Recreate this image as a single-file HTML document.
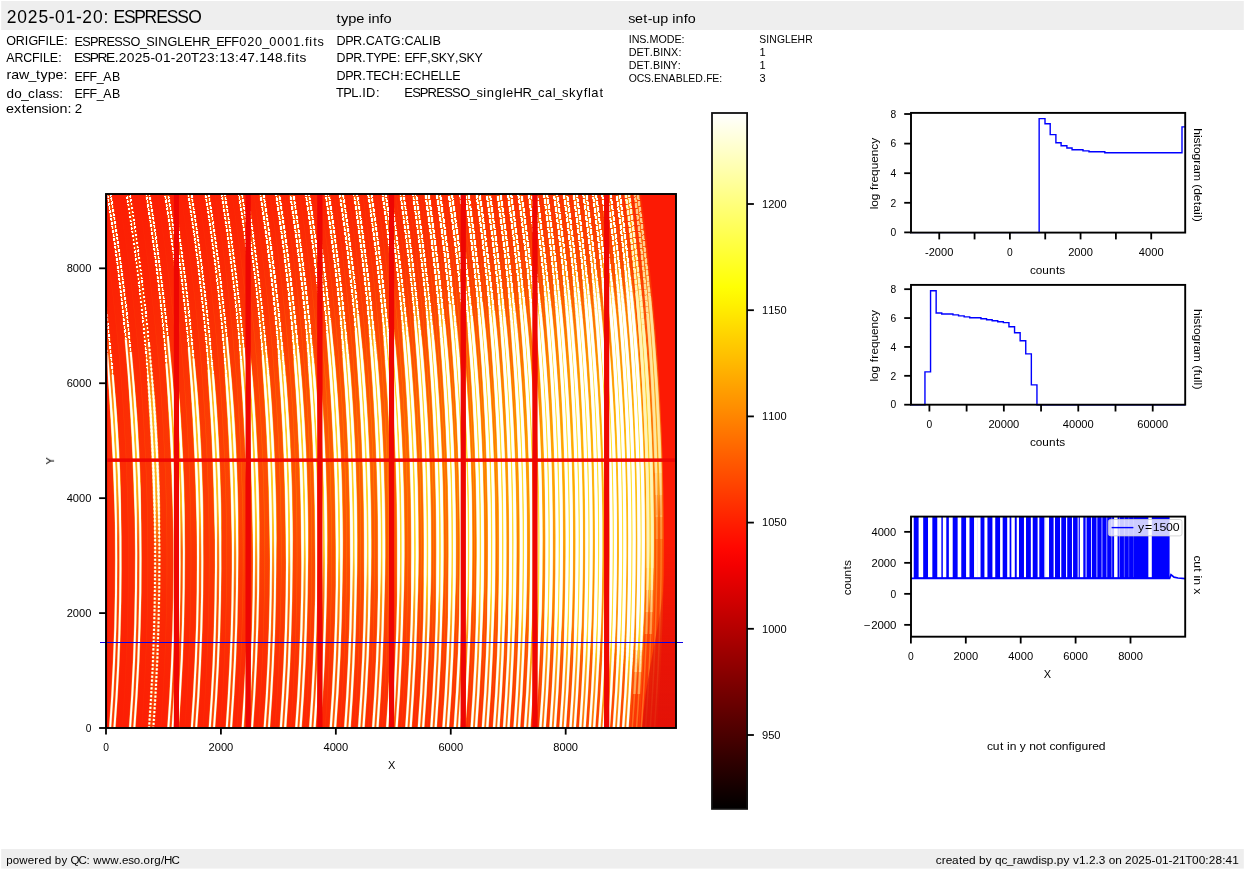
<!DOCTYPE html>
<html><head><meta charset="utf-8"><title>2025-01-20: ESPRESSO</title>
<style>html,body{margin:0;padding:0;background:#fff;}body{width:1245px;height:870px;overflow:hidden;font-family:"Liberation Sans",sans-serif;}svg{display:block;position:absolute;left:0;top:0;will-change:transform;}text{font-family:"Liberation Sans",sans-serif;white-space:pre;}</style>
</head><body>
<svg width="1245" height="870" viewBox="0 0 1245 870">
<defs><linearGradient id="hot" x1="0" y1="0" x2="0" y2="1"><stop offset="0.0000" stop-color="rgb(255,255,255)"/><stop offset="0.0250" stop-color="rgb(255,255,230)"/><stop offset="0.0500" stop-color="rgb(255,255,205)"/><stop offset="0.0750" stop-color="rgb(255,255,180)"/><stop offset="0.1000" stop-color="rgb(255,255,155)"/><stop offset="0.1250" stop-color="rgb(255,255,129)"/><stop offset="0.1500" stop-color="rgb(255,255,104)"/><stop offset="0.1750" stop-color="rgb(255,255,79)"/><stop offset="0.2000" stop-color="rgb(255,255,54)"/><stop offset="0.2250" stop-color="rgb(255,255,29)"/><stop offset="0.2500" stop-color="rgb(255,255,4)"/><stop offset="0.2750" stop-color="rgb(255,241,0)"/><stop offset="0.3000" stop-color="rgb(255,224,0)"/><stop offset="0.3250" stop-color="rgb(255,207,0)"/><stop offset="0.3500" stop-color="rgb(255,191,0)"/><stop offset="0.3750" stop-color="rgb(255,174,0)"/><stop offset="0.4000" stop-color="rgb(255,157,0)"/><stop offset="0.4250" stop-color="rgb(255,141,0)"/><stop offset="0.4500" stop-color="rgb(255,124,0)"/><stop offset="0.4750" stop-color="rgb(255,107,0)"/><stop offset="0.5000" stop-color="rgb(255,90,0)"/><stop offset="0.5250" stop-color="rgb(255,74,0)"/><stop offset="0.5500" stop-color="rgb(255,57,0)"/><stop offset="0.5750" stop-color="rgb(255,40,0)"/><stop offset="0.6000" stop-color="rgb(255,23,0)"/><stop offset="0.6250" stop-color="rgb(255,7,0)"/><stop offset="0.6500" stop-color="rgb(244,0,0)"/><stop offset="0.6750" stop-color="rgb(227,0,0)"/><stop offset="0.7000" stop-color="rgb(210,0,0)"/><stop offset="0.7250" stop-color="rgb(192,0,0)"/><stop offset="0.7500" stop-color="rgb(175,0,0)"/><stop offset="0.7750" stop-color="rgb(157,0,0)"/><stop offset="0.8000" stop-color="rgb(140,0,0)"/><stop offset="0.8250" stop-color="rgb(122,0,0)"/><stop offset="0.8500" stop-color="rgb(105,0,0)"/><stop offset="0.8750" stop-color="rgb(87,0,0)"/><stop offset="0.9000" stop-color="rgb(70,0,0)"/><stop offset="0.9250" stop-color="rgb(52,0,0)"/><stop offset="0.9500" stop-color="rgb(35,0,0)"/><stop offset="0.9750" stop-color="rgb(17,0,0)"/><stop offset="1.0000" stop-color="rgb(0,0,0)"/></linearGradient><linearGradient id="gy" gradientUnits="userSpaceOnUse" x1="0" y1="194.0" x2="0" y2="728.0"><stop offset="0.00" stop-color="#ffe800" stop-opacity="0.162"/><stop offset="0.05" stop-color="#ffe800" stop-opacity="0.218"/><stop offset="0.10" stop-color="#ffe800" stop-opacity="0.290"/><stop offset="0.15" stop-color="#ffe800" stop-opacity="0.379"/><stop offset="0.20" stop-color="#ffe800" stop-opacity="0.482"/><stop offset="0.25" stop-color="#ffe800" stop-opacity="0.593"/><stop offset="0.30" stop-color="#ffe800" stop-opacity="0.707"/><stop offset="0.35" stop-color="#ffe800" stop-opacity="0.814"/><stop offset="0.40" stop-color="#ffe800" stop-opacity="0.904"/><stop offset="0.45" stop-color="#ffe800" stop-opacity="0.967"/><stop offset="0.50" stop-color="#ffe800" stop-opacity="0.998"/><stop offset="0.55" stop-color="#ffe800" stop-opacity="0.992"/><stop offset="0.60" stop-color="#ffe800" stop-opacity="0.950"/><stop offset="0.65" stop-color="#ffe800" stop-opacity="0.877"/><stop offset="0.70" stop-color="#ffe800" stop-opacity="0.781"/><stop offset="0.75" stop-color="#ffe800" stop-opacity="0.670"/><stop offset="0.80" stop-color="#ffe800" stop-opacity="0.556"/><stop offset="0.85" stop-color="#ffe800" stop-opacity="0.447"/><stop offset="0.90" stop-color="#ffe800" stop-opacity="0.348"/><stop offset="0.95" stop-color="#ffe800" stop-opacity="0.265"/><stop offset="1.00" stop-color="#ffe800" stop-opacity="0.198"/></linearGradient>
<linearGradient id="gc0" gradientUnits="userSpaceOnUse" x1="0" y1="194.0" x2="0" y2="728.0"><stop offset="0.000" stop-color="#ffe428" stop-opacity="0.12"/><stop offset="0.083" stop-color="#ffe428" stop-opacity="0.12"/><stop offset="0.167" stop-color="#ffe428" stop-opacity="0.12"/><stop offset="0.250" stop-color="#ffe428" stop-opacity="0.12"/><stop offset="0.333" stop-color="#ffe428" stop-opacity="0.25"/><stop offset="0.417" stop-color="#ffe428" stop-opacity="0.64"/><stop offset="0.500" stop-color="#ffe428" stop-opacity="0.67"/><stop offset="0.583" stop-color="#ffe428" stop-opacity="0.47"/><stop offset="0.667" stop-color="#ffe428" stop-opacity="0.13"/><stop offset="0.750" stop-color="#ffe428" stop-opacity="0.12"/><stop offset="0.833" stop-color="#ffe428" stop-opacity="0.12"/><stop offset="0.917" stop-color="#ffe428" stop-opacity="0.12"/><stop offset="1.000" stop-color="#ffe428" stop-opacity="0.12"/></linearGradient>
<linearGradient id="gc1" gradientUnits="userSpaceOnUse" x1="0" y1="194.0" x2="0" y2="728.0"><stop offset="0.000" stop-color="#ffe428" stop-opacity="0.13"/><stop offset="0.083" stop-color="#ffe428" stop-opacity="0.13"/><stop offset="0.167" stop-color="#ffe428" stop-opacity="0.13"/><stop offset="0.250" stop-color="#ffe428" stop-opacity="0.13"/><stop offset="0.333" stop-color="#ffe428" stop-opacity="0.32"/><stop offset="0.417" stop-color="#ffe428" stop-opacity="0.67"/><stop offset="0.500" stop-color="#ffe428" stop-opacity="0.69"/><stop offset="0.583" stop-color="#ffe428" stop-opacity="0.57"/><stop offset="0.667" stop-color="#ffe428" stop-opacity="0.16"/><stop offset="0.750" stop-color="#ffe428" stop-opacity="0.13"/><stop offset="0.833" stop-color="#ffe428" stop-opacity="0.13"/><stop offset="0.917" stop-color="#ffe428" stop-opacity="0.13"/><stop offset="1.000" stop-color="#ffe428" stop-opacity="0.13"/></linearGradient>
<linearGradient id="gc2" gradientUnits="userSpaceOnUse" x1="0" y1="194.0" x2="0" y2="728.0"><stop offset="0.000" stop-color="#ffe428" stop-opacity="0.14"/><stop offset="0.083" stop-color="#ffe428" stop-opacity="0.14"/><stop offset="0.167" stop-color="#ffe428" stop-opacity="0.14"/><stop offset="0.250" stop-color="#ffe428" stop-opacity="0.14"/><stop offset="0.333" stop-color="#ffe428" stop-opacity="0.38"/><stop offset="0.417" stop-color="#ffe428" stop-opacity="0.67"/><stop offset="0.500" stop-color="#ffe428" stop-opacity="0.70"/><stop offset="0.583" stop-color="#ffe428" stop-opacity="0.66"/><stop offset="0.667" stop-color="#ffe428" stop-opacity="0.23"/><stop offset="0.750" stop-color="#ffe428" stop-opacity="0.14"/><stop offset="0.833" stop-color="#ffe428" stop-opacity="0.14"/><stop offset="0.917" stop-color="#ffe428" stop-opacity="0.14"/><stop offset="1.000" stop-color="#ffe428" stop-opacity="0.14"/></linearGradient>
<linearGradient id="gc3" gradientUnits="userSpaceOnUse" x1="0" y1="194.0" x2="0" y2="728.0"><stop offset="0.000" stop-color="#ffe428" stop-opacity="0.15"/><stop offset="0.083" stop-color="#ffe428" stop-opacity="0.15"/><stop offset="0.167" stop-color="#ffe428" stop-opacity="0.15"/><stop offset="0.250" stop-color="#ffe428" stop-opacity="0.15"/><stop offset="0.333" stop-color="#ffe428" stop-opacity="0.44"/><stop offset="0.417" stop-color="#ffe428" stop-opacity="0.68"/><stop offset="0.500" stop-color="#ffe428" stop-opacity="0.72"/><stop offset="0.583" stop-color="#ffe428" stop-opacity="0.71"/><stop offset="0.667" stop-color="#ffe428" stop-opacity="0.33"/><stop offset="0.750" stop-color="#ffe428" stop-opacity="0.16"/><stop offset="0.833" stop-color="#ffe428" stop-opacity="0.15"/><stop offset="0.917" stop-color="#ffe428" stop-opacity="0.15"/><stop offset="1.000" stop-color="#ffe428" stop-opacity="0.15"/></linearGradient>
<linearGradient id="gc4" gradientUnits="userSpaceOnUse" x1="0" y1="194.0" x2="0" y2="728.0"><stop offset="0.000" stop-color="#ffe428" stop-opacity="0.16"/><stop offset="0.083" stop-color="#ffe428" stop-opacity="0.16"/><stop offset="0.167" stop-color="#ffe428" stop-opacity="0.16"/><stop offset="0.250" stop-color="#ffe428" stop-opacity="0.17"/><stop offset="0.333" stop-color="#ffe428" stop-opacity="0.50"/><stop offset="0.417" stop-color="#ffe428" stop-opacity="0.69"/><stop offset="0.500" stop-color="#ffe428" stop-opacity="0.73"/><stop offset="0.583" stop-color="#ffe428" stop-opacity="0.74"/><stop offset="0.667" stop-color="#ffe428" stop-opacity="0.43"/><stop offset="0.750" stop-color="#ffe428" stop-opacity="0.18"/><stop offset="0.833" stop-color="#ffe428" stop-opacity="0.16"/><stop offset="0.917" stop-color="#ffe428" stop-opacity="0.16"/><stop offset="1.000" stop-color="#ffe428" stop-opacity="0.16"/></linearGradient>
<linearGradient id="gc5" gradientUnits="userSpaceOnUse" x1="0" y1="194.0" x2="0" y2="728.0"><stop offset="0.000" stop-color="#ffe428" stop-opacity="0.17"/><stop offset="0.083" stop-color="#ffe428" stop-opacity="0.17"/><stop offset="0.167" stop-color="#ffe428" stop-opacity="0.17"/><stop offset="0.250" stop-color="#ffe428" stop-opacity="0.20"/><stop offset="0.333" stop-color="#ffe428" stop-opacity="0.55"/><stop offset="0.417" stop-color="#ffe428" stop-opacity="0.70"/><stop offset="0.500" stop-color="#ffe428" stop-opacity="0.75"/><stop offset="0.583" stop-color="#ffe428" stop-opacity="0.76"/><stop offset="0.667" stop-color="#ffe428" stop-opacity="0.54"/><stop offset="0.750" stop-color="#ffe428" stop-opacity="0.20"/><stop offset="0.833" stop-color="#ffe428" stop-opacity="0.17"/><stop offset="0.917" stop-color="#ffe428" stop-opacity="0.17"/><stop offset="1.000" stop-color="#ffe428" stop-opacity="0.17"/></linearGradient>
<linearGradient id="gc6" gradientUnits="userSpaceOnUse" x1="0" y1="194.0" x2="0" y2="728.0"><stop offset="0.000" stop-color="#ffe428" stop-opacity="0.18"/><stop offset="0.083" stop-color="#ffe428" stop-opacity="0.18"/><stop offset="0.167" stop-color="#ffe428" stop-opacity="0.18"/><stop offset="0.250" stop-color="#ffe428" stop-opacity="0.24"/><stop offset="0.333" stop-color="#ffe428" stop-opacity="0.60"/><stop offset="0.417" stop-color="#ffe428" stop-opacity="0.72"/><stop offset="0.500" stop-color="#ffe428" stop-opacity="0.77"/><stop offset="0.583" stop-color="#ffe428" stop-opacity="0.78"/><stop offset="0.667" stop-color="#ffe428" stop-opacity="0.64"/><stop offset="0.750" stop-color="#ffe428" stop-opacity="0.24"/><stop offset="0.833" stop-color="#ffe428" stop-opacity="0.18"/><stop offset="0.917" stop-color="#ffe428" stop-opacity="0.18"/><stop offset="1.000" stop-color="#ffe428" stop-opacity="0.18"/></linearGradient>
<linearGradient id="gc7" gradientUnits="userSpaceOnUse" x1="0" y1="194.0" x2="0" y2="728.0"><stop offset="0.000" stop-color="#ffe428" stop-opacity="0.19"/><stop offset="0.083" stop-color="#ffe428" stop-opacity="0.19"/><stop offset="0.167" stop-color="#ffe428" stop-opacity="0.19"/><stop offset="0.250" stop-color="#ffe428" stop-opacity="0.29"/><stop offset="0.333" stop-color="#ffe428" stop-opacity="0.63"/><stop offset="0.417" stop-color="#ffe428" stop-opacity="0.74"/><stop offset="0.500" stop-color="#ffe428" stop-opacity="0.79"/><stop offset="0.583" stop-color="#ffe428" stop-opacity="0.79"/><stop offset="0.667" stop-color="#ffe428" stop-opacity="0.72"/><stop offset="0.750" stop-color="#ffe428" stop-opacity="0.31"/><stop offset="0.833" stop-color="#ffe428" stop-opacity="0.19"/><stop offset="0.917" stop-color="#ffe428" stop-opacity="0.19"/><stop offset="1.000" stop-color="#ffe428" stop-opacity="0.19"/></linearGradient>
<linearGradient id="gc8" gradientUnits="userSpaceOnUse" x1="0" y1="194.0" x2="0" y2="728.0"><stop offset="0.000" stop-color="#ffe428" stop-opacity="0.20"/><stop offset="0.083" stop-color="#ffe428" stop-opacity="0.20"/><stop offset="0.167" stop-color="#ffe428" stop-opacity="0.20"/><stop offset="0.250" stop-color="#ffe428" stop-opacity="0.34"/><stop offset="0.333" stop-color="#ffe428" stop-opacity="0.66"/><stop offset="0.417" stop-color="#ffe428" stop-opacity="0.76"/><stop offset="0.500" stop-color="#ffe428" stop-opacity="0.81"/><stop offset="0.583" stop-color="#ffe428" stop-opacity="0.81"/><stop offset="0.667" stop-color="#ffe428" stop-opacity="0.78"/><stop offset="0.750" stop-color="#ffe428" stop-opacity="0.41"/><stop offset="0.833" stop-color="#ffe428" stop-opacity="0.21"/><stop offset="0.917" stop-color="#ffe428" stop-opacity="0.20"/><stop offset="1.000" stop-color="#ffe428" stop-opacity="0.20"/></linearGradient>
<linearGradient id="gc9" gradientUnits="userSpaceOnUse" x1="0" y1="194.0" x2="0" y2="728.0"><stop offset="0.000" stop-color="#ffe428" stop-opacity="0.21"/><stop offset="0.083" stop-color="#ffe428" stop-opacity="0.21"/><stop offset="0.167" stop-color="#ffe428" stop-opacity="0.21"/><stop offset="0.250" stop-color="#ffe428" stop-opacity="0.39"/><stop offset="0.333" stop-color="#ffe428" stop-opacity="0.67"/><stop offset="0.417" stop-color="#ffe428" stop-opacity="0.78"/><stop offset="0.500" stop-color="#ffe428" stop-opacity="0.83"/><stop offset="0.583" stop-color="#ffe428" stop-opacity="0.83"/><stop offset="0.667" stop-color="#ffe428" stop-opacity="0.82"/><stop offset="0.750" stop-color="#ffe428" stop-opacity="0.51"/><stop offset="0.833" stop-color="#ffe428" stop-opacity="0.24"/><stop offset="0.917" stop-color="#ffe428" stop-opacity="0.21"/><stop offset="1.000" stop-color="#ffe428" stop-opacity="0.21"/></linearGradient>
<linearGradient id="gc10" gradientUnits="userSpaceOnUse" x1="0" y1="194.0" x2="0" y2="728.0"><stop offset="0.000" stop-color="#ffe428" stop-opacity="0.22"/><stop offset="0.083" stop-color="#ffe428" stop-opacity="0.22"/><stop offset="0.167" stop-color="#ffe428" stop-opacity="0.22"/><stop offset="0.250" stop-color="#ffe428" stop-opacity="0.44"/><stop offset="0.333" stop-color="#ffe428" stop-opacity="0.69"/><stop offset="0.417" stop-color="#ffe428" stop-opacity="0.80"/><stop offset="0.500" stop-color="#ffe428" stop-opacity="0.84"/><stop offset="0.583" stop-color="#ffe428" stop-opacity="0.84"/><stop offset="0.667" stop-color="#ffe428" stop-opacity="0.84"/><stop offset="0.750" stop-color="#ffe428" stop-opacity="0.61"/><stop offset="0.833" stop-color="#ffe428" stop-opacity="0.28"/><stop offset="0.917" stop-color="#ffe428" stop-opacity="0.22"/><stop offset="1.000" stop-color="#ffe428" stop-opacity="0.22"/></linearGradient>
<linearGradient id="gc11" gradientUnits="userSpaceOnUse" x1="0" y1="194.0" x2="0" y2="728.0"><stop offset="0.000" stop-color="#ffe428" stop-opacity="0.22"/><stop offset="0.083" stop-color="#ffe428" stop-opacity="0.22"/><stop offset="0.167" stop-color="#ffe428" stop-opacity="0.23"/><stop offset="0.250" stop-color="#ffe428" stop-opacity="0.48"/><stop offset="0.333" stop-color="#ffe428" stop-opacity="0.71"/><stop offset="0.417" stop-color="#ffe428" stop-opacity="0.83"/><stop offset="0.500" stop-color="#ffe428" stop-opacity="0.86"/><stop offset="0.583" stop-color="#ffe428" stop-opacity="0.86"/><stop offset="0.667" stop-color="#ffe428" stop-opacity="0.86"/><stop offset="0.750" stop-color="#ffe428" stop-opacity="0.70"/><stop offset="0.833" stop-color="#ffe428" stop-opacity="0.33"/><stop offset="0.917" stop-color="#ffe428" stop-opacity="0.22"/><stop offset="1.000" stop-color="#ffe428" stop-opacity="0.22"/></linearGradient>
<linearGradient id="gc12" gradientUnits="userSpaceOnUse" x1="0" y1="194.0" x2="0" y2="728.0"><stop offset="0.000" stop-color="#ffe428" stop-opacity="0.23"/><stop offset="0.083" stop-color="#ffe428" stop-opacity="0.23"/><stop offset="0.167" stop-color="#ffe428" stop-opacity="0.25"/><stop offset="0.250" stop-color="#ffe428" stop-opacity="0.53"/><stop offset="0.333" stop-color="#ffe428" stop-opacity="0.73"/><stop offset="0.417" stop-color="#ffe428" stop-opacity="0.86"/><stop offset="0.500" stop-color="#ffe428" stop-opacity="0.88"/><stop offset="0.583" stop-color="#ffe428" stop-opacity="0.88"/><stop offset="0.667" stop-color="#ffe428" stop-opacity="0.88"/><stop offset="0.750" stop-color="#ffe428" stop-opacity="0.78"/><stop offset="0.833" stop-color="#ffe428" stop-opacity="0.40"/><stop offset="0.917" stop-color="#ffe428" stop-opacity="0.24"/><stop offset="1.000" stop-color="#ffe428" stop-opacity="0.23"/></linearGradient>
<linearGradient id="gc13" gradientUnits="userSpaceOnUse" x1="0" y1="194.0" x2="0" y2="728.0"><stop offset="0.000" stop-color="#ffe428" stop-opacity="0.24"/><stop offset="0.083" stop-color="#ffe428" stop-opacity="0.24"/><stop offset="0.167" stop-color="#ffe428" stop-opacity="0.28"/><stop offset="0.250" stop-color="#ffe428" stop-opacity="0.56"/><stop offset="0.333" stop-color="#ffe428" stop-opacity="0.76"/><stop offset="0.417" stop-color="#ffe428" stop-opacity="0.88"/><stop offset="0.500" stop-color="#ffe428" stop-opacity="0.89"/><stop offset="0.583" stop-color="#ffe428" stop-opacity="0.89"/><stop offset="0.667" stop-color="#ffe428" stop-opacity="0.89"/><stop offset="0.750" stop-color="#ffe428" stop-opacity="0.85"/><stop offset="0.833" stop-color="#ffe428" stop-opacity="0.49"/><stop offset="0.917" stop-color="#ffe428" stop-opacity="0.26"/><stop offset="1.000" stop-color="#ffe428" stop-opacity="0.24"/></linearGradient>
<linearGradient id="gc14" gradientUnits="userSpaceOnUse" x1="0" y1="194.0" x2="0" y2="728.0"><stop offset="0.000" stop-color="#ffe428" stop-opacity="0.25"/><stop offset="0.083" stop-color="#ffe428" stop-opacity="0.25"/><stop offset="0.167" stop-color="#ffe428" stop-opacity="0.32"/><stop offset="0.250" stop-color="#ffe428" stop-opacity="0.59"/><stop offset="0.333" stop-color="#ffe428" stop-opacity="0.79"/><stop offset="0.417" stop-color="#ffe428" stop-opacity="0.90"/><stop offset="0.500" stop-color="#ffe428" stop-opacity="0.91"/><stop offset="0.583" stop-color="#ffe428" stop-opacity="0.91"/><stop offset="0.667" stop-color="#ffe428" stop-opacity="0.91"/><stop offset="0.750" stop-color="#ffe428" stop-opacity="0.89"/><stop offset="0.833" stop-color="#ffe428" stop-opacity="0.59"/><stop offset="0.917" stop-color="#ffe428" stop-opacity="0.30"/><stop offset="1.000" stop-color="#ffe428" stop-opacity="0.25"/></linearGradient>
<linearGradient id="gc15" gradientUnits="userSpaceOnUse" x1="0" y1="194.0" x2="0" y2="728.0"><stop offset="0.000" stop-color="#ffe428" stop-opacity="0.26"/><stop offset="0.083" stop-color="#ffe428" stop-opacity="0.26"/><stop offset="0.167" stop-color="#ffe428" stop-opacity="0.35"/><stop offset="0.250" stop-color="#ffe428" stop-opacity="0.62"/><stop offset="0.333" stop-color="#ffe428" stop-opacity="0.82"/><stop offset="0.417" stop-color="#ffe428" stop-opacity="0.93"/><stop offset="0.500" stop-color="#ffe428" stop-opacity="0.93"/><stop offset="0.583" stop-color="#ffe428" stop-opacity="0.93"/><stop offset="0.667" stop-color="#ffe428" stop-opacity="0.93"/><stop offset="0.750" stop-color="#ffe428" stop-opacity="0.92"/><stop offset="0.833" stop-color="#ffe428" stop-opacity="0.68"/><stop offset="0.917" stop-color="#ffe428" stop-opacity="0.35"/><stop offset="1.000" stop-color="#ffe428" stop-opacity="0.26"/></linearGradient>
<linearGradient id="gc16" gradientUnits="userSpaceOnUse" x1="0" y1="194.0" x2="0" y2="728.0"><stop offset="0.000" stop-color="#ffe428" stop-opacity="0.27"/><stop offset="0.083" stop-color="#ffe428" stop-opacity="0.27"/><stop offset="0.167" stop-color="#ffe428" stop-opacity="0.39"/><stop offset="0.250" stop-color="#ffe428" stop-opacity="0.65"/><stop offset="0.333" stop-color="#ffe428" stop-opacity="0.85"/><stop offset="0.417" stop-color="#ffe428" stop-opacity="0.94"/><stop offset="0.500" stop-color="#ffe428" stop-opacity="0.94"/><stop offset="0.583" stop-color="#ffe428" stop-opacity="0.94"/><stop offset="0.667" stop-color="#ffe428" stop-opacity="0.94"/><stop offset="0.750" stop-color="#ffe428" stop-opacity="0.94"/><stop offset="0.833" stop-color="#ffe428" stop-opacity="0.77"/><stop offset="0.917" stop-color="#ffe428" stop-opacity="0.41"/><stop offset="1.000" stop-color="#ffe428" stop-opacity="0.27"/></linearGradient>
<linearGradient id="gc17" gradientUnits="userSpaceOnUse" x1="0" y1="194.0" x2="0" y2="728.0"><stop offset="0.000" stop-color="#ffe428" stop-opacity="0.28"/><stop offset="0.083" stop-color="#ffe428" stop-opacity="0.28"/><stop offset="0.167" stop-color="#ffe428" stop-opacity="0.42"/><stop offset="0.250" stop-color="#ffe428" stop-opacity="0.68"/><stop offset="0.333" stop-color="#ffe428" stop-opacity="0.89"/><stop offset="0.417" stop-color="#ffe428" stop-opacity="0.95"/><stop offset="0.500" stop-color="#ffe428" stop-opacity="0.95"/><stop offset="0.583" stop-color="#ffe428" stop-opacity="0.95"/><stop offset="0.667" stop-color="#ffe428" stop-opacity="0.95"/><stop offset="0.750" stop-color="#ffe428" stop-opacity="0.95"/><stop offset="0.833" stop-color="#ffe428" stop-opacity="0.85"/><stop offset="0.917" stop-color="#ffe428" stop-opacity="0.49"/><stop offset="1.000" stop-color="#ffe428" stop-opacity="0.28"/></linearGradient>
<linearGradient id="gc18" gradientUnits="userSpaceOnUse" x1="0" y1="194.0" x2="0" y2="728.0"><stop offset="0.000" stop-color="#ffe428" stop-opacity="0.29"/><stop offset="0.083" stop-color="#ffe428" stop-opacity="0.29"/><stop offset="0.167" stop-color="#ffe428" stop-opacity="0.45"/><stop offset="0.250" stop-color="#ffe428" stop-opacity="0.71"/><stop offset="0.333" stop-color="#ffe428" stop-opacity="0.92"/><stop offset="0.417" stop-color="#ffe428" stop-opacity="0.95"/><stop offset="0.500" stop-color="#ffe428" stop-opacity="0.95"/><stop offset="0.583" stop-color="#ffe428" stop-opacity="0.95"/><stop offset="0.667" stop-color="#ffe428" stop-opacity="0.95"/><stop offset="0.750" stop-color="#ffe428" stop-opacity="0.95"/><stop offset="0.833" stop-color="#ffe428" stop-opacity="0.91"/><stop offset="0.917" stop-color="#ffe428" stop-opacity="0.58"/><stop offset="1.000" stop-color="#ffe428" stop-opacity="0.31"/></linearGradient>
<linearGradient id="gc19" gradientUnits="userSpaceOnUse" x1="0" y1="194.0" x2="0" y2="728.0"><stop offset="0.000" stop-color="#ffe428" stop-opacity="0.30"/><stop offset="0.083" stop-color="#ffe428" stop-opacity="0.31"/><stop offset="0.167" stop-color="#ffe428" stop-opacity="0.48"/><stop offset="0.250" stop-color="#ffe428" stop-opacity="0.74"/><stop offset="0.333" stop-color="#ffe428" stop-opacity="0.95"/><stop offset="0.417" stop-color="#ffe428" stop-opacity="0.95"/><stop offset="0.500" stop-color="#ffe428" stop-opacity="0.95"/><stop offset="0.583" stop-color="#ffe428" stop-opacity="0.95"/><stop offset="0.667" stop-color="#ffe428" stop-opacity="0.95"/><stop offset="0.750" stop-color="#ffe428" stop-opacity="0.95"/><stop offset="0.833" stop-color="#ffe428" stop-opacity="0.95"/><stop offset="0.917" stop-color="#ffe428" stop-opacity="0.67"/><stop offset="1.000" stop-color="#ffe428" stop-opacity="0.36"/></linearGradient>
<g id="td0"><path d="M-20.5,192 -18.5,204.5 -16.6,217 -14.8,229.5 -13,241.9 -11.3,254.4 -9.7,266.9 -8.1,279.4 -6.6,291.9 -5.2,304.4 -3.9,316.9 -2.6,329.4 -1.4,341.8 -0.2,354.3" stroke-dashoffset="1.8"/>
<path d="M-17.3,192 -15,206.1 -12.9,220.1 -10.8,234.2 -8.8,248.3 -6.9,262.3 -5,276.4 -3.3,290.4 -1.6,304.5 -0.1,318.6 1.4,332.6 2.8,346.7 4.2,360.8 5.4,374.8" stroke-dashoffset="0.3"/>
<path d="M-0.3,192 1.5,203.3 3.3,214.7 4.9,226 6.6,237.4 8.1,248.7 9.6,260 11,271.4 12.4,282.7 13.8,294 15,305.4 16.2,316.7 17.4,328.1 18.5,339.4" stroke-dashoffset="1.3"/>
<path d="M3,192 4.9,204.3 6.8,216.6 8.6,228.9 10.4,241.2 12.1,253.5 13.7,265.7 15.3,278 16.8,290.3 18.3,302.6 19.7,314.9 21,327.2 22.2,339.5 23.4,351.8" stroke-dashoffset="2.4"/>
<path d="M19,192 21.3,206.7 23.5,221.4 25.6,236.1 27.6,250.9 29.5,265.6 31.3,280.3 33,295 34.6,309.7 36.1,324.4 37.5,339.2 38.9,353.9 40.1,368.6 41.2,383.3" stroke-dashoffset="3.2" stroke-dasharray="2.2 1.7"/>
<path d="M22.2,192 24.1,203.8 25.9,215.5 27.6,227.3 29.3,239 30.9,250.8 32.5,262.6 34,274.3 35.4,286.1 36.8,297.8 38.2,309.6 39.5,321.4 40.7,333.1 41.8,344.9" stroke-dashoffset="4.3" stroke-dasharray="2.2 1.7"/>
<path d="M38.6,192 40.6,205.2 42.6,218.4 44.5,231.6 46.3,244.8 48.1,258 49.7,271.2 51.3,284.3 52.8,297.5 54.2,310.7 55.6,323.9 56.8,337.1 58,350.3 59.1,363.5" stroke-dashoffset="3.4"/>
<path d="M41.8,192 43.6,203.2 45.3,214.4 46.9,225.6 48.5,236.9 50.1,248.1 51.6,259.3 53,270.5 54.4,281.7 55.8,292.9 57.1,304.1 58.3,315.4 59.5,326.6 60.6,337.8" stroke-dashoffset="3.0"/>
<path d="M57.3,192 59.2,204.1 61,216.1 62.7,228.2 64.4,240.3 66,252.3 67.5,264.4 69,276.5 70.4,288.6 71.7,300.6 73,312.7 74.2,324.8 75.4,336.8 76.5,348.9" stroke-dashoffset="4.3"/>
<path d="M60.6,192 62.5,204.8 64.5,217.6 66.3,230.4 68.1,243.2 69.8,256 71.5,268.9 73.1,281.7 74.6,294.5 76,307.3 77.4,320.1 78.7,332.9 80,345.7 81.1,358.5" stroke-dashoffset="4.4"/>
<path d="M75.5,192 77.6,205.7 79.6,219.4 81.6,233.1 83.4,246.7 85.2,260.4 86.8,274.1 88.4,287.8 89.9,301.5 91.4,315.2 92.7,328.9 94,342.6 95.2,356.2 96.3,369.9" stroke-dashoffset="2.0"/>
<path d="M78.8,192 80.9,206.1 83,220.1 85,234.2 86.9,248.2 88.8,262.3 90.5,276.4 92.2,290.4 93.8,304.5 95.3,318.5 96.8,332.6 98.1,346.7 99.4,360.7 100.6,374.8" stroke-dashoffset="4.7"/>
<path d="M92.7,192 94.9,206.2 97,220.5 99,234.7 100.9,249 102.7,263.2 104.4,277.5 106,291.7 107.5,306 109,320.2 110.3,334.4 111.6,348.7 112.8,362.9 113.9,377.2" stroke-dashoffset="0.7"/>
<path d="M96,192 97.7,203.4 99.4,214.8 101.1,226.2 102.7,237.6 104.2,249 105.7,260.4 107.1,271.8 108.5,283.1 109.8,294.5 111.1,305.9 112.3,317.3 113.5,328.7 114.6,340.1" stroke-dashoffset="2.2"/>
<path d="M108.9,192 110.9,205 112.8,218 114.6,231 116.4,244.1 118,257.1 119.6,270.1 121.1,283.1 122.6,296.1 123.9,309.1 125.2,322.1 126.5,335.2 127.6,348.2 128.7,361.2" stroke-dashoffset="2.5"/>
<path d="M112.2,192 114,204 115.8,216 117.5,227.9 119.1,239.9 120.7,251.9 122.2,263.9 123.7,275.8 125.1,287.8 126.5,299.8 127.8,311.8 129,323.8 130.2,335.7 131.3,347.7" stroke-dashoffset="2.9"/>
<path d="M126.1,192 128,204.7 129.9,217.4 131.6,230 133.3,242.7 134.9,255.4 136.5,268.1 138,280.8 139.4,293.4 140.7,306.1 142,318.8 143.2,331.5 144.3,344.2 145.4,356.8" stroke-dashoffset="3.4"/>
<path d="M129.4,192 131.5,206.2 133.6,220.3 135.5,234.5 137.4,248.7 139.2,262.8 141,277 142.6,291.2 144.2,305.3 145.7,319.5 147.1,333.6 148.4,347.8 149.7,362 150.8,376.1" stroke-dashoffset="5.0"/></g>
<g id="ts0"><path d="M-0.2,354.3 2.5,388.5 4.8,422.6 6.6,456.8 7.8,490.9 8.7,525.1 8.9,559.2 8.7,593.4 8,627.5 6.7,661.7 5,695.8 2.7,730"/>
<path d="M5.4,374.8 7.9,407.1 9.9,439.4 11.5,471.7 12.5,504 13.1,536.3 13.2,568.6 12.9,600.8 12.1,633.1 10.9,665.4 9.2,697.7 7,730"/>
<path d="M18.5,339.4 21.5,374.9 24.1,410.4 26.1,445.9 27.5,481.4 28.5,516.9 28.9,552.5 28.7,588 28,623.5 26.8,659 25,694.5 22.6,730"/>
<path d="M23.4,351.8 26.4,386.2 28.8,420.6 30.7,454.9 32.1,489.3 32.9,523.7 33.2,558.1 33,592.5 32.2,626.9 31,661.2 29.2,695.6 26.9,730"/>
<path d="M41.2,383.3 43.4,414.8 45.1,446.3 46.4,477.9 47.3,509.4 47.8,540.9 47.8,572.4 47.4,603.9 46.6,635.4 45.4,667 43.7,698.5 41.6,730" stroke-dasharray="2.2 1.7"/>
<path d="M41.8,344.9 44.9,379.9 47.5,414.9 49.5,449.9 50.9,484.9 51.8,519.9 52.1,554.9 51.9,590 51.2,625 50,660 48.2,695 45.9,730" stroke-dasharray="2.2 1.7"/>
<path d="M59.1,363.5 61.6,396.8 63.7,430.1 65.2,463.4 66.4,496.8 67,530.1 67.2,563.4 66.9,596.7 66.1,630 64.8,663.4 63.1,696.7 60.9,730"/>
<path d="M60.6,337.8 63.9,373.4 66.5,409.1 68.6,444.7 70.1,480.4 71.1,516.1 71.5,551.7 71.3,587.4 70.6,623 69.4,658.7 67.5,694.3 65.2,730"/>
<path d="M76.5,348.9 79.2,383.6 81.5,418.2 83.3,452.8 84.6,487.5 85.4,522.1 85.6,556.8 85.4,591.4 84.7,626.1 83.4,660.7 81.6,695.4 79.3,730"/>
<path d="M81.1,358.5 83.9,392.3 86.1,426.1 87.8,459.8 89,493.6 89.7,527.4 89.9,561.1 89.7,594.9 88.9,628.7 87.6,662.5 85.9,696.2 83.6,730"/>
<path d="M96.3,369.9 98.6,402.7 100.5,435.4 101.9,468.1 102.9,500.9 103.5,533.6 103.6,566.3 103.2,599.1 102.4,631.8 101.2,664.5 99.4,697.3 97.2,730"/>
<path d="M100.6,374.8 102.9,407.1 104.9,439.4 106.3,471.7 107.3,504 107.8,536.3 107.9,568.5 107.5,600.8 106.7,633.1 105.4,665.4 103.7,697.7 101.5,730"/>
<path d="M113.9,377.2 116,409.3 117.8,441.3 119.1,473.4 120,505.5 120.5,537.6 120.5,569.6 120.1,601.7 119.3,633.8 118,665.9 116.3,697.9 114.2,730"/>
<path d="M114.6,340.1 117.7,375.6 120.2,411 122.2,446.4 123.7,481.9 124.5,517.3 124.9,552.8 124.6,588.2 123.9,623.7 122.6,659.1 120.8,694.6 118.5,730"/>
<path d="M128.7,361.2 131.1,394.7 133.1,428.2 134.6,461.8 135.7,495.3 136.4,528.8 136.5,562.4 136.2,595.9 135.4,629.4 134.1,662.9 132.3,696.5 130.1,730"/>
<path d="M131.3,347.7 134.3,382.5 136.6,417.2 138.5,452 139.8,486.7 140.6,521.5 140.8,556.2 140.6,591 139.8,625.7 138.5,660.5 136.7,695.2 134.4,730"/>
<path d="M145.4,356.8 147.9,390.8 149.9,424.7 151.5,458.6 152.6,492.5 153.3,526.5 153.5,560.4 153.2,594.3 152.4,628.2 151.1,662.2 149.3,696.1 147,730"/>
<path d="M150.8,376.1 153.1,408.3 154.9,440.5 156.3,472.6 157.2,504.8 157.7,537 157.7,569.2 157.3,601.3 156.5,633.5 155.2,665.7 153.5,697.8 151.3,730"/></g>
<g id="td1"><path d="M142.5,192 144.4,204.9 146.3,217.8 148.1,230.7 149.8,243.6 151.4,256.5 153,269.5 154.5,282.4 155.9,295.3 157.2,308.2 158.5,321.1 159.7,334 160.8,346.9 161.9,359.8" stroke-dashoffset="4.3"/>
<path d="M145.8,192 147.9,206.2 149.9,220.3 151.9,234.5 153.8,248.7 155.6,262.9 157.3,277 158.9,291.2 160.5,305.4 162,319.6 163.4,333.7 164.7,347.9 165.9,362.1 167.1,376.2" stroke-dashoffset="2.8"/>
<path d="M158.2,192 160.1,205 162,217.9 163.8,230.9 165.5,243.8 167.1,256.8 168.6,269.7 170.1,282.7 171.5,295.6 172.9,308.6 174.1,321.5 175.3,334.5 176.4,347.4 177.5,360.4" stroke-dashoffset="4.2"/>
<path d="M161.4,192 163.3,204.3 165.1,216.7 166.8,229 168.5,241.4 170.1,253.7 171.6,266.1 173.1,278.4 174.5,290.8 175.9,303.1 177.2,315.5 178.4,327.8 179.6,340.2 180.7,352.5" stroke-dashoffset="0.3"/>
<path d="M172.4,192 174.3,205.4 176.3,218.9 178.1,232.3 179.8,245.7 181.5,259.2 183.1,272.6 184.6,286 186,299.5 187.4,312.9 188.6,326.3 189.8,339.7 191,353.2 192,366.6" stroke-dashoffset="0.4"/>
<path d="M175.6,192 177.6,205.2 179.5,218.4 181.3,231.6 183,244.8 184.7,258 186.3,271.2 187.9,284.4 189.3,297.6 190.7,310.8 192.1,324 193.3,337.2 194.5,350.4 195.6,363.6" stroke-dashoffset="0.8"/>
<path d="M188,192 189.6,202.9 191.2,213.8 192.7,224.6 194.1,235.5 195.5,246.4 196.9,257.3 198.2,268.2 199.4,279 200.6,289.9 201.7,300.8 202.8,311.7 203.9,322.6 204.8,333.4" stroke-dashoffset="4.4"/>
<path d="M191.3,192 192.7,201.8 194.2,211.6 195.5,221.4 196.9,231.2 198.2,241 199.4,250.8 200.7,260.6 201.8,270.4 203,280.2 204.1,290 205.2,299.9 206.2,309.7 207.2,319.5" stroke-dashoffset="0.2"/>
<path d="M202.7,192 204.6,204.6 206.3,217.2 208,229.7 209.6,242.3 211.2,254.9 212.7,267.5 214.1,280.1 215.5,292.6 216.8,305.2 218,317.8 219.1,330.4 220.2,343 221.2,355.5" stroke-dashoffset="4.4"/>
<path d="M206,192 208,205.7 209.9,219.4 211.8,233.1 213.5,246.8 215.3,260.5 216.9,274.3 218.5,288 220,301.7 221.4,315.4 222.7,329.1 224,342.8 225.2,356.5 226.3,370.2" stroke-dashoffset="5.0"/>
<path d="M216.9,192 218.4,202.7 219.9,213.4 221.4,224.1 222.8,234.8 224.2,245.5 225.5,256.2 226.7,266.9 227.9,277.5 229.1,288.2 230.2,298.9 231.3,309.6 232.3,320.3 233.3,331" stroke-dashoffset="3.0"/>
<path d="M220.1,192 221.5,201.5 222.9,211 224.2,220.5 225.5,230 226.7,239.5 227.9,249 229.1,258.5 230.3,268 231.4,277.4 232.4,286.9 233.5,296.4 234.5,305.9 235.4,315.4" stroke-dashoffset="2.0"/>
<path d="M231,192 232.8,203.9 234.4,215.7 236,227.6 237.5,239.5 239,251.3 240.4,263.2 241.8,275 243,286.9 244.3,298.8 245.4,310.6 246.6,322.5 247.6,334.4 248.6,346.2" stroke-dashoffset="0.2"/>
<path d="M234.3,192 236.2,205 238,217.9 239.7,230.9 241.4,243.9 243,256.9 244.6,269.8 246.1,282.8 247.5,295.8 248.8,308.7 250.1,321.7 251.4,334.7 252.5,347.7 253.6,360.6" stroke-dashoffset="4.8"/>
<path d="M245.3,192 247.2,205 249,217.9 250.7,230.9 252.3,243.9 253.9,256.8 255.4,269.8 256.8,282.8 258.2,295.8 259.4,308.7 260.7,321.7 261.8,334.7 262.9,347.6 263.9,360.6" stroke-dashoffset="2.3"/>
<path d="M248.6,192 250.2,203.3 251.8,214.7 253.3,226 254.8,237.4 256.2,248.7 257.6,260.1 259,271.4 260.3,282.8 261.5,294.1 262.7,305.5 263.8,316.8 264.9,328.2 265.9,339.5" stroke-dashoffset="3.0"/>
<path d="M259.6,192 261.2,203.4 262.8,214.8 264.3,226.2 265.7,237.6 267.2,248.9 268.5,260.3 269.8,271.7 271,283.1 272.2,294.5 273.3,305.9 274.4,317.3 275.4,328.7 276.4,340.1" stroke-dashoffset="4.7"/>
<path d="M262.8,192 264.4,203.2 266,214.3 267.5,225.5 268.9,236.7 270.3,247.8 271.7,259 273,270.2 274.3,281.3 275.5,292.5 276.7,303.6 277.8,314.8 278.9,326 279.9,337.1" stroke-dashoffset="3.6"/>
<path d="M272.3,192 273.7,201.9 275.1,211.8 276.4,221.7 277.7,231.6 278.9,241.5 280.1,251.3 281.3,261.2 282.4,271.1 283.5,281 284.5,290.9 285.5,300.8 286.5,310.7 287.4,320.6" stroke-dashoffset="4.9"/>
<path d="M275.6,192 277.1,203.1 278.7,214.2 280.2,225.3 281.6,236.5 283,247.6 284.4,258.7 285.7,269.8 286.9,280.9 288.1,292 289.3,303.1 290.4,314.2 291.5,325.4 292.5,336.5" stroke-dashoffset="0.1"/>
<path d="M285,192 286.4,202.5 287.9,213.1 289.3,223.6 290.6,234.2 292,244.7 293.2,255.3 294.4,265.8 295.6,276.4 296.7,286.9 297.8,297.4 298.8,308 299.8,318.5 300.7,329.1" stroke-dashoffset="0.1"/>
<path d="M288.2,192 289.8,203.4 291.4,214.8 292.9,226.2 294.4,237.6 295.8,249 297.2,260.5 298.5,271.9 299.8,283.3 301,294.7 302.2,306.1 303.3,317.5 304.4,328.9 305.4,340.3" stroke-dashoffset="0.3"/></g>
<g id="ts1"><path d="M161.9,359.8 164.3,393.5 166.3,427.1 167.8,460.8 168.9,494.4 169.5,528.1 169.6,561.7 169.3,595.4 168.5,629 167.2,662.7 165.4,696.3 163.2,730"/>
<path d="M167.1,376.2 169.3,408.4 171.2,440.6 172.5,472.7 173.4,504.9 173.9,537 173.9,569.2 173.5,601.4 172.6,633.5 171.4,665.7 169.6,697.8 167.5,730"/>
<path d="M177.5,360.4 179.9,394 181.8,427.6 183.3,461.2 184.4,494.8 185,528.4 185.1,562 184.7,595.6 183.9,629.2 182.6,662.8 180.9,696.4 178.6,730"/>
<path d="M180.7,352.5 183.4,386.9 185.6,421.2 187.3,455.5 188.5,489.8 189.2,524.1 189.4,558.4 189.1,592.7 188.3,627.1 187,661.4 185.2,695.7 182.9,730"/>
<path d="M192,366.6 194.3,399.6 196.1,432.7 197.5,465.7 198.4,498.8 199,531.8 199,564.8 198.7,597.9 197.8,630.9 196.5,663.9 194.8,697 192.6,730"/>
<path d="M195.6,363.6 198.1,396.9 200.1,430.2 201.7,463.5 202.7,496.9 203.3,530.2 203.4,563.5 203,596.8 202.1,630.1 200.9,663.4 199.1,696.7 196.9,730"/>
<path d="M204.8,333.4 207.8,369.5 210.1,405.5 212,441.6 213.4,477.6 214.2,513.7 214.5,549.7 214.3,585.8 213.5,621.8 212.2,657.9 210.4,693.9 208,730"/>
<path d="M207.2,319.5 210.6,356.8 213.5,394.1 215.7,431.4 217.4,468.7 218.4,506.1 218.8,543.4 218.7,580.7 218,618 216.7,655.4 214.8,692.7 212.3,730"/>
<path d="M221.2,355.5 223.7,389.6 225.7,423.6 227.2,457.7 228.2,491.7 228.9,525.7 229,559.8 228.6,593.8 227.8,627.9 226.5,661.9 224.7,696 222.5,730"/>
<path d="M226.3,370.2 228.6,402.9 230.4,435.6 231.8,468.3 232.8,501 233.2,533.8 233.3,566.5 232.8,599.2 232,631.9 230.7,664.6 229,697.3 226.8,730"/>
<path d="M233.3,331 236.2,367.3 238.6,403.6 240.4,439.8 241.8,476.1 242.7,512.4 243,548.6 242.7,584.9 242,621.2 240.7,657.5 238.8,693.7 236.4,730"/>
<path d="M235.4,315.4 238.9,353.1 241.8,390.8 244.1,428.5 245.8,466.2 246.8,503.9 247.3,541.6 247.1,579.2 246.4,616.9 245.1,654.6 243.2,692.3 240.7,730"/>
<path d="M248.6,346.2 251.2,381.1 253.3,416 254.9,450.9 256.1,485.8 256.8,520.7 256.9,555.6 256.6,590.4 255.8,625.3 254.5,660.2 252.7,695.1 250.4,730"/>
<path d="M253.6,360.6 256.1,394.2 258.1,427.8 259.6,461.4 260.6,494.9 261.1,528.5 261.2,562.1 260.8,595.7 260,629.3 258.7,662.8 256.9,696.4 254.7,730"/>
<path d="M263.9,360.6 266.2,394.2 268,427.8 269.4,461.3 270.4,494.9 270.9,528.5 271,562.1 270.6,595.7 269.7,629.3 268.4,662.8 266.7,696.4 264.4,730"/>
<path d="M265.9,339.5 268.8,375 271.2,410.5 273,446 274.3,481.5 275.1,517 275.3,552.5 275,588 274.2,623.5 272.9,659 271.1,694.5 268.7,730"/>
<path d="M276.4,340.1 279.1,375.5 281.3,411 282.9,446.4 284.1,481.9 284.9,517.3 285.1,552.8 284.8,588.2 284,623.7 282.6,659.1 280.8,694.6 278.5,730"/>
<path d="M279.9,337.1 282.8,372.9 285.2,408.6 287.1,444.3 288.4,480 289.1,515.7 289.4,551.4 289.1,587.1 288.3,622.9 287,658.6 285.1,694.3 282.8,730"/>
<path d="M287.4,320.6 290.5,357.8 293,395 294.9,432.2 296.4,469.5 297.3,506.7 297.6,543.9 297.4,581.1 296.7,618.3 295.4,655.6 293.5,692.8 291,730"/>
<path d="M292.5,336.5 295.4,372.2 297.8,408 299.7,443.8 301,479.6 301.7,515.3 302,551.1 301.7,586.9 300.9,622.7 299.5,658.4 297.7,694.2 295.3,730"/>
<path d="M300.7,329.1 303.6,365.5 305.9,402 307.7,438.4 309,474.9 309.8,511.3 310.1,547.8 309.9,584.2 309.1,620.7 307.8,657.1 305.9,693.6 303.5,730"/>
<path d="M305.4,340.3 308.2,375.7 310.5,411.2 312.3,446.6 313.5,482 314.2,517.4 314.4,552.9 314.1,588.3 313.3,623.7 312,659.1 310.1,694.6 307.8,730"/></g>
<g id="td2"><path d="M297.4,192 299,203.3 300.5,214.7 302,226 303.5,237.4 304.8,248.7 306.2,260.1 307.4,271.4 308.6,282.8 309.8,294.1 310.9,305.5 312,316.8 313,328.2 313.9,339.5" stroke-dashoffset="3.4"/>
<path d="M300.6,192 302.1,202.2 303.5,212.3 304.8,222.5 306.2,232.7 307.4,242.8 308.7,253 309.9,263.2 311.1,273.3 312.2,283.5 313.3,293.6 314.3,303.8 315.3,314 316.3,324.1" stroke-dashoffset="3.7"/>
<path d="M308.8,192 310,200.6 311.2,209.3 312.4,217.9 313.5,226.6 314.6,235.2 315.6,243.8 316.7,252.5 317.7,261.1 318.6,269.8 319.6,278.4 320.5,287 321.3,295.7 322.2,304.3" stroke-dashoffset="3.4"/>
<path d="M312.1,192 313.9,204.7 315.6,217.4 317.2,230.1 318.8,242.8 320.4,255.5 321.9,268.2 323.3,280.9 324.6,293.6 325.9,306.2 327.1,318.9 328.3,331.6 329.4,344.3 330.4,357" stroke-dashoffset="2.3"/>
<path d="M320.8,192 322.3,203 323.8,214 325.2,225 326.6,236 327.9,247 329.2,257.9 330.4,268.9 331.6,279.9 332.7,290.9 333.8,301.9 334.8,312.9 335.8,323.9 336.7,334.9" stroke-dashoffset="1.8"/>
<path d="M324,192 325.4,201.8 326.7,211.6 328,221.4 329.3,231.1 330.5,240.9 331.7,250.7 332.9,260.5 334,270.3 335.1,280.1 336.1,289.9 337.1,299.6 338.1,309.4 339,319.2" stroke-dashoffset="3.0"/>
<path d="M332.2,192 333.5,201.6 334.8,211.3 336.1,220.9 337.3,230.5 338.5,240.2 339.6,249.8 340.7,259.4 341.8,269.1 342.8,278.7 343.8,288.3 344.8,297.9 345.7,307.6 346.6,317.2" stroke-dashoffset="3.9"/>
<path d="M335.4,192 336.6,200.5 337.8,208.9 338.9,217.4 340,225.8 341.1,234.3 342.1,242.7 343.1,251.2 344.1,259.6 345.1,268.1 346.1,276.5 347,285 347.9,293.4 348.7,301.9" stroke-dashoffset="3.7"/>
<path d="M343.4,192 344.7,201.6 346,211.1 347.3,220.7 348.5,230.3 349.7,239.9 350.8,249.4 351.9,259 352.9,268.6 354,278.2 354.9,287.7 355.9,297.3 356.8,306.9 357.7,316.5" stroke-dashoffset="4.0"/>
<path d="M346.7,192 347.9,201.3 349.2,210.5 350.4,219.8 351.6,229.1 352.8,238.3 353.9,247.6 355,256.9 356.1,266.1 357.1,275.4 358.1,284.7 359.1,293.9 360,303.2 360.9,312.5" stroke-dashoffset="2.2"/>
<path d="M353.6,192 355.2,203.2 356.6,214.3 358.1,225.5 359.5,236.6 360.8,247.8 362.1,258.9 363.3,270.1 364.4,281.2 365.6,292.4 366.6,303.5 367.7,314.7 368.6,325.9 369.5,337" stroke-dashoffset="1.6"/>
<path d="M356.9,192 358.2,201.6 359.5,211.2 360.7,220.8 362,230.3 363.2,239.9 364.3,249.5 365.4,259.1 366.5,268.7 367.6,278.3 368.6,287.8 369.6,297.4 370.5,307 371.4,316.6" stroke-dashoffset="2.2"/>
<path d="M364.3,192 365.9,203.7 367.5,215.5 368.9,227.2 370.4,239 371.8,250.7 373.1,262.4 374.3,274.2 375.5,285.9 376.7,297.6 377.8,309.4 378.8,321.1 379.8,332.9 380.7,344.6" stroke-dashoffset="1.7"/>
<path d="M367.5,192 369,202.9 370.5,213.7 371.9,224.6 373.3,235.4 374.6,246.3 375.8,257.1 377.1,268 378.3,278.8 379.4,289.7 380.5,300.5 381.6,311.4 382.6,322.2 383.5,333.1" stroke-dashoffset="2.3"/>
<path d="M374.8,192 376.1,200.9 377.2,209.9 378.4,218.8 379.5,227.7 380.6,236.6 381.7,245.6 382.7,254.5 383.7,263.4 384.6,272.4 385.6,281.3 386.5,290.2 387.3,299.1 388.1,308.1" stroke-dashoffset="2.6"/>
<path d="M378.1,192 379.3,200.8 380.5,209.6 381.6,218.3 382.7,227.1 383.8,235.9 384.9,244.7 385.9,253.5 386.9,262.2 387.9,271 388.9,279.8 389.8,288.6 390.7,297.4 391.5,306.2" stroke-dashoffset="4.2"/>
<path d="M385.2,192 386.4,200.7 387.6,209.3 388.7,218 389.8,226.6 390.8,235.3 391.9,243.9 392.9,252.6 393.8,261.3 394.8,269.9 395.7,278.6 396.5,287.2 397.4,295.9 398.2,304.6" stroke-dashoffset="4.0"/>
<path d="M388.5,192 389.9,202.6 391.4,213.3 392.7,223.9 394,234.5 395.3,245.2 396.6,255.8 397.8,266.4 398.9,277.1 400.1,287.7 401.1,298.3 402.2,309 403.1,319.6 404.1,330.2" stroke-dashoffset="1.7"/>
<path d="M395.5,192 396.7,200.3 397.8,208.7 398.8,217 399.9,225.3 400.9,233.7 401.9,242 402.9,250.3 403.8,258.7 404.7,267 405.6,275.3 406.4,283.7 407.2,292 408,300.3" stroke-dashoffset="4.0"/>
<path d="M398.8,192 400,200.9 401.2,209.9 402.3,218.8 403.5,227.8 404.6,236.7 405.7,245.7 406.7,254.6 407.7,263.6 408.7,272.5 409.6,281.4 410.6,290.4 411.5,299.3 412.3,308.3" stroke-dashoffset="2.1"/>
<path d="M405.7,192 407,201.5 408.2,211 409.4,220.5 410.6,230 411.7,239.5 412.8,249 413.9,258.5 414.9,268 415.9,277.4 416.8,286.9 417.8,296.4 418.6,305.9 419.5,315.4" stroke-dashoffset="4.6"/>
<path d="M408.9,192 410.1,200.4 411.2,208.7 412.3,217.1 413.3,225.4 414.4,233.8 415.4,242.1 416.3,250.5 417.3,258.9 418.2,267.2 419.1,275.6 420,283.9 420.9,292.3 421.7,300.7" stroke-dashoffset="4.7"/>
<path d="M415.7,192 417.3,203.4 418.7,214.8 420.2,226.2 421.5,237.6 422.8,248.9 424.1,260.3 425.3,271.7 426.4,283.1 427.5,294.5 428.6,305.9 429.6,317.3 430.5,328.7 431.4,340" stroke-dashoffset="2.2"/>
<path d="M419,192 420.6,203.7 422.1,215.4 423.5,227.1 425,238.8 426.3,250.4 427.7,262.1 428.9,273.8 430.2,285.5 431.3,297.2 432.5,308.9 433.5,320.6 434.5,332.3 435.5,344" stroke-dashoffset="1.1"/>
<path d="M425.6,192 427.1,202.7 428.5,213.4 429.8,224.2 431.1,234.9 432.3,245.6 433.5,256.3 434.7,267 435.8,277.8 436.8,288.5 437.8,299.2 438.8,309.9 439.7,320.6 440.6,331.4" stroke-dashoffset="3.3"/>
<path d="M428.9,192 430.2,201.7 431.5,211.5 432.7,221.2 433.9,231 435.1,240.7 436.2,250.5 437.3,260.2 438.4,270 439.4,279.7 440.4,289.4 441.4,299.2 442.3,308.9 443.2,318.7" stroke-dashoffset="1.7"/>
<path d="M435.4,192 436.5,200.4 437.6,208.8 438.7,217.2 439.7,225.6 440.7,234 441.7,242.4 442.7,250.8 443.6,259.2 444.5,267.6 445.3,276 446.2,284.4 447,292.8 447.8,301.2" stroke-dashoffset="2.9"/>
<path d="M438.7,192 439.8,200.7 441,209.3 442.1,218 443.1,226.6 444.2,235.3 445.2,244 446.2,252.6 447.2,261.3 448.1,269.9 449,278.6 449.9,287.2 450.8,295.9 451.6,304.6" stroke-dashoffset="0.2"/>
<path d="M445.1,192 446.6,203.2 448,214.5 449.4,225.7 450.7,236.9 452,248.1 453.2,259.4 454.4,270.6 455.5,281.8 456.6,293.1 457.6,304.3 458.6,315.5 459.5,326.8 460.4,338" stroke-dashoffset="4.6"/>
<path d="M448.3,192 449.8,203.2 451.2,214.4 452.6,225.6 454,236.8 455.3,248 456.6,259.2 457.8,270.4 459,281.6 460.1,292.8 461.2,304 462.2,315.2 463.2,326.4 464.1,337.6" stroke-dashoffset="2.9"/>
<path d="M454.6,192 455.6,199.3 456.5,206.6 457.4,213.9 458.3,221.2 459.2,228.5 460.1,235.9 460.9,243.2 461.7,250.5 462.5,257.8 463.3,265.1 464.1,272.4 464.8,279.7 465.5,287" stroke-dashoffset="0.9"/>
<path d="M457.8,192 459,200.5 460.1,209.1 461.2,217.6 462.2,226.2 463.3,234.7 464.3,243.3 465.2,251.8 466.2,260.4 467.1,268.9 468,277.4 468.9,286 469.7,294.5 470.5,303.1" stroke-dashoffset="2.6"/>
<path d="M464,192 465.2,201 466.3,209.9 467.4,218.9 468.5,227.8 469.6,236.8 470.6,245.7 471.6,254.7 472.5,263.6 473.4,272.6 474.3,281.5 475.2,290.5 476,299.4 476.8,308.4" stroke-dashoffset="3.1"/>
<path d="M467.2,192 468.4,200.6 469.5,209.3 470.6,217.9 471.7,226.6 472.7,235.2 473.7,243.8 474.7,252.5 475.6,261.1 476.6,269.8 477.5,278.4 478.3,287 479.2,295.7 480,304.3" stroke-dashoffset="4.3"/>
<path d="M473.3,192 474.5,201.1 475.6,210.3 476.8,219.4 477.9,228.6 478.9,237.7 480,246.9 481,256 481.9,265.1 482.8,274.3 483.7,283.4 484.6,292.6 485.4,301.7 486.2,310.9" stroke-dashoffset="1.8"/>
<path d="M476.5,192 477.6,199.9 478.6,207.9 479.6,215.8 480.6,223.7 481.5,231.7 482.5,239.6 483.4,247.6 484.3,255.5 485.1,263.4 486,271.4 486.8,279.3 487.6,287.2 488.4,295.2" stroke-dashoffset="4.1"/>
<path d="M482.4,192 483.4,199.7 484.4,207.5 485.4,215.2 486.3,223 487.2,230.7 488.1,238.5 489,246.2 489.8,253.9 490.7,261.7 491.5,269.4 492.2,277.2 493,284.9 493.7,292.7" stroke-dashoffset="4.6" stroke-opacity="0.8"/>
<path d="M485.7,192 487,202.5 488.4,213 489.7,223.4 490.9,233.9 492.1,244.4 493.3,254.9 494.4,265.3 495.5,275.8 496.6,286.3 497.6,296.8 498.6,307.3 499.5,317.7 500.4,328.2" stroke-dashoffset="0.0" stroke-opacity="0.8"/>
<path d="M491.4,192 492.7,201.6 493.9,211.3 495.1,220.9 496.2,230.5 497.3,240.2 498.4,249.8 499.4,259.4 500.4,269.1 501.4,278.7 502.3,288.3 503.2,298 504,307.6 504.8,317.2" stroke-dashoffset="0.2" stroke-opacity="0.5"/>
<path d="M494.7,192 495.7,200.1 496.8,208.2 497.8,216.3 498.8,224.4 499.7,232.5 500.7,240.6 501.6,248.7 502.5,256.8 503.4,264.9 504.2,272.9 505,281 505.8,289.1 506.6,297.2" stroke-dashoffset="2.6" stroke-opacity="0.5"/></g>
<g id="ts2"><path d="M313.9,339.5 316.6,375 318.7,410.5 320.3,446 321.5,481.5 322.2,517 322.4,552.5 322.1,588 321.3,623.5 319.9,659 318.1,694.5 315.7,730"/>
<path d="M316.3,324.1 319.4,361 322,397.9 324.1,434.8 325.5,471.7 326.4,508.6 326.7,545.5 326.5,582.4 325.7,619.3 324.4,656.2 322.5,693.1 320,730"/>
<path d="M322.2,304.3 325.5,343 328.3,381.7 330.5,420.4 332.1,459.1 333.2,497.8 333.6,536.5 333.5,575.2 332.8,613.9 331.5,652.6 329.5,691.3 327,730"/>
<path d="M330.4,357 332.9,390.9 334.9,424.8 336.4,458.7 337.4,492.6 337.9,526.6 337.9,560.5 337.5,594.4 336.7,628.3 335.3,662.2 333.6,696.1 331.3,730"/>
<path d="M336.7,334.9 339.4,370.8 341.6,406.7 343.3,442.6 344.5,478.6 345.2,514.5 345.4,550.4 345.1,586.3 344.3,622.2 343,658.2 341.1,694.1 338.8,730"/>
<path d="M339,319.2 342.2,356.6 344.9,393.9 347,431.2 348.5,468.6 349.4,505.9 349.7,543.3 349.5,580.6 348.7,618 347.4,655.3 345.5,692.7 343.1,730"/>
<path d="M346.6,317.2 349.6,354.7 352.1,392.3 354.1,429.8 355.5,467.3 356.4,504.8 356.7,542.4 356.5,579.9 355.7,617.4 354.4,654.9 352.5,692.5 350,730"/>
<path d="M348.7,301.9 352.3,340.8 355.3,379.7 357.7,418.6 359.4,457.6 360.5,496.5 361,535.4 360.9,574.3 360.1,613.2 358.8,652.2 356.9,691.1 354.3,730"/>
<path d="M357.7,316.5 360.7,354 363.2,391.6 365.2,429.2 366.6,466.8 367.5,504.4 367.8,542 367.6,579.6 366.8,617.2 365.5,654.8 363.6,692.4 361.1,730"/>
<path d="M360.9,312.5 364.2,350.4 367,388.4 369.2,426.3 370.8,464.3 371.7,502.2 372.1,540.2 371.9,578.2 371.1,616.1 369.8,654.1 367.9,692 365.4,730"/>
<path d="M369.5,337 372.1,372.7 374.3,408.5 375.9,444.2 377,479.9 377.7,515.6 377.9,551.4 377.5,587.1 376.7,622.8 375.4,658.5 373.5,694.3 371.2,730"/>
<path d="M371.4,316.6 374.7,354.2 377.3,391.8 379.4,429.3 380.9,466.9 381.8,504.5 382.2,542.1 382,579.7 381.2,617.3 379.8,654.8 377.9,692.4 375.5,730"/>
<path d="M380.7,344.6 383.2,379.6 385.1,414.7 386.6,449.7 387.7,484.7 388.3,519.8 388.4,554.8 388,589.9 387.2,624.9 385.8,659.9 384,695 381.7,730"/>
<path d="M383.5,333.1 386.4,369.2 388.7,405.3 390.5,441.3 391.8,477.4 392.5,513.5 392.7,549.6 392.4,585.7 391.6,621.8 390.2,657.8 388.4,693.9 386,730"/>
<path d="M388.1,308.1 391.3,346.4 393.9,384.8 396,423.1 397.5,461.5 398.4,499.9 398.8,538.2 398.6,576.6 397.9,614.9 396.5,653.3 394.6,691.6 392.1,730"/>
<path d="M391.5,306.2 395,344.7 397.8,383.2 400,421.7 401.7,460.3 402.7,498.8 403.1,537.3 402.9,575.9 402.2,614.4 400.8,652.9 398.9,691.5 396.4,730"/>
<path d="M398.2,304.6 401.4,343.2 404.1,381.9 406.2,420.6 407.7,459.3 408.7,497.9 409.1,536.6 408.9,575.3 408.1,614 406.8,652.6 404.9,691.3 402.3,730"/>
<path d="M404.1,330.2 407,366.6 409.3,402.9 411.2,439.3 412.5,475.6 413.2,511.9 413.4,548.3 413.1,584.6 412.2,621 410.9,657.3 409,693.7 406.6,730"/>
<path d="M408,300.3 411.3,339.4 414.1,378.5 416.2,417.5 417.8,456.6 418.8,495.6 419.2,534.7 419.1,573.8 418.3,612.8 417,651.9 415,690.9 412.5,730"/>
<path d="M412.3,308.3 415.7,346.6 418.4,384.9 420.6,423.3 422.2,461.6 423.2,500 423.5,538.3 423.3,576.6 422.6,615 421.2,653.3 419.3,691.7 416.8,730"/>
<path d="M419.5,315.4 422.4,353.1 424.9,390.8 426.8,428.5 428.1,466.2 429,503.9 429.3,541.6 429,579.2 428.2,616.9 426.9,654.6 425,692.3 422.5,730"/>
<path d="M421.7,300.7 425.2,339.7 428.1,378.7 430.4,417.7 432.1,456.8 433.1,495.8 433.6,534.8 433.4,573.9 432.6,612.9 431.3,651.9 429.3,691 426.8,730"/>
<path d="M431.4,340 433.9,375.5 435.9,410.9 437.4,446.4 438.5,481.8 439.1,517.3 439.2,552.7 438.8,588.2 437.9,623.6 436.6,659.1 434.7,694.5 432.4,730"/>
<path d="M435.5,344 438.1,379.1 440.1,414.2 441.7,449.2 442.8,484.3 443.4,519.4 443.5,554.5 443.1,589.6 442.2,624.7 440.8,659.8 439,694.9 436.7,730"/>
<path d="M440.6,331.4 443.2,367.6 445.3,403.8 447,440.1 448.1,476.3 448.8,512.6 449,548.8 448.6,585 447.8,621.3 446.4,657.5 444.5,693.8 442.2,730"/>
<path d="M443.2,318.7 446.3,356.1 448.8,393.5 450.8,430.9 452.2,468.3 453,505.6 453.3,543 453,580.4 452.2,617.8 450.8,655.2 448.9,692.6 446.5,730"/>
<path d="M447.8,301.2 451,340.2 453.6,379.2 455.7,418.2 457.2,457.1 458.2,496.1 458.6,535.1 458.4,574.1 457.6,613.1 456.3,652 454.3,691 451.8,730"/>
<path d="M451.6,304.6 455,343.2 457.8,381.9 460,420.6 461.6,459.3 462.5,497.9 462.9,536.6 462.7,575.3 461.9,614 460.6,652.6 458.6,691.3 456.1,730"/>
<path d="M460.4,338 462.9,373.6 464.9,409.3 466.4,444.9 467.4,480.5 468,516.2 468.1,551.8 467.7,587.4 466.9,623.1 465.5,658.7 463.7,694.4 461.3,730"/>
<path d="M464.1,337.6 466.8,373.3 468.9,408.9 470.6,444.6 471.7,480.3 472.3,516 472.4,551.6 472,587.3 471.2,623 469.8,658.7 468,694.3 465.6,730"/>
<path d="M465.5,287 469,327.3 471.9,367.6 474.2,407.8 475.9,448.1 477,488.4 477.5,528.6 477.4,568.9 476.7,609.2 475.3,649.5 473.3,689.7 470.7,730"/>
<path d="M470.5,303.1 473.9,341.9 476.7,380.7 478.9,419.5 480.5,458.3 481.5,497.1 481.8,535.9 481.6,574.8 480.9,613.6 479.5,652.4 477.5,691.2 475,730"/>
<path d="M476.8,308.4 479.8,346.7 482.3,385 484.2,423.4 485.6,461.7 486.5,500 486.8,538.3 486.6,576.7 485.8,615 484.4,653.3 482.5,691.7 480,730"/>
<path d="M480,304.3 483.3,343 486.1,381.7 488.2,420.4 489.8,459.1 490.8,497.8 491.1,536.5 490.9,575.2 490.1,613.9 488.7,652.6 486.8,691.3 484.3,730"/>
<path d="M486.2,310.9 488.5,339.7 490.5,368.5 492.2,397.3 493.5,426.2 494.6,455 495.4,483.8 495.8,512.7 496,541.5 495.8,570.3 495.3,599.2 494.5,628"/>
<path d="M494.5,628 494.1,639 493.7,650" stroke-opacity="0.75"/>
<path d="M493.7,650 493.2,661 492.7,672" stroke-opacity="0.50"/>
<path d="M492.7,672 492.1,683 491.5,694" stroke-opacity="0.25"/>
<path d="M488.4,295.2 491.1,325.4 493.5,355.7 495.5,385.9 497.2,416.2 498.5,446.5 499.5,476.7 500.1,507 500.3,537.2 500.1,567.5 499.7,597.7 498.8,628"/>
<path d="M498.8,628 498.4,639 498,650" stroke-opacity="0.75"/>
<path d="M498,650 497.5,661 497,672" stroke-opacity="0.50"/>
<path d="M497,672 496.4,683 495.8,694" stroke-opacity="0.25"/>
<path d="M493.7,292.7 495.9,317.7 497.8,342.7 499.5,367.8 501,392.8 502.2,417.8 503.2,442.8 504,467.9 504.6,492.9 504.9,517.9 505,543 504.9,568" stroke-opacity="0.8"/>
<path d="M504.9,568 504.7,579 504.5,590" stroke-opacity="0.60"/>
<path d="M504.5,590 504.3,601 504,612" stroke-opacity="0.40"/>
<path d="M504,612 503.7,623 503.3,634" stroke-opacity="0.20"/>
<path d="M500.4,328.2 502.2,350 503.7,371.8 505.1,393.6 506.2,415.4 507.2,437.2 508,459 508.6,480.8 509,502.6 509.3,524.4 509.3,546.2 509.2,568" stroke-opacity="0.8"/>
<path d="M509.2,568 509,579 508.8,590" stroke-opacity="0.60"/>
<path d="M508.8,590 508.6,601 508.3,612" stroke-opacity="0.40"/>
<path d="M508.3,612 508,623 507.6,634" stroke-opacity="0.20"/>
<path d="M504.8,317.2 505.9,331.4 507,345.6 508,359.7 508.9,373.9 509.7,388 510.4,402.2 511.1,416.4 511.7,430.5 512.2,444.7 512.7,458.8 513.1,473" stroke-opacity="0.5"/>
<path d="M513.1,473 513.3,484 513.5,495" stroke-opacity="0.38"/>
<path d="M513.5,495 513.7,506 513.8,517" stroke-opacity="0.25"/>
<path d="M513.8,517 513.9,528 513.9,539" stroke-opacity="0.12"/>
<path d="M506.6,297.2 508.1,313.2 509.5,329.2 510.7,345.2 511.9,361.1 513,377.1 514,393.1 514.8,409.1 515.6,425.1 516.3,441 516.9,457 517.4,473" stroke-opacity="0.5"/>
<path d="M517.4,473 517.6,484 517.8,495" stroke-opacity="0.38"/>
<path d="M517.8,495 518,506 518.1,517" stroke-opacity="0.25"/>
<path d="M518.1,517 518.2,528 518.2,539" stroke-opacity="0.12"/></g>
<pattern id="hp" patternUnits="userSpaceOnUse" width="40" height="4" patternTransform="rotate(14)"><rect x="0" y="0" width="40" height="4" fill="#fff"/><rect x="0" y="0" width="40" height="1.15" fill="#303030"/></pattern>
<linearGradient id="mt" gradientUnits="userSpaceOnUse" x1="262" y1="270" x2="270" y2="345"><stop offset="0" stop-color="#fff" stop-opacity="0"/><stop offset="1" stop-color="#fff" stop-opacity="1"/></linearGradient>
<linearGradient id="mb" gradientUnits="userSpaceOnUse" x1="270" y1="665" x2="283" y2="735"><stop offset="0" stop-color="#fff" stop-opacity="1"/><stop offset="1" stop-color="#fff" stop-opacity="0"/></linearGradient>
<mask id="hm" maskUnits="userSpaceOnUse" x="-10" y="189.0" width="560" height="544.0"><rect x="-10" y="189.0" width="560" height="544.0" fill="url(#hp)"/><rect x="-10" y="189.0" width="560" height="311.0" fill="url(#mt)"/><rect x="-10" y="500" width="560" height="233.0" fill="url(#mb)"/></mask>
<g id="tr">
<g fill="url(#gy)"><path d="M-29.1,192 -26.4,209.4 -23.8,226.7 -21.3,244.1 -18.9,261.4 -16.7,278.8 -14.6,296.1 -12.7,313.5 -10.8,330.8 -9.2,348.2 -7.6,365.5 -6.2,382.9 -4.9,400.3 -3.7,417.6 -2.7,435 -1.8,452.3 -1,469.7 -0.4,487 0.1,504.4 0.5,521.7 0.7,539.1 0.8,556.5 0.8,573.8 0.7,591.2 0.4,608.5 -0.1,625.9 -0.6,643.2 -1.3,660.6 -2.1,677.9 -3.1,695.3 -4.2,712.6 -5.4,730 15.1,730 16.3,712.6 17.4,695.3 18.4,677.9 19.2,660.6 19.9,643.2 20.4,625.9 20.9,608.5 21.2,591.2 21.3,573.8 21.3,556.5 21.2,539.1 21,521.7 20.6,504.4 20.1,487 19.5,469.7 18.7,452.3 17.8,435 16.8,417.6 15.6,400.3 14.3,382.9 12.9,365.5 11.3,348.2 9.7,330.8 7.8,313.5 5.9,296.1 3.8,278.8 1.6,261.4 -0.8,244.1 -3.3,226.7 -5.9,209.4 -8.6,192Z" fill-opacity="0.088"/>
<path d="M-8.9,192 -6.2,209.4 -3.6,226.7 -1.1,244.1 1.2,261.4 3.4,278.8 5.5,296.1 7.4,313.5 9.2,330.8 10.9,348.2 12.5,365.5 13.9,382.9 15.2,400.3 16.3,417.6 17.3,435 18.2,452.3 19,469.7 19.6,487 20.1,504.4 20.5,521.7 20.7,539.1 20.8,556.5 20.8,573.8 20.6,591.2 20.3,608.5 19.9,625.9 19.3,643.2 18.6,660.6 17.8,677.9 16.8,695.3 15.8,712.6 14.5,730 34.5,730 35.8,712.6 36.8,695.3 37.8,677.9 38.6,660.6 39.3,643.2 39.9,625.9 40.3,608.5 40.6,591.2 40.8,573.8 40.8,556.5 40.7,539.1 40.5,521.7 40.1,504.4 39.6,487 39,469.7 38.2,452.3 37.3,435 36.3,417.6 35.2,400.3 33.9,382.9 32.5,365.5 30.9,348.2 29.2,330.8 27.4,313.5 25.5,296.1 23.4,278.8 21.2,261.4 18.9,244.1 16.4,226.7 13.8,209.4 11.1,192Z" fill-opacity="0.106"/>
<path d="M10.8,192 13.5,209.4 16.1,226.7 18.6,244.1 20.9,261.4 23.1,278.8 25.1,296.1 27,313.5 28.8,330.8 30.5,348.2 32,365.5 33.4,382.9 34.7,400.3 35.8,417.6 36.8,435 37.7,452.3 38.5,469.7 39.1,487 39.6,504.4 39.9,521.7 40.1,539.1 40.2,556.5 40.2,573.8 40,591.2 39.7,608.5 39.3,625.9 38.7,643.2 38,660.6 37.2,677.9 36.3,695.3 35.2,712.6 34,730 53.7,730 54.9,712.6 56,695.3 56.9,677.9 57.7,660.6 58.4,643.2 59,625.9 59.4,608.5 59.7,591.2 59.9,573.8 59.9,556.5 59.8,539.1 59.6,521.7 59.3,504.4 58.8,487 58.2,469.7 57.4,452.3 56.5,435 55.5,417.6 54.4,400.3 53.1,382.9 51.7,365.5 50.2,348.2 48.5,330.8 46.7,313.5 44.8,296.1 42.8,278.8 40.6,261.4 38.3,244.1 35.8,226.7 33.2,209.4 30.5,192Z" fill-opacity="0.123"/>
<path d="M30.3,192 33,209.4 35.5,226.7 37.9,244.1 40.2,261.4 42.4,278.8 44.4,296.1 46.4,313.5 48.1,330.8 49.8,348.2 51.3,365.5 52.7,382.9 53.9,400.3 55.1,417.6 56.1,435 56.9,452.3 57.7,469.7 58.3,487 58.7,504.4 59.1,521.7 59.3,539.1 59.4,556.5 59.3,573.8 59.2,591.2 58.9,608.5 58.4,625.9 57.9,643.2 57.2,660.6 56.3,677.9 55.4,695.3 54.3,712.6 53.1,730 72.5,730 73.8,712.6 74.8,695.3 75.8,677.9 76.6,660.6 77.3,643.2 77.9,625.9 78.3,608.5 78.6,591.2 78.8,573.8 78.8,556.5 78.8,539.1 78.5,521.7 78.2,504.4 77.7,487 77.1,469.7 76.4,452.3 75.5,435 74.5,417.6 73.4,400.3 72.1,382.9 70.7,365.5 69.2,348.2 67.6,330.8 65.8,313.5 63.9,296.1 61.9,278.8 59.7,261.4 57.4,244.1 55,226.7 52.4,209.4 49.7,192Z" fill-opacity="0.140"/>
<path d="M49.4,192 52.1,209.4 54.6,226.7 57.1,244.1 59.3,261.4 61.5,278.8 63.5,296.1 65.4,313.5 67.2,330.8 68.8,348.2 70.3,365.5 71.7,382.9 72.9,400.3 74,417.6 75,435 75.9,452.3 76.6,469.7 77.2,487 77.7,504.4 78,521.7 78.2,539.1 78.3,556.5 78.2,573.8 78.1,591.2 77.8,608.5 77.3,625.9 76.7,643.2 76,660.6 75.2,677.9 74.3,695.3 73.2,712.6 72,730 90.7,730 91.9,712.6 93,695.3 94,677.9 94.8,660.6 95.5,643.2 96.1,625.9 96.5,608.5 96.8,591.2 97,573.8 97,556.5 97,539.1 96.8,521.7 96.4,504.4 96,487 95.4,469.7 94.6,452.3 93.8,435 92.8,417.6 91.7,400.3 90.4,382.9 89.1,365.5 87.6,348.2 85.9,330.8 84.2,313.5 82.3,296.1 80.2,278.8 78.1,261.4 75.8,244.1 73.4,226.7 70.9,209.4 68.2,192Z" fill-opacity="0.157"/>
<path d="M67.9,192 70.6,209.4 73.1,226.7 75.5,244.1 77.7,261.4 79.9,278.8 81.9,296.1 83.8,313.5 85.5,330.8 87.1,348.2 88.6,365.5 90,382.9 91.2,400.3 92.3,417.6 93.3,435 94.1,452.3 94.8,469.7 95.4,487 95.9,504.4 96.2,521.7 96.4,539.1 96.5,556.5 96.4,573.8 96.3,591.2 95.9,608.5 95.5,625.9 94.9,643.2 94.2,660.6 93.4,677.9 92.4,695.3 91.4,712.6 90.1,730 108.1,730 109.4,712.6 110.4,695.3 111.4,677.9 112.2,660.6 112.9,643.2 113.5,625.9 113.9,608.5 114.3,591.2 114.4,573.8 114.5,556.5 114.4,539.1 114.2,521.7 113.9,504.4 113.4,487 112.8,469.7 112.1,452.3 111.3,435 110.3,417.6 109.2,400.3 108,382.9 106.6,365.5 105.1,348.2 103.5,330.8 101.8,313.5 99.9,296.1 97.9,278.8 95.7,261.4 93.5,244.1 91.1,226.7 88.6,209.4 85.9,192Z" fill-opacity="0.175"/>
<path d="M85.6,192 88.2,209.4 90.7,226.7 93.1,244.1 95.4,261.4 97.5,278.8 99.5,296.1 101.3,313.5 103.1,330.8 104.7,348.2 106.2,365.5 107.5,382.9 108.7,400.3 109.8,417.6 110.8,435 111.6,452.3 112.3,469.7 112.9,487 113.4,504.4 113.7,521.7 113.9,539.1 114,556.5 113.9,573.8 113.7,591.2 113.4,608.5 112.9,625.9 112.4,643.2 111.7,660.6 110.8,677.9 109.9,695.3 108.8,712.6 107.6,730 124.6,730 125.8,712.6 126.9,695.3 127.8,677.9 128.7,660.6 129.4,643.2 129.9,625.9 130.4,608.5 130.7,591.2 130.9,573.8 131,556.5 130.9,539.1 130.7,521.7 130.4,504.4 129.9,487 129.3,469.7 128.6,452.3 127.8,435 126.8,417.6 125.7,400.3 124.5,382.9 123.2,365.5 121.7,348.2 120.1,330.8 118.3,313.5 116.5,296.1 114.5,278.8 112.4,261.4 110.1,244.1 107.7,226.7 105.2,209.4 102.6,192Z" fill-opacity="0.197"/>
<path d="M102.3,192 104.9,209.4 107.4,226.7 109.8,244.1 112,261.4 114.1,278.8 116.1,296.1 117.9,313.5 119.7,330.8 121.2,348.2 122.7,365.5 124.1,382.9 125.3,400.3 126.3,417.6 127.3,435 128.1,452.3 128.8,469.7 129.4,487 129.9,504.4 130.2,521.7 130.4,539.1 130.4,556.5 130.4,573.8 130.2,591.2 129.8,608.5 129.4,625.9 128.8,643.2 128.1,660.6 127.3,677.9 126.3,695.3 125.2,712.6 124,730 141,730 142.2,712.6 143.3,695.3 144.3,677.9 145.1,660.6 145.8,643.2 146.4,625.9 146.8,608.5 147.2,591.2 147.4,573.8 147.4,556.5 147.4,539.1 147.2,521.7 146.9,504.4 146.4,487 145.8,469.7 145.1,452.3 144.3,435 143.3,417.6 142.3,400.3 141.1,382.9 139.7,365.5 138.2,348.2 136.7,330.8 134.9,313.5 133.1,296.1 131.1,278.8 129,261.4 126.8,244.1 124.4,226.7 121.9,209.4 119.3,192Z" fill-opacity="0.219"/>
<path d="M119,192 121.6,209.4 124.1,226.7 126.4,244.1 128.6,261.4 130.7,278.8 132.7,296.1 134.5,313.5 136.2,330.8 137.8,348.2 139.3,365.5 140.6,382.9 141.8,400.3 142.9,417.6 143.8,435 144.6,452.3 145.3,469.7 145.9,487 146.3,504.4 146.6,521.7 146.8,539.1 146.9,556.5 146.8,573.8 146.6,591.2 146.3,608.5 145.8,625.9 145.3,643.2 144.5,660.6 143.7,677.9 142.8,695.3 141.7,712.6 140.4,730 157.5,730 158.8,712.6 159.9,695.3 160.8,677.9 161.6,660.6 162.4,643.2 162.9,625.9 163.4,608.5 163.7,591.2 163.9,573.8 164,556.5 163.9,539.1 163.7,521.7 163.4,504.4 163,487 162.4,469.7 161.7,452.3 160.9,435 160,417.6 158.9,400.3 157.7,382.9 156.4,365.5 154.9,348.2 153.3,330.8 151.6,313.5 149.8,296.1 147.8,278.8 145.7,261.4 143.5,244.1 141.2,226.7 138.7,209.4 136.1,192Z" fill-opacity="0.241"/>
<path d="M135.8,192 138.4,209.4 140.8,226.7 143.2,244.1 145.4,261.4 147.4,278.8 149.4,296.1 151.2,313.5 152.9,330.8 154.5,348.2 155.9,365.5 157.2,382.9 158.4,400.3 159.5,417.6 160.4,435 161.2,452.3 161.9,469.7 162.5,487 162.9,504.4 163.2,521.7 163.4,539.1 163.4,556.5 163.4,573.8 163.2,591.2 162.8,608.5 162.4,625.9 161.8,643.2 161.1,660.6 160.3,677.9 159.3,695.3 158.2,712.6 157,730 173.3,730 174.6,712.6 175.6,695.3 176.6,677.9 177.4,660.6 178.1,643.2 178.7,625.9 179.2,608.5 179.5,591.2 179.7,573.8 179.8,556.5 179.7,539.1 179.6,521.7 179.3,504.4 178.8,487 178.3,469.7 177.6,452.3 176.8,435 175.8,417.6 174.8,400.3 173.6,382.9 172.3,365.5 170.8,348.2 169.3,330.8 167.6,313.5 165.7,296.1 163.8,278.8 161.7,261.4 159.5,244.1 157.2,226.7 154.7,209.4 152.1,192Z" fill-opacity="0.263"/>
<path d="M151.8,192 154.4,209.4 156.8,226.7 159.1,244.1 161.3,261.4 163.4,278.8 165.3,296.1 167.1,313.5 168.8,330.8 170.4,348.2 171.8,365.5 173.1,382.9 174.3,400.3 175.4,417.6 176.3,435 177.1,452.3 177.8,469.7 178.3,487 178.7,504.4 179,521.7 179.2,539.1 179.3,556.5 179.2,573.8 179,591.2 178.6,608.5 178.2,625.9 177.6,643.2 176.9,660.6 176,677.9 175.1,695.3 174,712.6 172.8,730 188,730 189.2,712.6 190.3,695.3 191.3,677.9 192.1,660.6 192.8,643.2 193.4,625.9 193.9,608.5 194.2,591.2 194.4,573.8 194.5,556.5 194.5,539.1 194.3,521.7 194,504.4 193.6,487 193,469.7 192.3,452.3 191.5,435 190.6,417.6 189.6,400.3 188.4,382.9 187.1,365.5 185.6,348.2 184.1,330.8 182.4,313.5 180.6,296.1 178.6,278.8 176.6,261.4 174.4,244.1 172.1,226.7 169.6,209.4 167.1,192Z" fill-opacity="0.284"/>
<path d="M166.7,192 169.3,209.4 171.7,226.7 174,244.1 176.2,261.4 178.2,278.8 180.2,296.1 182,313.5 183.6,330.8 185.2,348.2 186.6,365.5 187.9,382.9 189.1,400.3 190.1,417.6 191,435 191.8,452.3 192.5,469.7 193.1,487 193.5,504.4 193.8,521.7 193.9,539.1 194,556.5 193.9,573.8 193.7,591.2 193.3,608.5 192.9,625.9 192.3,643.2 191.6,660.6 190.7,677.9 189.8,695.3 188.7,712.6 187.5,730 202.7,730 203.9,712.6 205,695.3 206,677.9 206.8,660.6 207.5,643.2 208.1,625.9 208.6,608.5 208.9,591.2 209.1,573.8 209.2,556.5 209.2,539.1 209,521.7 208.7,504.4 208.3,487 207.8,469.7 207.1,452.3 206.3,435 205.4,417.6 204.3,400.3 203.2,382.9 201.9,365.5 200.4,348.2 198.9,330.8 197.2,313.5 195.4,296.1 193.5,278.8 191.4,261.4 189.3,244.1 187,226.7 184.5,209.4 182,192Z" fill-opacity="0.297"/>
<path d="M181.7,192 184.2,209.4 186.6,226.7 188.9,244.1 191.1,261.4 193.1,278.8 195,296.1 196.8,313.5 198.5,330.8 200,348.2 201.4,365.5 202.7,382.9 203.9,400.3 204.9,417.6 205.8,435 206.6,452.3 207.3,469.7 207.8,487 208.2,504.4 208.5,521.7 208.6,539.1 208.7,556.5 208.6,573.8 208.4,591.2 208,608.5 207.6,625.9 207,643.2 206.3,660.6 205.4,677.9 204.5,695.3 203.4,712.6 202.2,730 217.7,730 218.9,712.6 220,695.3 220.9,677.9 221.8,660.6 222.5,643.2 223.1,625.9 223.5,608.5 223.9,591.2 224.1,573.8 224.2,556.5 224.1,539.1 224,521.7 223.7,504.4 223.3,487 222.8,469.7 222.1,452.3 221.3,435 220.4,417.6 219.4,400.3 218.2,382.9 216.9,365.5 215.5,348.2 214,330.8 212.3,313.5 210.5,296.1 208.6,278.8 206.6,261.4 204.4,244.1 202.1,226.7 199.7,209.4 197.2,192Z" fill-opacity="0.308"/>
<path d="M196.8,192 199.4,209.4 201.8,226.7 204,244.1 206.2,261.4 208.2,278.8 210.1,296.1 211.9,313.5 213.5,330.8 215.1,348.2 216.5,365.5 217.7,382.9 218.9,400.3 219.9,417.6 220.8,435 221.6,452.3 222.2,469.7 222.8,487 223.2,504.4 223.5,521.7 223.6,539.1 223.6,556.5 223.6,573.8 223.3,591.2 223,608.5 222.5,625.9 221.9,643.2 221.2,660.6 220.4,677.9 219.4,695.3 218.3,712.6 217.1,730 231.9,730 233.1,712.6 234.2,695.3 235.1,677.9 236,660.6 236.7,643.2 237.3,625.9 237.7,608.5 238.1,591.2 238.3,573.8 238.4,556.5 238.4,539.1 238.2,521.7 237.9,504.4 237.5,487 237,469.7 236.3,452.3 235.6,435 234.7,417.6 233.6,400.3 232.5,382.9 231.2,365.5 229.8,348.2 228.3,330.8 226.6,313.5 224.9,296.1 223,278.8 220.9,261.4 218.8,244.1 216.5,226.7 214.1,209.4 211.6,192Z" fill-opacity="0.319"/>
<path d="M211.3,192 213.8,209.4 216.1,226.7 218.4,244.1 220.5,261.4 222.5,278.8 224.4,296.1 226.2,313.5 227.8,330.8 229.4,348.2 230.7,365.5 232,382.9 233.2,400.3 234.2,417.6 235.1,435 235.8,452.3 236.5,469.7 237,487 237.4,504.4 237.7,521.7 237.8,539.1 237.9,556.5 237.8,573.8 237.5,591.2 237.2,608.5 236.7,625.9 236.1,643.2 235.4,660.6 234.6,677.9 233.6,695.3 232.5,712.6 231.3,730 245.8,730 247,712.6 248.1,695.3 249.1,677.9 249.9,660.6 250.6,643.2 251.2,625.9 251.7,608.5 252,591.2 252.3,573.8 252.4,556.5 252.3,539.1 252.2,521.7 251.9,504.4 251.5,487 251,469.7 250.3,452.3 249.6,435 248.7,417.6 247.7,400.3 246.5,382.9 245.2,365.5 243.9,348.2 242.3,330.8 240.7,313.5 238.9,296.1 237,278.8 235,261.4 232.9,244.1 230.6,226.7 228.3,209.4 225.8,192Z" fill-opacity="0.329"/>
<path d="M225.4,192 227.9,209.4 230.3,226.7 232.5,244.1 234.6,261.4 236.6,278.8 238.5,296.1 240.3,313.5 241.9,330.8 243.4,348.2 244.8,365.5 246,382.9 247.2,400.3 248.2,417.6 249.1,435 249.8,452.3 250.5,469.7 251,487 251.4,504.4 251.7,521.7 251.8,539.1 251.8,556.5 251.7,573.8 251.5,591.2 251.2,608.5 250.7,625.9 250.1,643.2 249.4,660.6 248.5,677.9 247.6,695.3 246.5,712.6 245.3,730 259.8,730 261,712.6 262.1,695.3 263.1,677.9 263.9,660.6 264.6,643.2 265.2,625.9 265.7,608.5 266.1,591.2 266.3,573.8 266.4,556.5 266.4,539.1 266.2,521.7 265.9,504.4 265.6,487 265,469.7 264.4,452.3 263.6,435 262.7,417.6 261.7,400.3 260.6,382.9 259.3,365.5 258,348.2 256.5,330.8 254.8,313.5 253.1,296.1 251.2,278.8 249.2,261.4 247.1,244.1 244.8,226.7 242.5,209.4 240,192Z" fill-opacity="0.339"/>
<path d="M239.6,192 242.1,209.4 244.5,226.7 246.7,244.1 248.8,261.4 250.8,278.8 252.7,296.1 254.4,313.5 256,330.8 257.5,348.2 258.9,365.5 260.1,382.9 261.3,400.3 262.3,417.6 263.1,435 263.9,452.3 264.5,469.7 265,487 265.4,504.4 265.7,521.7 265.8,539.1 265.9,556.5 265.7,573.8 265.5,591.2 265.2,608.5 264.7,625.9 264.1,643.2 263.4,660.6 262.5,677.9 261.6,695.3 260.5,712.6 259.3,730 273.9,730 275.1,712.6 276.2,695.3 277.1,677.9 278,660.6 278.7,643.2 279.3,625.9 279.8,608.5 280.1,591.2 280.3,573.8 280.5,556.5 280.4,539.1 280.3,521.7 280,504.4 279.6,487 279.1,469.7 278.5,452.3 277.7,435 276.9,417.6 275.9,400.3 274.7,382.9 273.5,365.5 272.1,348.2 270.6,330.8 269,313.5 267.3,296.1 265.4,278.8 263.4,261.4 261.3,244.1 259.1,226.7 256.7,209.4 254.2,192Z" fill-opacity="0.349"/>
<path d="M253.9,192 256.4,209.4 258.7,226.7 260.9,244.1 263,261.4 265,278.8 266.8,296.1 268.6,313.5 270.2,330.8 271.7,348.2 273,365.5 274.3,382.9 275.4,400.3 276.4,417.6 277.2,435 278,452.3 278.6,469.7 279.1,487 279.5,504.4 279.8,521.7 279.9,539.1 279.9,556.5 279.8,573.8 279.6,591.2 279.2,608.5 278.8,625.9 278.2,643.2 277.4,660.6 276.6,677.9 275.6,695.3 274.5,712.6 273.3,730 287.2,730 288.4,712.6 289.5,695.3 290.4,677.9 291.3,660.6 292,643.2 292.6,625.9 293.1,608.5 293.4,591.2 293.7,573.8 293.8,556.5 293.8,539.1 293.6,521.7 293.4,504.4 293,487 292.5,469.7 291.8,452.3 291.1,435 290.2,417.6 289.2,400.3 288.1,382.9 286.9,365.5 285.5,348.2 284,330.8 282.4,313.5 280.7,296.1 278.8,278.8 276.9,261.4 274.8,244.1 272.5,226.7 270.2,209.4 267.7,192Z" fill-opacity="0.359"/>
<path d="M267.4,192 269.8,209.4 272.2,226.7 274.4,244.1 276.5,261.4 278.4,278.8 280.3,296.1 282,313.5 283.6,330.8 285.1,348.2 286.4,365.5 287.6,382.9 288.8,400.3 289.7,417.6 290.6,435 291.3,452.3 292,469.7 292.5,487 292.8,504.4 293.1,521.7 293.2,539.1 293.2,556.5 293.1,573.8 292.9,591.2 292.5,608.5 292.1,625.9 291.5,643.2 290.7,660.6 289.9,677.9 288.9,695.3 287.8,712.6 286.6,730 299.7,730 300.9,712.6 302,695.3 302.9,677.9 303.8,660.6 304.5,643.2 305.1,625.9 305.6,608.5 305.9,591.2 306.2,573.8 306.3,556.5 306.3,539.1 306.1,521.7 305.9,504.4 305.5,487 305,469.7 304.4,452.3 303.7,435 302.8,417.6 301.8,400.3 300.7,382.9 299.5,365.5 298.1,348.2 296.6,330.8 295,313.5 293.3,296.1 291.5,278.8 289.5,261.4 287.4,244.1 285.2,226.7 282.9,209.4 280.4,192Z" fill-opacity="0.369"/>
<path d="M280.1,192 282.5,209.4 284.8,226.7 287,244.1 289.1,261.4 291.1,278.8 292.9,296.1 294.6,313.5 296.2,330.8 297.7,348.2 299,365.5 300.2,382.9 301.3,400.3 302.3,417.6 303.2,435 303.9,452.3 304.5,469.7 305,487 305.4,504.4 305.6,521.7 305.8,539.1 305.8,556.5 305.6,573.8 305.4,591.2 305.1,608.5 304.6,625.9 304,643.2 303.2,660.6 302.4,677.9 301.4,695.3 300.3,712.6 299.1,730 312,730 313.2,712.6 314.3,695.3 315.3,677.9 316.1,660.6 316.9,643.2 317.5,625.9 318,608.5 318.3,591.2 318.5,573.8 318.7,556.5 318.7,539.1 318.5,521.7 318.3,504.4 317.9,487 317.4,469.7 316.8,452.3 316.1,435 315.2,417.6 314.2,400.3 313.1,382.9 311.9,365.5 310.6,348.2 309.1,330.8 307.5,313.5 305.8,296.1 304,278.8 302,261.4 299.9,244.1 297.7,226.7 295.4,209.4 293,192Z" fill-opacity="0.384"/>
<path d="M292.6,192 295,209.4 297.4,226.7 299.5,244.1 301.6,261.4 303.5,278.8 305.4,296.1 307.1,313.5 308.6,330.8 310.1,348.2 311.4,365.5 312.7,382.9 313.7,400.3 314.7,417.6 315.6,435 316.3,452.3 316.9,469.7 317.4,487 317.8,504.4 318,521.7 318.1,539.1 318.1,556.5 318,573.8 317.8,591.2 317.4,608.5 316.9,625.9 316.3,643.2 315.6,660.6 314.8,677.9 313.8,695.3 312.7,712.6 311.5,730 323.8,730 325,712.6 326.1,695.3 327.1,677.9 327.9,660.6 328.6,643.2 329.2,625.9 329.7,608.5 330.1,591.2 330.3,573.8 330.4,556.5 330.4,539.1 330.3,521.7 330.1,504.4 329.7,487 329.2,469.7 328.6,452.3 327.9,435 327,417.6 326,400.3 325,382.9 323.7,365.5 322.4,348.2 320.9,330.8 319.4,313.5 317.7,296.1 315.8,278.8 313.9,261.4 311.8,244.1 309.7,226.7 307.3,209.4 304.9,192Z" fill-opacity="0.401"/>
<path d="M304.5,192 307,209.4 309.3,226.7 311.4,244.1 313.5,261.4 315.4,278.8 317.2,296.1 318.9,313.5 320.5,330.8 321.9,348.2 323.3,365.5 324.5,382.9 325.6,400.3 326.5,417.6 327.4,435 328.1,452.3 328.7,469.7 329.2,487 329.5,504.4 329.8,521.7 329.9,539.1 329.9,556.5 329.8,573.8 329.5,591.2 329.2,608.5 328.7,625.9 328.1,643.2 327.4,660.6 326.5,677.9 325.6,695.3 324.5,712.6 323.3,730 335.3,730 336.5,712.6 337.6,695.3 338.6,677.9 339.4,660.6 340.1,643.2 340.7,625.9 341.2,608.5 341.6,591.2 341.8,573.8 342,556.5 342,539.1 341.8,521.7 341.6,504.4 341.2,487 340.8,469.7 340.1,452.3 339.4,435 338.6,417.6 337.6,400.3 336.5,382.9 335.3,365.5 334,348.2 332.5,330.8 331,313.5 329.3,296.1 327.5,278.8 325.5,261.4 323.5,244.1 321.3,226.7 319,209.4 316.6,192Z" fill-opacity="0.417"/>
<path d="M316.2,192 318.6,209.4 320.9,226.7 323.1,244.1 325.1,261.4 327,278.8 328.8,296.1 330.5,313.5 332.1,330.8 333.5,348.2 334.9,365.5 336.1,382.9 337.1,400.3 338.1,417.6 338.9,435 339.6,452.3 340.2,469.7 340.7,487 341.1,504.4 341.3,521.7 341.4,539.1 341.4,556.5 341.3,573.8 341.1,591.2 340.7,608.5 340.2,625.9 339.6,643.2 338.9,660.6 338,677.9 337.1,695.3 336,712.6 334.8,730 346.8,730 348,712.6 349.1,695.3 350.1,677.9 350.9,660.6 351.7,643.2 352.3,625.9 352.7,608.5 353.1,591.2 353.4,573.8 353.5,556.5 353.5,539.1 353.4,521.7 353.1,504.4 352.8,487 352.3,469.7 351.7,452.3 351,435 350.1,417.6 349.2,400.3 348.1,382.9 346.9,365.5 345.6,348.2 344.1,330.8 342.6,313.5 340.9,296.1 339.1,278.8 337.2,261.4 335.1,244.1 333,226.7 330.7,209.4 328.3,192Z" fill-opacity="0.433"/>
<path d="M327.9,192 330.3,209.4 332.6,226.7 334.7,244.1 336.8,261.4 338.7,278.8 340.5,296.1 342.1,313.5 343.7,330.8 345.1,348.2 346.4,365.5 347.6,382.9 348.7,400.3 349.7,417.6 350.5,435 351.2,452.3 351.8,469.7 352.3,487 352.6,504.4 352.9,521.7 353,539.1 353,556.5 352.8,573.8 352.6,591.2 352.2,608.5 351.7,625.9 351.1,643.2 350.4,660.6 349.5,677.9 348.6,695.3 347.5,712.6 346.3,730 358,730 359.2,712.6 360.3,695.3 361.2,677.9 362.1,660.6 362.8,643.2 363.4,625.9 363.9,608.5 364.3,591.2 364.5,573.8 364.7,556.5 364.7,539.1 364.6,521.7 364.3,504.4 364,487 363.5,469.7 362.9,452.3 362.2,435 361.4,417.6 360.4,400.3 359.3,382.9 358.1,365.5 356.8,348.2 355.4,330.8 353.8,313.5 352.2,296.1 350.4,278.8 348.5,261.4 346.4,244.1 344.3,226.7 342,209.4 339.6,192Z" fill-opacity="0.449"/>
<path d="M339.2,192 341.6,209.4 343.9,226.7 346,244.1 348,261.4 349.9,278.8 351.7,296.1 353.4,313.5 354.9,330.8 356.4,348.2 357.7,365.5 358.9,382.9 359.9,400.3 360.9,417.6 361.7,435 362.4,452.3 363,469.7 363.5,487 363.8,504.4 364,521.7 364.1,539.1 364.1,556.5 364,573.8 363.8,591.2 363.4,608.5 362.9,625.9 362.3,643.2 361.6,660.6 360.7,677.9 359.7,695.3 358.7,712.6 357.5,730 368.6,730 369.8,712.6 370.8,695.3 371.8,677.9 372.7,660.6 373.4,643.2 374,625.9 374.5,608.5 374.9,591.2 375.1,573.8 375.2,556.5 375.2,539.1 375.1,521.7 374.9,504.4 374.6,487 374.1,469.7 373.5,452.3 372.8,435 372,417.6 371,400.3 370,382.9 368.8,365.5 367.5,348.2 366,330.8 364.5,313.5 362.8,296.1 361,278.8 359.1,261.4 357.1,244.1 355,226.7 352.7,209.4 350.3,192Z" fill-opacity="0.464"/>
<path d="M349.9,192 352.3,209.4 354.6,226.7 356.7,244.1 358.7,261.4 360.6,278.8 362.4,296.1 364,313.5 365.6,330.8 367,348.2 368.3,365.5 369.5,382.9 370.5,400.3 371.5,417.6 372.3,435 373,452.3 373.6,469.7 374,487 374.4,504.4 374.6,521.7 374.7,539.1 374.7,556.5 374.6,573.8 374.3,591.2 374,608.5 373.5,625.9 372.9,643.2 372.1,660.6 371.3,677.9 370.3,695.3 369.2,712.6 368,730 378.8,730 380.1,712.6 381.1,695.3 382.1,677.9 383,660.6 383.7,643.2 384.3,625.9 384.8,608.5 385.2,591.2 385.4,573.8 385.5,556.5 385.5,539.1 385.4,521.7 385.2,504.4 384.9,487 384.4,469.7 383.8,452.3 383.1,435 382.3,417.6 381.4,400.3 380.3,382.9 379.1,365.5 377.8,348.2 376.4,330.8 374.9,313.5 373.2,296.1 371.4,278.8 369.5,261.4 367.5,244.1 365.4,226.7 363.1,209.4 360.8,192Z" fill-opacity="0.478"/>
<path d="M360.4,192 362.8,209.4 365,226.7 367.1,244.1 369.1,261.4 371,278.8 372.8,296.1 374.4,313.5 376,330.8 377.4,348.2 378.7,365.5 379.8,382.9 380.9,400.3 381.8,417.6 382.6,435 383.3,452.3 383.9,469.7 384.4,487 384.7,504.4 384.9,521.7 385,539.1 385,556.5 384.9,573.8 384.6,591.2 384.3,608.5 383.8,625.9 383.1,643.2 382.4,660.6 381.6,677.9 380.6,695.3 379.5,712.6 378.3,730 389.3,730 390.5,712.6 391.6,695.3 392.6,677.9 393.4,660.6 394.1,643.2 394.7,625.9 395.2,608.5 395.6,591.2 395.9,573.8 396,556.5 396,539.1 395.9,521.7 395.7,504.4 395.4,487 394.9,469.7 394.3,452.3 393.6,435 392.8,417.6 391.9,400.3 390.8,382.9 389.6,365.5 388.4,348.2 386.9,330.8 385.4,313.5 383.8,296.1 382,278.8 380.1,261.4 378.1,244.1 376,226.7 373.7,209.4 371.4,192Z" fill-opacity="0.498"/>
<path d="M371,192 373.3,209.4 375.6,226.7 377.7,244.1 379.7,261.4 381.6,278.8 383.3,296.1 385,313.5 386.5,330.8 387.9,348.2 389.2,365.5 390.3,382.9 391.4,400.3 392.3,417.6 393.1,435 393.8,452.3 394.4,469.7 394.8,487 395.2,504.4 395.4,521.7 395.5,539.1 395.5,556.5 395.3,573.8 395.1,591.2 394.7,608.5 394.2,625.9 393.6,643.2 392.9,660.6 392,677.9 391.1,695.3 390,712.6 388.8,730 399.6,730 400.8,712.6 401.9,695.3 402.9,677.9 403.7,660.6 404.5,643.2 405.1,625.9 405.6,608.5 405.9,591.2 406.2,573.8 406.3,556.5 406.4,539.1 406.3,521.7 406,504.4 405.7,487 405.3,469.7 404.7,452.3 404,435 403.2,417.6 402.2,400.3 401.2,382.9 400,365.5 398.8,348.2 397.3,330.8 395.8,313.5 394.2,296.1 392.4,278.8 390.6,261.4 388.6,244.1 386.4,226.7 384.2,209.4 381.9,192Z" fill-opacity="0.519"/>
<path d="M381.5,192 383.8,209.4 386,226.7 388.1,244.1 390.1,261.4 392,278.8 393.7,296.1 395.4,313.5 396.9,330.8 398.3,348.2 399.6,365.5 400.7,382.9 401.8,400.3 402.7,417.6 403.5,435 404.2,452.3 404.7,469.7 405.2,487 405.5,504.4 405.7,521.7 405.8,539.1 405.8,556.5 405.7,573.8 405.4,591.2 405,608.5 404.5,625.9 403.9,643.2 403.2,660.6 402.4,677.9 401.4,695.3 400.3,712.6 399.1,730 409.8,730 411,712.6 412.1,695.3 413.1,677.9 413.9,660.6 414.7,643.2 415.3,625.9 415.8,608.5 416.2,591.2 416.4,573.8 416.6,556.5 416.6,539.1 416.5,521.7 416.3,504.4 415.9,487 415.5,469.7 414.9,452.3 414.2,435 413.4,417.6 412.5,400.3 411.5,382.9 410.3,365.5 409,348.2 407.6,330.8 406.1,313.5 404.5,296.1 402.7,278.8 400.9,261.4 398.9,244.1 396.8,226.7 394.6,209.4 392.2,192Z" fill-opacity="0.539"/>
<path d="M391.8,192 394.2,209.4 396.4,226.7 398.5,244.1 400.4,261.4 402.3,278.8 404,296.1 405.7,313.5 407.2,330.8 408.6,348.2 409.8,365.5 411,382.9 412,400.3 412.9,417.6 413.7,435 414.4,452.3 415,469.7 415.4,487 415.8,504.4 416,521.7 416.1,539.1 416,556.5 415.9,573.8 415.6,591.2 415.2,608.5 414.8,625.9 414.1,643.2 413.4,660.6 412.6,677.9 411.6,695.3 410.5,712.6 409.3,730 419.9,730 421.1,712.6 422.2,695.3 423.2,677.9 424,660.6 424.8,643.2 425.4,625.9 425.9,608.5 426.2,591.2 426.5,573.8 426.6,556.5 426.7,539.1 426.6,521.7 426.4,504.4 426,487 425.6,469.7 425,452.3 424.3,435 423.5,417.6 422.6,400.3 421.6,382.9 420.4,365.5 419.2,348.2 417.8,330.8 416.3,313.5 414.7,296.1 412.9,278.8 411.1,261.4 409.1,244.1 407,226.7 404.8,209.4 402.4,192Z" fill-opacity="0.560"/>
<path d="M402,192 404.4,209.4 406.6,226.7 408.7,244.1 410.6,261.4 412.5,278.8 414.2,296.1 415.8,313.5 417.3,330.8 418.7,348.2 420,365.5 421.1,382.9 422.1,400.3 423.1,417.6 423.9,435 424.5,452.3 425.1,469.7 425.5,487 425.9,504.4 426.1,521.7 426.1,539.1 426.1,556.5 426,573.8 425.7,591.2 425.3,608.5 424.8,625.9 424.2,643.2 423.5,660.6 422.6,677.9 421.7,695.3 420.6,712.6 419.4,730 429.9,730 431.1,712.6 432.2,695.3 433.1,677.9 434,660.6 434.7,643.2 435.3,625.9 435.8,608.5 436.2,591.2 436.5,573.8 436.6,556.5 436.6,539.1 436.5,521.7 436.3,504.4 436,487 435.6,469.7 435,452.3 434.3,435 433.5,417.6 432.6,400.3 431.6,382.9 430.5,365.5 429.2,348.2 427.8,330.8 426.3,313.5 424.7,296.1 423,278.8 421.1,261.4 419.1,244.1 417.1,226.7 414.9,209.4 412.5,192Z" fill-opacity="0.580"/>
<path d="M412.1,192 414.5,209.4 416.6,226.7 418.7,244.1 420.7,261.4 422.5,278.8 424.3,296.1 425.9,313.5 427.4,330.8 428.7,348.2 430,365.5 431.1,382.9 432.1,400.3 433.1,417.6 433.8,435 434.5,452.3 435.1,469.7 435.5,487 435.8,504.4 436,521.7 436.1,539.1 436.1,556.5 435.9,573.8 435.7,591.2 435.3,608.5 434.8,625.9 434.2,643.2 433.4,660.6 432.6,677.9 431.6,695.3 430.5,712.6 429.3,730 439.7,730 440.9,712.6 442,695.3 443,677.9 443.8,660.6 444.5,643.2 445.2,625.9 445.7,608.5 446,591.2 446.3,573.8 446.4,556.5 446.5,539.1 446.4,521.7 446.2,504.4 445.9,487 445.4,469.7 444.9,452.3 444.2,435 443.4,417.6 442.5,400.3 441.5,382.9 440.3,365.5 439.1,348.2 437.7,330.8 436.2,313.5 434.6,296.1 432.9,278.8 431,261.4 429.1,244.1 427,226.7 424.8,209.4 422.5,192Z" fill-opacity="0.600"/>
<path d="M422.1,192 424.4,209.4 426.6,226.7 428.7,244.1 430.6,261.4 432.5,278.8 434.2,296.1 435.8,313.5 437.3,330.8 438.6,348.2 439.9,365.5 441,382.9 442,400.3 442.9,417.6 443.7,435 444.4,452.3 444.9,469.7 445.4,487 445.7,504.4 445.9,521.7 446,539.1 445.9,556.5 445.8,573.8 445.5,591.2 445.1,608.5 444.6,625.9 444,643.2 443.3,660.6 442.4,677.9 441.5,695.3 440.4,712.6 439.2,730 449.4,730 450.6,712.6 451.7,695.3 452.7,677.9 453.5,660.6 454.2,643.2 454.9,625.9 455.4,608.5 455.7,591.2 456,573.8 456.2,556.5 456.2,539.1 456.1,521.7 455.9,504.4 455.6,487 455.2,469.7 454.6,452.3 453.9,435 453.2,417.6 452.3,400.3 451.2,382.9 450.1,365.5 448.9,348.2 447.5,330.8 446,313.5 444.4,296.1 442.7,278.8 440.9,261.4 438.9,244.1 436.8,226.7 434.6,209.4 432.3,192Z" fill-opacity="0.600"/>
<path d="M432,192 434.2,209.4 436.4,226.7 438.5,244.1 440.4,261.4 442.3,278.8 444,296.1 445.6,313.5 447,330.8 448.4,348.2 449.6,365.5 450.8,382.9 451.8,400.3 452.7,417.6 453.4,435 454.1,452.3 454.7,469.7 455.1,487 455.4,504.4 455.6,521.7 455.7,539.1 455.6,556.5 455.5,573.8 455.2,591.2 454.8,608.5 454.3,625.9 453.7,643.2 453,660.6 452.1,677.9 451.2,695.3 450.1,712.6 448.9,730 459,730 460.2,712.6 461.3,695.3 462.2,677.9 463.1,660.6 463.8,643.2 464.4,625.9 464.9,608.5 465.3,591.2 465.6,573.8 465.7,556.5 465.8,539.1 465.7,521.7 465.5,504.4 465.2,487 464.8,469.7 464.2,452.3 463.6,435 462.8,417.6 461.9,400.3 460.9,382.9 459.7,365.5 458.5,348.2 457.1,330.8 455.7,313.5 454.1,296.1 452.4,278.8 450.5,261.4 448.6,244.1 446.5,226.7 444.4,209.4 442.1,192Z" fill-opacity="0.600"/>
<path d="M441.7,192 444,209.4 446.1,226.7 448.2,244.1 450.1,261.4 451.9,278.8 453.6,296.1 455.2,313.5 456.7,330.8 458,348.2 459.3,365.5 460.4,382.9 461.4,400.3 462.3,417.6 463.1,435 463.7,452.3 464.3,469.7 464.7,487 465,504.4 465.2,521.7 465.3,539.1 465.2,556.5 465.1,573.8 464.8,591.2 464.4,608.5 463.9,625.9 463.3,643.2 462.6,660.6 461.7,677.9 460.7,695.3 459.7,712.6 458.5,730 468.4,730 469.6,712.6 470.7,695.3 471.7,677.9 472.5,660.6 473.3,643.2 473.9,625.9 474.4,608.5 474.8,591.2 475.1,573.8 475.2,556.5 475.3,539.1 475.2,521.7 475,504.4 474.7,487 474.2,469.7 473.7,452.3 473,435 472.3,417.6 471.4,400.3 470.4,382.9 469.3,365.5 468,348.2 466.7,330.8 465.2,313.5 463.6,296.1 461.9,278.8 460.1,261.4 458.2,244.1 456.1,226.7 453.9,209.4 451.7,192Z" fill-opacity="0.600"/>
<path d="M451.3,192 453.5,209.4 455.7,226.7 457.7,244.1 459.7,261.4 461.5,278.8 463.2,296.1 464.7,313.5 466.2,330.8 467.6,348.2 468.8,365.5 469.9,382.9 470.9,400.3 471.8,417.6 472.6,435 473.2,452.3 473.7,469.7 474.2,487 474.5,504.4 474.7,521.7 474.7,539.1 474.7,556.5 474.5,573.8 474.3,591.2 473.9,608.5 473.4,625.9 472.8,643.2 472,660.6 471.2,677.9 470.2,695.3 469.1,712.6 467.9,730 477.8,730 479,712.6 480.1,695.3 481,677.9 481.9,660.6 482.6,643.2 483.2,625.9 483.7,608.5 484.1,591.2 484.4,573.8 484.6,556.5 484.6,539.1 484.5,521.7 484.3,504.4 484,487 483.6,469.7 483.1,452.3 482.4,435 481.6,417.6 480.8,400.3 479.8,382.9 478.6,365.5 477.4,348.2 476.1,330.8 474.6,313.5 473,296.1 471.3,278.8 469.5,261.4 467.6,244.1 465.5,226.7 463.4,209.4 461.1,192Z" fill-opacity="0.600"/>
<path d="M460.7,192 463,209.4 465.1,226.7 467.2,244.1 469.1,261.4 470.9,278.8 472.6,296.1 474.1,313.5 475.6,330.8 476.9,348.2 478.2,365.5 479.3,382.9 480.3,400.3 481.2,417.6 481.9,435 482.6,452.3 483.1,469.7 483.5,487 483.8,504.4 484,521.7 484.1,539.1 484,556.5 483.9,573.8 483.6,591.2 483.2,608.5 482.7,625.9 482.1,643.2 481.3,660.6 480.5,677.9 479.5,695.3 478.4,712.6 477.2,730 487,730 488.2,712.6 489.3,695.3 490.2,677.9 491.1,660.6 491.8,643.2 492.4,625.9 492.9,608.5 493.3,591.2 493.6,573.8 493.8,556.5 493.8,539.1 493.7,521.7 493.6,504.4 493.3,487 492.8,469.7 492.3,452.3 491.7,435 490.9,417.6 490,400.3 489,382.9 487.9,365.5 486.7,348.2 485.3,330.8 483.9,313.5 482.3,296.1 480.6,278.8 478.8,261.4 476.9,244.1 474.9,226.7 472.7,209.4 470.5,192Z" fill-opacity="0.600"/>
<path d="M470.1,192 472.3,209.4 474.4,226.7 476.5,244.1 478.4,261.4 480.2,278.8 481.9,296.1 483.4,313.5 484.9,330.8 486.2,348.2 487.4,365.5 488.5,382.9 489.5,400.3 490.4,417.6 491.2,435 491.8,452.3 492.3,469.7 492.7,487 493,504.4 493.2,521.7 493.3,539.1 493.2,556.5 493.1,573.8 492.8,591.2 492.4,608.5 491.9,625.9 491.3,643.2 490.6,660.6 489.7,677.9 488.7,695.3 487.7,712.6 486.5,730 496.1,730 497.3,712.6 498.3,695.3 499.3,677.9 500.2,660.6 500.9,643.2 501.5,625.9 502,608.5 502.4,591.2 502.7,573.8 502.9,556.5 502.9,539.1 502.8,521.7 502.7,504.4 502.4,487 501.9,469.7 501.4,452.3 500.8,435 500,417.6 499.1,400.3 498.1,382.9 497,365.5 495.8,348.2 494.5,330.8 493,313.5 491.5,296.1 489.8,278.8 488,261.4 486.1,244.1 484.1,226.7 481.9,209.4 479.7,192Z" fill-opacity="0.569"/>
<path d="M479.3,192 481.5,209.4 483.6,226.7 485.7,244.1 487.6,261.4 489.3,278.8 491,296.1 492.6,313.5 494,330.8 495.3,348.2 496.6,365.5 497.7,382.9 498.6,400.3 499.5,417.6 500.3,435 500.9,452.3 501.4,469.7 501.8,487 502.1,504.4 502.3,521.7 502.4,539.1 502.3,556.5 502.2,573.8 501.9,591.2 501.5,608.5 501,625.9 500.4,643.2 499.6,660.6 498.8,677.9 497.8,695.3 496.7,712.6 495.5,730 505,730 506.2,712.6 507.3,695.3 508.3,677.9 509.1,660.6 509.9,643.2 510.5,625.9 511,608.5 511.4,591.2 511.7,573.8 511.8,556.5 511.9,539.1 511.8,521.7 511.6,504.4 511.3,487 510.9,469.7 510.4,452.3 509.8,435 509,417.6 508.1,400.3 507.1,382.9 506,365.5 504.8,348.2 503.5,330.8 502.1,313.5 500.5,296.1 498.8,278.8 497,261.4 495.1,244.1 493.1,226.7 491,209.4 488.7,192Z" fill-opacity="0.404"/>
<path d="M488.3,192 490.6,209.4 492.7,226.7 494.7,244.1 496.6,261.4 498.4,278.8 500.1,296.1 501.6,313.5 503,330.8 504.4,348.2 505.6,365.5 506.7,382.9 507.6,400.3 508.5,417.6 509.3,435 509.9,452.3 510.4,469.7 510.8,487 511.1,504.4 511.3,521.7 511.4,539.1 511.3,556.5 511.1,573.8 510.9,591.2 510.5,608.5 510,625.9 509.3,643.2 508.6,660.6 507.7,677.9 506.8,695.3 505.7,712.6 504.5,730 513.9,730 515.1,712.6 516.2,695.3 517.2,677.9 518,660.6 518.7,643.2 519.4,625.9 519.9,608.5 520.3,591.2 520.6,573.8 520.7,556.5 520.8,539.1 520.7,521.7 520.5,504.4 520.2,487 519.8,469.7 519.3,452.3 518.7,435 517.9,417.6 517.1,400.3 516.1,382.9 515,365.5 513.8,348.2 512.5,330.8 511,313.5 509.5,296.1 507.8,278.8 506,261.4 504.1,244.1 502.1,226.7 500,209.4 497.8,192Z" fill-opacity="0.335"/></g>
<g fill="url(#gc0)"><path d="M-20.5,192 -17.8,209.4 -15.2,226.7 -12.7,244.1 -10.4,261.4 -8.2,278.8 -6.1,296.1 -4.2,313.5 -2.4,330.8 -0.8,348.2 0.7,365.5 2.1,382.9 3.4,400.3 4.5,417.6 5.5,435 6.4,452.3 7.1,469.7 7.7,487 8.2,504.4 8.6,521.7 8.8,539.1 8.9,556.5 8.9,573.8 8.8,591.2 8.5,608.5 8,625.9 7.5,643.2 6.8,660.6 6,677.9 5,695.3 3.9,712.6 2.7,730 7,730 8.2,712.6 9.3,695.3 10.3,677.9 11.1,660.6 11.8,643.2 12.3,625.9 12.8,608.5 13.1,591.2 13.2,573.8 13.2,556.5 13.1,539.1 12.9,521.7 12.5,504.4 12,487 11.4,469.7 10.6,452.3 9.7,435 8.6,417.6 7.4,400.3 6.1,382.9 4.6,365.5 3,348.2 1.3,330.8 -0.6,313.5 -2.6,296.1 -4.7,278.8 -7,261.4 -9.4,244.1 -11.9,226.7 -14.5,209.4 -17.3,192Z"/></g>
<g fill="url(#gc1)"><path d="M-0.3,192 2.5,209.4 5,226.7 7.5,244.1 9.8,261.4 12,278.8 14,296.1 15.9,313.5 17.7,330.8 19.3,348.2 20.8,365.5 22.2,382.9 23.4,400.3 24.5,417.6 25.5,435 26.4,452.3 27.1,469.7 27.7,487 28.2,504.4 28.6,521.7 28.8,539.1 28.9,556.5 28.9,573.8 28.7,591.2 28.4,608.5 28,625.9 27.4,643.2 26.7,660.6 25.9,677.9 24.9,695.3 23.9,712.6 22.6,730 26.9,730 28.2,712.6 29.2,695.3 30.2,677.9 31,660.6 31.7,643.2 32.3,625.9 32.7,608.5 33,591.2 33.2,573.8 33.2,556.5 33.1,539.1 32.9,521.7 32.5,504.4 32,487 31.4,469.7 30.6,452.3 29.7,435 28.6,417.6 27.4,400.3 26.1,382.9 24.7,365.5 23.1,348.2 21.3,330.8 19.5,313.5 17.5,296.1 15.4,278.8 13.2,261.4 10.8,244.1 8.3,226.7 5.7,209.4 3,192Z"/>
<path d="M19,192 21.7,209.4 24.2,226.7 26.7,244.1 28.9,261.4 31.1,278.8 33.1,296.1 35,313.5 36.7,330.8 38.4,348.2 39.8,365.5 41.2,382.9 42.4,400.3 43.5,417.6 44.5,435 45.4,452.3 46.1,469.7 46.7,487 47.2,504.4 47.5,521.7 47.7,539.1 47.8,556.5 47.8,573.8 47.6,591.2 47.3,608.5 46.9,625.9 46.3,643.2 45.6,660.6 44.8,677.9 43.9,695.3 42.8,712.6 41.6,730 45.9,730 47.1,712.6 48.2,695.3 49.1,677.9 49.9,660.6 50.6,643.2 51.2,625.9 51.6,608.5 51.9,591.2 52.1,573.8 52.1,556.5 52,539.1 51.8,521.7 51.5,504.4 51,487 50.4,469.7 49.6,452.3 48.7,435 47.7,417.6 46.5,400.3 45.2,382.9 43.7,365.5 42.1,348.2 40.4,330.8 38.6,313.5 36.6,296.1 34.5,278.8 32.3,261.4 30,244.1 27.5,226.7 24.9,209.4 22.2,192Z"/></g>
<g fill="url(#gc2)"><path d="M38.6,192 41.3,209.4 43.8,226.7 46.2,244.1 48.5,261.4 50.6,278.8 52.6,296.1 54.5,313.5 56.2,330.8 57.8,348.2 59.3,365.5 60.6,382.9 61.9,400.3 63,417.6 63.9,435 64.8,452.3 65.5,469.7 66.1,487 66.5,504.4 66.9,521.7 67.1,539.1 67.2,556.5 67.1,573.8 67,591.2 66.7,608.5 66.2,625.9 65.7,643.2 65,660.6 64.1,677.9 63.2,695.3 62.1,712.6 60.9,730 65.2,730 66.4,712.6 67.5,695.3 68.4,677.9 69.3,660.6 70,643.2 70.5,625.9 71,608.5 71.3,591.2 71.4,573.8 71.5,556.5 71.4,539.1 71.2,521.7 70.8,504.4 70.4,487 69.8,469.7 69,452.3 68.1,435 67.1,417.6 65.9,400.3 64.6,382.9 63.2,365.5 61.6,348.2 59.9,330.8 58.1,313.5 56.2,296.1 54.1,278.8 51.9,261.4 49.6,244.1 47.1,226.7 44.5,209.4 41.8,192Z"/></g>
<g fill="url(#gc3)"><path d="M57.3,192 60,209.4 62.5,226.7 64.9,244.1 67.2,261.4 69.3,278.8 71.3,296.1 73.1,313.5 74.8,330.8 76.4,348.2 77.9,365.5 79.2,382.9 80.4,400.3 81.5,417.6 82.4,435 83.3,452.3 84,469.7 84.6,487 85,504.4 85.4,521.7 85.6,539.1 85.6,556.5 85.6,573.8 85.4,591.2 85.1,608.5 84.7,625.9 84.1,643.2 83.4,660.6 82.6,677.9 81.6,695.3 80.5,712.6 79.3,730 83.6,730 84.8,712.6 85.9,695.3 86.9,677.9 87.7,660.6 88.4,643.2 89,625.9 89.4,608.5 89.7,591.2 89.9,573.8 89.9,556.5 89.9,539.1 89.7,521.7 89.3,504.4 88.9,487 88.2,469.7 87.5,452.3 86.6,435 85.6,417.6 84.4,400.3 83.2,382.9 81.7,365.5 80.2,348.2 78.5,330.8 76.7,313.5 74.8,296.1 72.7,278.8 70.5,261.4 68.2,244.1 65.8,226.7 63.2,209.4 60.6,192Z"/>
<path d="M75.5,192 78.2,209.4 80.7,226.7 83.1,244.1 85.3,261.4 87.4,278.8 89.4,296.1 91.2,313.5 92.9,330.8 94.5,348.2 95.9,365.5 97.2,382.9 98.4,400.3 99.5,417.6 100.4,435 101.3,452.3 102,469.7 102.5,487 103,504.4 103.3,521.7 103.5,539.1 103.6,556.5 103.5,573.8 103.4,591.2 103,608.5 102.6,625.9 102,643.2 101.3,660.6 100.5,677.9 99.5,695.3 98.5,712.6 97.2,730 101.5,730 102.8,712.6 103.8,695.3 104.8,677.9 105.6,660.6 106.3,643.2 106.9,625.9 107.3,608.5 107.7,591.2 107.8,573.8 107.9,556.5 107.8,539.1 107.6,521.7 107.3,504.4 106.8,487 106.2,469.7 105.5,452.3 104.6,435 103.6,417.6 102.5,400.3 101.2,382.9 99.8,365.5 98.3,348.2 96.6,330.8 94.8,313.5 92.9,296.1 90.8,278.8 88.7,261.4 86.4,244.1 84,226.7 81.4,209.4 78.8,192Z"/></g>
<g fill="url(#gc4)"><path d="M92.7,192 95.4,209.4 97.9,226.7 100.2,244.1 102.4,261.4 104.5,278.8 106.5,296.1 108.3,313.5 110,330.8 111.5,348.2 113,365.5 114.3,382.9 115.5,400.3 116.5,417.6 117.5,435 118.3,452.3 119,469.7 119.5,487 120,504.4 120.3,521.7 120.5,539.1 120.6,556.5 120.5,573.8 120.3,591.2 120,608.5 119.5,625.9 119,643.2 118.3,660.6 117.4,677.9 116.5,695.3 115.4,712.6 114.2,730 118.5,730 119.7,712.6 120.8,695.3 121.7,677.9 122.6,660.6 123.3,643.2 123.8,625.9 124.3,608.5 124.6,591.2 124.8,573.8 124.9,556.5 124.8,539.1 124.6,521.7 124.3,504.4 123.8,487 123.2,469.7 122.5,452.3 121.6,435 120.6,417.6 119.5,400.3 118.2,382.9 116.9,365.5 115.3,348.2 113.7,330.8 111.9,313.5 110,296.1 108,278.8 105.8,261.4 103.5,244.1 101.1,226.7 98.6,209.4 96,192Z"/></g>
<g fill="url(#gc5)"><path d="M108.9,192 111.5,209.4 114,226.7 116.4,244.1 118.6,261.4 120.6,278.8 122.6,296.1 124.4,313.5 126.1,330.8 127.6,348.2 129,365.5 130.3,382.9 131.5,400.3 132.5,417.6 133.5,435 134.3,452.3 134.9,469.7 135.5,487 136,504.4 136.3,521.7 136.5,539.1 136.5,556.5 136.5,573.8 136.3,591.2 135.9,608.5 135.5,625.9 134.9,643.2 134.2,660.6 133.4,677.9 132.4,695.3 131.3,712.6 130.1,730 134.4,730 135.6,712.6 136.7,695.3 137.7,677.9 138.5,660.6 139.2,643.2 139.8,625.9 140.2,608.5 140.6,591.2 140.8,573.8 140.8,556.5 140.8,539.1 140.6,521.7 140.3,504.4 139.8,487 139.2,469.7 138.5,452.3 137.6,435 136.7,417.6 135.5,400.3 134.3,382.9 132.9,365.5 131.4,348.2 129.8,330.8 128,313.5 126.1,296.1 124.1,278.8 121.9,261.4 119.7,244.1 117.3,226.7 114.8,209.4 112.2,192Z"/>
<path d="M126.1,192 128.7,209.4 131.2,226.7 133.5,244.1 135.7,261.4 137.8,278.8 139.7,296.1 141.5,313.5 143.1,330.8 144.7,348.2 146.1,365.5 147.4,382.9 148.5,400.3 149.6,417.6 150.5,435 151.3,452.3 151.9,469.7 152.5,487 152.9,504.4 153.2,521.7 153.4,539.1 153.5,556.5 153.4,573.8 153.2,591.2 152.9,608.5 152.4,625.9 151.9,643.2 151.1,660.6 150.3,677.9 149.4,695.3 148.3,712.6 147,730 151.3,730 152.6,712.6 153.7,695.3 154.6,677.9 155.4,660.6 156.2,643.2 156.7,625.9 157.2,608.5 157.5,591.2 157.7,573.8 157.8,556.5 157.7,539.1 157.5,521.7 157.2,504.4 156.8,487 156.2,469.7 155.5,452.3 154.7,435 153.7,417.6 152.6,400.3 151.3,382.9 150,365.5 148.5,348.2 146.8,330.8 145.1,313.5 143.2,296.1 141.2,278.8 139.1,261.4 136.8,244.1 134.5,226.7 132,209.4 129.4,192Z"/></g>
<g fill="url(#gc6)"><path d="M142.5,192 145.1,209.4 147.5,226.7 149.8,244.1 152,261.4 154.1,278.8 156,296.1 157.8,313.5 159.4,330.8 160.9,348.2 162.3,365.5 163.6,382.9 164.8,400.3 165.8,417.6 166.7,435 167.5,452.3 168.1,469.7 168.7,487 169.1,504.4 169.4,521.7 169.6,539.1 169.6,556.5 169.6,573.8 169.4,591.2 169,608.5 168.6,625.9 168,643.2 167.3,660.6 166.5,677.9 165.5,695.3 164.4,712.6 163.2,730 167.5,730 168.7,712.6 169.8,695.3 170.8,677.9 171.6,660.6 172.3,643.2 172.9,625.9 173.3,608.5 173.7,591.2 173.9,573.8 173.9,556.5 173.9,539.1 173.7,521.7 173.4,504.4 173,487 172.4,469.7 171.7,452.3 170.9,435 169.9,417.6 168.8,400.3 167.6,382.9 166.2,365.5 164.7,348.2 163.1,330.8 161.4,313.5 159.5,296.1 157.5,278.8 155.4,261.4 153.2,244.1 150.8,226.7 148.4,209.4 145.8,192Z"/></g>
<g fill="url(#gc7)"><path d="M158.2,192 160.8,209.4 163.2,226.7 165.5,244.1 167.6,261.4 169.7,278.8 171.6,296.1 173.3,313.5 175,330.8 176.5,348.2 177.9,365.5 179.1,382.9 180.3,400.3 181.3,417.6 182.2,435 183,452.3 183.6,469.7 184.2,487 184.6,504.4 184.9,521.7 185.1,539.1 185.1,556.5 185,573.8 184.8,591.2 184.5,608.5 184,625.9 183.4,643.2 182.7,660.6 181.9,677.9 180.9,695.3 179.8,712.6 178.6,730 182.9,730 184.1,712.6 185.2,695.3 186.2,677.9 187,660.6 187.7,643.2 188.3,625.9 188.8,608.5 189.1,591.2 189.3,573.8 189.4,556.5 189.4,539.1 189.2,521.7 188.9,504.4 188.5,487 187.9,469.7 187.2,452.3 186.4,435 185.4,417.6 184.3,400.3 183.1,382.9 181.8,365.5 180.3,348.2 178.7,330.8 176.9,313.5 175.1,296.1 173.1,278.8 171,261.4 168.8,244.1 166.5,226.7 164,209.4 161.4,192Z"/>
<path d="M172.4,192 174.9,209.4 177.3,226.7 179.6,244.1 181.8,261.4 183.8,278.8 185.7,296.1 187.4,313.5 189,330.8 190.5,348.2 191.9,365.5 193.2,382.9 194.3,400.3 195.3,417.6 196.2,435 197,452.3 197.6,469.7 198.2,487 198.6,504.4 198.9,521.7 199,539.1 199.1,556.5 199,573.8 198.8,591.2 198.4,608.5 198,625.9 197.4,643.2 196.7,660.6 195.8,677.9 194.9,695.3 193.8,712.6 192.6,730 196.9,730 198.1,712.6 199.2,695.3 200.1,677.9 201,660.6 201.7,643.2 202.3,625.9 202.7,608.5 203.1,591.2 203.3,573.8 203.4,556.5 203.3,539.1 203.2,521.7 202.9,504.4 202.4,487 201.9,469.7 201.2,452.3 200.4,435 199.4,417.6 198.4,400.3 197.1,382.9 195.8,365.5 194.3,348.2 192.7,330.8 191,313.5 189.2,296.1 187.2,278.8 185.1,261.4 182.9,244.1 180.6,226.7 178.2,209.4 175.6,192Z"/></g>
<g fill="url(#gc8)"><path d="M188,192 190.6,209.4 193,226.7 195.2,244.1 197.4,261.4 199.4,278.8 201.3,296.1 203,313.5 204.6,330.8 206.1,348.2 207.5,365.5 208.7,382.9 209.8,400.3 210.8,417.6 211.7,435 212.5,452.3 213.1,469.7 213.6,487 214,504.4 214.3,521.7 214.5,539.1 214.5,556.5 214.4,573.8 214.2,591.2 213.9,608.5 213.4,625.9 212.8,643.2 212.1,660.6 211.3,677.9 210.3,695.3 209.2,712.6 208,730 212.3,730 213.5,712.6 214.6,695.3 215.6,677.9 216.4,660.6 217.1,643.2 217.7,625.9 218.2,608.5 218.5,591.2 218.7,573.8 218.8,556.5 218.8,539.1 218.6,521.7 218.3,504.4 217.9,487 217.4,469.7 216.7,452.3 215.9,435 215,417.6 213.9,400.3 212.7,382.9 211.3,365.5 209.9,348.2 208.3,330.8 206.6,313.5 204.8,296.1 202.8,278.8 200.8,261.4 198.6,244.1 196.3,226.7 193.8,209.4 191.3,192Z"/>
<path d="M202.7,192 205.2,209.4 207.6,226.7 209.9,244.1 212,261.4 214,278.8 215.8,296.1 217.6,313.5 219.2,330.8 220.7,348.2 222,365.5 223.2,382.9 224.4,400.3 225.3,417.6 226.2,435 227,452.3 227.6,469.7 228.1,487 228.5,504.4 228.8,521.7 229,539.1 229,556.5 228.9,573.8 228.7,591.2 228.3,608.5 227.9,625.9 227.3,643.2 226.6,660.6 225.7,677.9 224.8,695.3 223.7,712.6 222.5,730 226.8,730 228,712.6 229.1,695.3 230,677.9 230.9,660.6 231.6,643.2 232.2,625.9 232.6,608.5 233,591.2 233.2,573.8 233.3,556.5 233.3,539.1 233.1,521.7 232.8,504.4 232.4,487 231.9,469.7 231.2,452.3 230.4,435 229.5,417.6 228.4,400.3 227.2,382.9 225.9,365.5 224.4,348.2 222.9,330.8 221.2,313.5 219.4,296.1 217.4,278.8 215.4,261.4 213.2,244.1 210.9,226.7 208.5,209.4 206,192Z"/></g>
<g fill="url(#gc9)"><path d="M216.9,192 219.4,209.4 221.8,226.7 224,244.1 226.1,261.4 228.1,278.8 229.9,296.1 231.6,313.5 233.2,330.8 234.7,348.2 236.1,365.5 237.3,382.9 238.4,400.3 239.4,417.6 240.2,435 241,452.3 241.6,469.7 242.1,487 242.5,504.4 242.8,521.7 242.9,539.1 243,556.5 242.9,573.8 242.6,591.2 242.3,608.5 241.8,625.9 241.2,643.2 240.5,660.6 239.7,677.9 238.7,695.3 237.6,712.6 236.4,730 240.7,730 241.9,712.6 243,695.3 244,677.9 244.8,660.6 245.5,643.2 246.1,625.9 246.6,608.5 246.9,591.2 247.2,573.8 247.3,556.5 247.2,539.1 247.1,521.7 246.8,504.4 246.4,487 245.9,469.7 245.2,452.3 244.4,435 243.5,417.6 242.4,400.3 241.2,382.9 239.9,365.5 238.5,348.2 236.9,330.8 235.3,313.5 233.4,296.1 231.5,278.8 229.5,261.4 227.3,244.1 225,226.7 222.6,209.4 220.1,192Z"/>
<path d="M231,192 233.5,209.4 235.9,226.7 238.1,244.1 240.2,261.4 242.2,278.8 244,296.1 245.7,313.5 247.3,330.8 248.8,348.2 250.1,365.5 251.3,382.9 252.4,400.3 253.4,417.6 254.2,435 255,452.3 255.6,469.7 256.1,487 256.5,504.4 256.8,521.7 256.9,539.1 256.9,556.5 256.8,573.8 256.6,591.2 256.3,608.5 255.8,625.9 255.2,643.2 254.5,660.6 253.6,677.9 252.7,695.3 251.6,712.6 250.4,730 254.7,730 255.9,712.6 257,695.3 257.9,677.9 258.8,660.6 259.5,643.2 260.1,625.9 260.6,608.5 260.9,591.2 261.1,573.8 261.2,556.5 261.2,539.1 261.1,521.7 260.8,504.4 260.4,487 259.9,469.7 259.2,452.3 258.4,435 257.5,417.6 256.5,400.3 255.3,382.9 254,365.5 252.5,348.2 251,330.8 249.3,313.5 247.5,296.1 245.6,278.8 243.6,261.4 241.4,244.1 239.2,226.7 236.8,209.4 234.3,192Z"/></g>
<g fill="url(#gc10)"><path d="M245.3,192 247.8,209.4 250.1,226.7 252.3,244.1 254.4,261.4 256.4,278.8 258.2,296.1 259.9,313.5 261.5,330.8 262.9,348.2 264.2,365.5 265.4,382.9 266.5,400.3 267.5,417.6 268.3,435 269.1,452.3 269.7,469.7 270.2,487 270.6,504.4 270.8,521.7 271,539.1 271,556.5 270.9,573.8 270.7,591.2 270.3,608.5 269.8,625.9 269.2,643.2 268.5,660.6 267.7,677.9 266.7,695.3 265.6,712.6 264.4,730 268.7,730 269.9,712.6 271,695.3 272,677.9 272.8,660.6 273.5,643.2 274.1,625.9 274.6,608.5 275,591.2 275.2,573.8 275.3,556.5 275.3,539.1 275.1,521.7 274.9,504.4 274.5,487 274,469.7 273.3,452.3 272.5,435 271.6,417.6 270.6,400.3 269.4,382.9 268.1,365.5 266.7,348.2 265.2,330.8 263.5,313.5 261.7,296.1 259.8,278.8 257.8,261.4 255.7,244.1 253.4,226.7 251,209.4 248.6,192Z"/>
<path d="M259.6,192 262,209.4 264.4,226.7 266.6,244.1 268.6,261.4 270.6,278.8 272.4,296.1 274.1,313.5 275.6,330.8 277.1,348.2 278.4,365.5 279.6,382.9 280.7,400.3 281.6,417.6 282.5,435 283.2,452.3 283.8,469.7 284.3,487 284.7,504.4 284.9,521.7 285.1,539.1 285.1,556.5 285,573.8 284.7,591.2 284.4,608.5 283.9,625.9 283.3,643.2 282.6,660.6 281.7,677.9 280.8,695.3 279.7,712.6 278.5,730 282.8,730 284,712.6 285.1,695.3 286,677.9 286.9,660.6 287.6,643.2 288.2,625.9 288.7,608.5 289,591.2 289.3,573.8 289.4,556.5 289.4,539.1 289.2,521.7 289,504.4 288.6,487 288.1,469.7 287.4,452.3 286.6,435 285.7,417.6 284.7,400.3 283.5,382.9 282.3,365.5 280.9,348.2 279.3,330.8 277.7,313.5 275.9,296.1 274,278.8 272,261.4 269.9,244.1 267.6,226.7 265.3,209.4 262.8,192Z"/></g>
<g fill="url(#gc11)"><path d="M272.3,192 274.8,209.4 277.1,226.7 279.3,244.1 281.3,261.4 283.3,278.8 285.1,296.1 286.7,313.5 288.3,330.8 289.7,348.2 291,365.5 292.2,382.9 293.3,400.3 294.2,417.6 295.1,435 295.8,452.3 296.4,469.7 296.9,487 297.2,504.4 297.5,521.7 297.6,539.1 297.6,556.5 297.5,573.8 297.3,591.2 296.9,608.5 296.5,625.9 295.9,643.2 295.1,660.6 294.3,677.9 293.3,695.3 292.2,712.6 291,730 295.3,730 296.5,712.6 297.6,695.3 298.6,677.9 299.4,660.6 300.2,643.2 300.8,625.9 301.2,608.5 301.6,591.2 301.8,573.8 301.9,556.5 301.9,539.1 301.8,521.7 301.5,504.4 301.2,487 300.7,469.7 300,452.3 299.2,435 298.3,417.6 297.3,400.3 296.2,382.9 294.9,365.5 293.5,348.2 292,330.8 290.3,313.5 288.6,296.1 286.7,278.8 284.7,261.4 282.6,244.1 280.4,226.7 278,209.4 275.6,192Z"/>
<path d="M285,192 287.4,209.4 289.7,226.7 291.9,244.1 293.9,261.4 295.8,278.8 297.6,296.1 299.3,313.5 300.8,330.8 302.3,348.2 303.6,365.5 304.7,382.9 305.8,400.3 306.7,417.6 307.6,435 308.3,452.3 308.9,469.7 309.4,487 309.7,504.4 310,521.7 310.1,539.1 310.1,556.5 310,573.8 309.8,591.2 309.4,608.5 308.9,625.9 308.3,643.2 307.6,660.6 306.8,677.9 305.8,695.3 304.7,712.6 303.5,730 307.8,730 309,712.6 310.1,695.3 311.1,677.9 311.9,660.6 312.6,643.2 313.2,625.9 313.7,608.5 314.1,591.2 314.3,573.8 314.4,556.5 314.4,539.1 314.3,521.7 314,504.4 313.7,487 313.2,469.7 312.5,452.3 311.8,435 310.9,417.6 309.8,400.3 308.7,382.9 307.4,365.5 306,348.2 304.5,330.8 302.9,313.5 301.2,296.1 299.3,278.8 297.3,261.4 295.2,244.1 293,226.7 290.6,209.4 288.2,192Z"/></g>
<g fill="url(#gc12)"><path d="M297.4,192 299.8,209.4 302.1,226.7 304.3,244.1 306.3,261.4 308.2,278.8 310,296.1 311.7,313.5 313.2,330.8 314.6,348.2 315.9,365.5 317.1,382.9 318.1,400.3 319.1,417.6 319.9,435 320.6,452.3 321.2,469.7 321.6,487 322,504.4 322.3,521.7 322.4,539.1 322.4,556.5 322.3,573.8 322,591.2 321.7,608.5 321.2,625.9 320.6,643.2 319.9,660.6 319,677.9 318,695.3 317,712.6 315.7,730 320,730 321.3,712.6 322.3,695.3 323.3,677.9 324.2,660.6 324.9,643.2 325.5,625.9 326,608.5 326.3,591.2 326.6,573.8 326.7,556.5 326.7,539.1 326.6,521.7 326.3,504.4 325.9,487 325.4,469.7 324.8,452.3 324.1,435 323.2,417.6 322.2,400.3 321,382.9 319.8,365.5 318.4,348.2 316.9,330.8 315.3,313.5 313.5,296.1 311.7,278.8 309.7,261.4 307.6,244.1 305.4,226.7 303.1,209.4 300.6,192Z"/>
<path d="M308.8,192 311.2,209.4 313.5,226.7 315.7,244.1 317.7,261.4 319.6,278.8 321.4,296.1 323,313.5 324.5,330.8 325.9,348.2 327.2,365.5 328.4,382.9 329.4,400.3 330.4,417.6 331.2,435 331.9,452.3 332.5,469.7 332.9,487 333.3,504.4 333.5,521.7 333.7,539.1 333.7,556.5 333.5,573.8 333.3,591.2 332.9,608.5 332.4,625.9 331.8,643.2 331.1,660.6 330.3,677.9 329.3,695.3 328.2,712.6 327,730 331.3,730 332.5,712.6 333.6,695.3 334.6,677.9 335.4,660.6 336.1,643.2 336.7,625.9 337.2,608.5 337.6,591.2 337.8,573.8 338,556.5 338,539.1 337.8,521.7 337.6,504.4 337.2,487 336.7,469.7 336.1,452.3 335.4,435 334.5,417.6 333.5,400.3 332.4,382.9 331.1,365.5 329.7,348.2 328.2,330.8 326.6,313.5 324.9,296.1 323,278.8 321.1,261.4 319,244.1 316.8,226.7 314.5,209.4 312.1,192Z"/></g>
<g fill="url(#gc13)"><path d="M320.8,192 323.2,209.4 325.4,226.7 327.6,244.1 329.6,261.4 331.5,278.8 333.2,296.1 334.9,313.5 336.4,330.8 337.8,348.2 339.1,365.5 340.2,382.9 341.3,400.3 342.2,417.6 343,435 343.7,452.3 344.3,469.7 344.7,487 345.1,504.4 345.3,521.7 345.4,539.1 345.4,556.5 345.3,573.8 345.1,591.2 344.7,608.5 344.2,625.9 343.6,643.2 342.9,660.6 342,677.9 341.1,695.3 340,712.6 338.8,730 343.1,730 344.3,712.6 345.4,695.3 346.3,677.9 347.2,660.6 347.9,643.2 348.5,625.9 349,608.5 349.4,591.2 349.6,573.8 349.7,556.5 349.7,539.1 349.6,521.7 349.4,504.4 349,487 348.5,469.7 347.9,452.3 347.2,435 346.3,417.6 345.3,400.3 344.2,382.9 342.9,365.5 341.6,348.2 340.1,330.8 338.5,313.5 336.8,296.1 334.9,278.8 333,261.4 330.9,244.1 328.7,226.7 326.4,209.4 324,192Z"/>
<path d="M332.2,192 334.6,209.4 336.8,226.7 339,244.1 341,261.4 342.9,278.8 344.6,296.1 346.2,313.5 347.7,330.8 349.1,348.2 350.4,365.5 351.5,382.9 352.6,400.3 353.5,417.6 354.3,435 355,452.3 355.6,469.7 356,487 356.4,504.4 356.6,521.7 356.7,539.1 356.7,556.5 356.6,573.8 356.3,591.2 356,608.5 355.5,625.9 354.9,643.2 354.1,660.6 353.3,677.9 352.3,695.3 351.2,712.6 350,730 354.3,730 355.5,712.6 356.6,695.3 357.6,677.9 358.4,660.6 359.2,643.2 359.8,625.9 360.3,608.5 360.6,591.2 360.9,573.8 361,556.5 361,539.1 360.9,521.7 360.7,504.4 360.3,487 359.8,469.7 359.2,452.3 358.5,435 357.6,417.6 356.6,400.3 355.5,382.9 354.3,365.5 352.9,348.2 351.4,330.8 349.8,313.5 348.1,296.1 346.3,278.8 344.3,261.4 342.3,244.1 340.1,226.7 337.8,209.4 335.4,192Z"/></g>
<g fill="url(#gc14)"><path d="M343.4,192 345.8,209.4 348,226.7 350.2,244.1 352.2,261.4 354,278.8 355.8,296.1 357.4,313.5 358.9,330.8 360.3,348.2 361.5,365.5 362.7,382.9 363.7,400.3 364.6,417.6 365.4,435 366.1,452.3 366.7,469.7 367.1,487 367.5,504.4 367.7,521.7 367.8,539.1 367.8,556.5 367.7,573.8 367.4,591.2 367,608.5 366.5,625.9 365.9,643.2 365.2,660.6 364.4,677.9 363.4,695.3 362.3,712.6 361.1,730 365.4,730 366.6,712.6 367.7,695.3 368.7,677.9 369.5,660.6 370.2,643.2 370.8,625.9 371.3,608.5 371.7,591.2 372,573.8 372.1,556.5 372.1,539.1 372,521.7 371.8,504.4 371.4,487 370.9,469.7 370.3,452.3 369.6,435 368.7,417.6 367.7,400.3 366.6,382.9 365.4,365.5 364.1,348.2 362.6,330.8 361,313.5 359.3,296.1 357.5,278.8 355.5,261.4 353.5,244.1 351.3,226.7 349,209.4 346.7,192Z"/>
<path d="M353.6,192 356,209.4 358.2,226.7 360.3,244.1 362.3,261.4 364.2,278.8 365.9,296.1 367.5,313.5 369,330.8 370.4,348.2 371.7,365.5 372.8,382.9 373.8,400.3 374.7,417.6 375.5,435 376.2,452.3 376.7,469.7 377.2,487 377.5,504.4 377.8,521.7 377.9,539.1 377.9,556.5 377.7,573.8 377.5,591.2 377.1,608.5 376.6,625.9 376,643.2 375.3,660.6 374.4,677.9 373.5,695.3 372.4,712.6 371.2,730 375.5,730 376.7,712.6 377.8,695.3 378.7,677.9 379.6,660.6 380.3,643.2 380.9,625.9 381.4,608.5 381.8,591.2 382,573.8 382.2,556.5 382.2,539.1 382.1,521.7 381.8,504.4 381.5,487 381,469.7 380.4,452.3 379.7,435 378.8,417.6 377.9,400.3 376.8,382.9 375.5,365.5 374.2,348.2 372.7,330.8 371.1,313.5 369.5,296.1 367.6,278.8 365.7,261.4 363.7,244.1 361.5,226.7 359.2,209.4 356.9,192Z"/>
<path d="M364.3,192 366.7,209.4 368.9,226.7 371,244.1 373,261.4 374.8,278.8 376.5,296.1 378.1,313.5 379.6,330.8 381,348.2 382.2,365.5 383.4,382.9 384.4,400.3 385.3,417.6 386.1,435 386.7,452.3 387.3,469.7 387.7,487 388.1,504.4 388.3,521.7 388.4,539.1 388.4,556.5 388.3,573.8 388,591.2 387.6,608.5 387.1,625.9 386.5,643.2 385.8,660.6 384.9,677.9 384,695.3 382.9,712.6 381.7,730 386,730 387.2,712.6 388.3,695.3 389.2,677.9 390.1,660.6 390.8,643.2 391.4,625.9 391.9,608.5 392.3,591.2 392.6,573.8 392.7,556.5 392.7,539.1 392.6,521.7 392.4,504.4 392,487 391.6,469.7 391,452.3 390.2,435 389.4,417.6 388.4,400.3 387.3,382.9 386.1,365.5 384.8,348.2 383.3,330.8 381.8,313.5 380.1,296.1 378.3,278.8 376.3,261.4 374.3,244.1 372.2,226.7 369.9,209.4 367.5,192Z"/></g>
<g fill="url(#gc15)"><path d="M374.8,192 377.2,209.4 379.4,226.7 381.5,244.1 383.5,261.4 385.3,278.8 387,296.1 388.6,313.5 390.1,330.8 391.5,348.2 392.7,365.5 393.8,382.9 394.8,400.3 395.7,417.6 396.5,435 397.2,452.3 397.7,469.7 398.2,487 398.5,504.4 398.7,521.7 398.8,539.1 398.8,556.5 398.7,573.8 398.4,591.2 398,608.5 397.5,625.9 396.9,643.2 396.2,660.6 395.3,677.9 394.4,695.3 393.3,712.6 392.1,730 396.4,730 397.6,712.6 398.7,695.3 399.6,677.9 400.5,660.6 401.2,643.2 401.8,625.9 402.3,608.5 402.7,591.2 403,573.8 403.1,556.5 403.1,539.1 403,521.7 402.8,504.4 402.5,487 402,469.7 401.4,452.3 400.7,435 399.8,417.6 398.9,400.3 397.8,382.9 396.6,365.5 395.2,348.2 393.8,330.8 392.2,313.5 390.5,296.1 388.8,278.8 386.8,261.4 384.8,244.1 382.7,226.7 380.4,209.4 378.1,192Z"/>
<path d="M385.2,192 387.6,209.4 389.8,226.7 391.9,244.1 393.8,261.4 395.7,278.8 397.4,296.1 399,313.5 400.4,330.8 401.8,348.2 403,365.5 404.1,382.9 405.1,400.3 406,417.6 406.8,435 407.5,452.3 408,469.7 408.4,487 408.8,504.4 409,521.7 409.1,539.1 409.1,556.5 408.9,573.8 408.7,591.2 408.3,608.5 407.8,625.9 407.2,643.2 406.5,660.6 405.6,677.9 404.6,695.3 403.5,712.6 402.3,730 406.6,730 407.8,712.6 408.9,695.3 409.9,677.9 410.8,660.6 411.5,643.2 412.1,625.9 412.6,608.5 413,591.2 413.2,573.8 413.4,556.5 413.4,539.1 413.3,521.7 413.1,504.4 412.7,487 412.3,469.7 411.7,452.3 411,435 410.1,417.6 409.2,400.3 408.1,382.9 406.9,365.5 405.6,348.2 404.1,330.8 402.6,313.5 400.9,296.1 399.1,278.8 397.2,261.4 395.2,244.1 393.1,226.7 390.8,209.4 388.5,192Z"/></g>
<g fill="url(#gc16)"><path d="M395.5,192 397.9,209.4 400.1,226.7 402.1,244.1 404.1,261.4 405.9,278.8 407.6,296.1 409.2,313.5 410.7,330.8 412,348.2 413.2,365.5 414.3,382.9 415.3,400.3 416.2,417.6 417,435 417.6,452.3 418.2,469.7 418.6,487 418.9,504.4 419.2,521.7 419.2,539.1 419.2,556.5 419.1,573.8 418.8,591.2 418.4,608.5 417.9,625.9 417.3,643.2 416.6,660.6 415.7,677.9 414.8,695.3 413.7,712.6 412.5,730 416.8,730 418,712.6 419.1,695.3 420,677.9 420.9,660.6 421.6,643.2 422.2,625.9 422.7,608.5 423.1,591.2 423.4,573.8 423.5,556.5 423.5,539.1 423.5,521.7 423.2,504.4 422.9,487 422.5,469.7 421.9,452.3 421.2,435 420.3,417.6 419.4,400.3 418.3,382.9 417.1,365.5 415.8,348.2 414.4,330.8 412.8,313.5 411.1,296.1 409.4,278.8 407.5,261.4 405.5,244.1 403.3,226.7 401.1,209.4 398.8,192Z"/>
<path d="M405.7,192 408,209.4 410.2,226.7 412.3,244.1 414.2,261.4 416,278.8 417.7,296.1 419.3,313.5 420.8,330.8 422.1,348.2 423.3,365.5 424.4,382.9 425.4,400.3 426.3,417.6 427,435 427.7,452.3 428.2,469.7 428.7,487 429,504.4 429.2,521.7 429.3,539.1 429.2,556.5 429.1,573.8 428.8,591.2 428.5,608.5 428,625.9 427.3,643.2 426.6,660.6 425.8,677.9 424.8,695.3 423.7,712.6 422.5,730 426.8,730 428,712.6 429.1,695.3 430.1,677.9 430.9,660.6 431.6,643.2 432.3,625.9 432.8,608.5 433.1,591.2 433.4,573.8 433.5,556.5 433.6,539.1 433.5,521.7 433.3,504.4 433,487 432.5,469.7 431.9,452.3 431.2,435 430.4,417.6 429.4,400.3 428.4,382.9 427.2,365.5 425.9,348.2 424.4,330.8 422.9,313.5 421.2,296.1 419.5,278.8 417.6,261.4 415.6,244.1 413.5,226.7 411.3,209.4 408.9,192Z"/>
<path d="M415.7,192 418,209.4 420.2,226.7 422.3,244.1 424.2,261.4 426,278.8 427.7,296.1 429.3,313.5 430.7,330.8 432,348.2 433.3,365.5 434.4,382.9 435.3,400.3 436.2,417.6 437,435 437.6,452.3 438.1,469.7 438.6,487 438.9,504.4 439.1,521.7 439.2,539.1 439.1,556.5 439,573.8 438.7,591.2 438.4,608.5 437.9,625.9 437.2,643.2 436.5,660.6 435.7,677.9 434.7,695.3 433.6,712.6 432.4,730 436.7,730 437.9,712.6 439,695.3 440,677.9 440.8,660.6 441.5,643.2 442.2,625.9 442.7,608.5 443,591.2 443.3,573.8 443.4,556.5 443.5,539.1 443.4,521.7 443.2,504.4 442.9,487 442.4,469.7 441.8,452.3 441.1,435 440.3,417.6 439.4,400.3 438.3,382.9 437.1,365.5 435.8,348.2 434.4,330.8 432.9,313.5 431.2,296.1 429.5,278.8 427.6,261.4 425.6,244.1 423.5,226.7 421.3,209.4 419,192Z"/></g>
<g fill="url(#gc17)"><path d="M425.6,192 427.9,209.4 430.1,226.7 432.2,244.1 434.1,261.4 435.9,278.8 437.6,296.1 439.1,313.5 440.6,330.8 441.9,348.2 443.1,365.5 444.2,382.9 445.1,400.3 446,417.6 446.8,435 447.4,452.3 447.9,469.7 448.4,487 448.7,504.4 448.9,521.7 449,539.1 448.9,556.5 448.8,573.8 448.5,591.2 448.1,608.5 447.6,625.9 447,643.2 446.3,660.6 445.4,677.9 444.5,695.3 443.4,712.6 442.2,730 446.5,730 447.7,712.6 448.8,695.3 449.7,677.9 450.6,660.6 451.3,643.2 451.9,625.9 452.4,608.5 452.8,591.2 453.1,573.8 453.2,556.5 453.3,539.1 453.2,521.7 453,504.4 452.7,487 452.2,469.7 451.6,452.3 451,435 450.1,417.6 449.2,400.3 448.1,382.9 447,365.5 445.7,348.2 444.3,330.8 442.7,313.5 441.1,296.1 439.3,278.8 437.5,261.4 435.5,244.1 433.4,226.7 431.2,209.4 428.9,192Z"/>
<path d="M435.4,192 437.7,209.4 439.9,226.7 441.9,244.1 443.8,261.4 445.6,278.8 447.3,296.1 448.8,313.5 450.3,330.8 451.6,348.2 452.8,365.5 453.9,382.9 454.8,400.3 455.7,417.6 456.4,435 457.1,452.3 457.6,469.7 458,487 458.3,504.4 458.5,521.7 458.6,539.1 458.6,556.5 458.4,573.8 458.2,591.2 457.8,608.5 457.3,625.9 456.6,643.2 455.9,660.6 455.1,677.9 454.1,695.3 453,712.6 451.8,730 456.1,730 457.3,712.6 458.4,695.3 459.4,677.9 460.2,660.6 460.9,643.2 461.6,625.9 462.1,608.5 462.5,591.2 462.7,573.8 462.9,556.5 462.9,539.1 462.8,521.7 462.6,504.4 462.3,487 461.9,469.7 461.3,452.3 460.6,435 459.8,417.6 458.9,400.3 457.8,382.9 456.7,365.5 455.4,348.2 454,330.8 452.4,313.5 450.8,296.1 449.1,278.8 447.2,261.4 445.2,244.1 443.1,226.7 441,209.4 438.7,192Z"/></g>
<g fill="url(#gc18)"><path d="M445.1,192 447.3,209.4 449.5,226.7 451.5,244.1 453.4,261.4 455.2,278.8 456.9,296.1 458.4,313.5 459.9,330.8 461.2,348.2 462.4,365.5 463.4,382.9 464.4,400.3 465.3,417.6 466,435 466.6,452.3 467.1,469.7 467.6,487 467.9,504.4 468.1,521.7 468.1,539.1 468.1,556.5 467.9,573.8 467.7,591.2 467.3,608.5 466.8,625.9 466.2,643.2 465.4,660.6 464.6,677.9 463.6,695.3 462.5,712.6 461.3,730 465.6,730 466.8,712.6 467.9,695.3 468.9,677.9 469.7,660.6 470.5,643.2 471.1,625.9 471.6,608.5 472,591.2 472.2,573.8 472.4,556.5 472.4,539.1 472.4,521.7 472.2,504.4 471.9,487 471.4,469.7 470.9,452.3 470.2,435 469.4,417.6 468.4,400.3 467.4,382.9 466.2,365.5 465,348.2 463.6,330.8 462,313.5 460.4,296.1 458.7,278.8 456.8,261.4 454.9,244.1 452.8,226.7 450.6,209.4 448.3,192Z"/>
<path d="M454.6,192 456.9,209.4 459,226.7 461,244.1 462.9,261.4 464.7,278.8 466.4,296.1 467.9,313.5 469.3,330.8 470.6,348.2 471.8,365.5 472.9,382.9 473.8,400.3 474.7,417.6 475.4,435 476,452.3 476.6,469.7 477,487 477.3,504.4 477.5,521.7 477.5,539.1 477.5,556.5 477.3,573.8 477.1,591.2 476.7,608.5 476.2,625.9 475.6,643.2 474.8,660.6 474,677.9 473,695.3 471.9,712.6 470.7,730 475,730 476.2,712.6 477.3,695.3 478.3,677.9 479.1,660.6 479.9,643.2 480.5,625.9 481,608.5 481.4,591.2 481.6,573.8 481.8,556.5 481.8,539.1 481.8,521.7 481.6,504.4 481.3,487 480.8,469.7 480.3,452.3 479.6,435 478.8,417.6 477.9,400.3 476.8,382.9 475.7,365.5 474.4,348.2 473,330.8 471.5,313.5 469.9,296.1 468.2,278.8 466.3,261.4 464.4,244.1 462.3,226.7 460.1,209.4 457.8,192Z"/>
<path d="M464,192 466.3,209.4 468.4,226.7 470.4,244.1 472.3,261.4 474.1,278.8 475.7,296.1 477.2,313.5 478.7,330.8 479.9,348.2 481.1,365.5 482.2,382.9 483.1,400.3 484,417.6 484.7,435 485.3,452.3 485.9,469.7 486.3,487 486.6,504.4 486.8,521.7 486.8,539.1 486.8,556.5 486.6,573.8 486.3,591.2 486,608.5 485.5,625.9 484.8,643.2 484.1,660.6 483.2,677.9 482.3,695.3 481.2,712.6 480,730 484.3,730 485.5,712.6 486.6,695.3 487.5,677.9 488.4,660.6 489.1,643.2 489.8,625.9 490.3,608.5 490.6,591.2 490.9,573.8 491.1,556.5 491.1,539.1 491.1,521.7 490.9,504.4 490.6,487 490.1,469.7 489.6,452.3 488.9,435 488.1,417.6 487.2,400.3 486.2,382.9 485,365.5 483.7,348.2 482.3,330.8 480.8,313.5 479.2,296.1 477.5,278.8 475.7,261.4 473.7,244.1 471.7,226.7 469.5,209.4 467.2,192Z"/></g>
<g fill="url(#gc19)"><path d="M473.3,192 475.5,209.4 477.6,226.7 479.6,244.1 481.5,261.4 483.3,278.8 484.9,296.1 486.5,313.5 487.9,330.8 489.2,348.2 490.3,365.5 491.4,382.9 492.3,400.3 493.2,417.6 493.9,435 494.5,452.3 495,469.7 495.4,487 495.7,504.4 495.9,521.7 496,539.1 495.9,556.5 495.8,573.8 495.5,591.2 495.3,600 495.1,611.4 495.1,622.9 495.2,634.3 495.2,645.7 495.1,657.1 494.9,668.6 494.4,680 494.4,680 495.1,668.6 496,657.1 496.9,645.7 497.8,634.3 498.6,622.9 499.2,611.4 499.6,600 499.8,591.2 500.1,573.8 500.2,556.5 500.3,539.1 500.2,521.7 500,504.4 499.7,487 499.3,469.7 498.8,452.3 498.1,435 497.3,417.6 496.4,400.3 495.4,382.9 494.2,365.5 492.9,348.2 491.6,330.8 490.1,313.5 488.5,296.1 486.7,278.8 484.9,261.4 483,244.1 480.9,226.7 478.8,209.4 476.5,192Z"/>
<path d="M482.4,192 484.7,209.4 486.8,226.7 488.8,244.1 490.6,261.4 492.4,278.8 494,296.1 495.5,313.5 496.9,330.8 498.2,348.2 499.4,365.5 500.5,382.9 501.4,400.3 502.2,417.6 502.9,435 503.6,452.3 504.1,469.7 504.5,487 504.8,504.4 504.9,521.7 505,540 505.1,551.4 505.3,562.9 505.6,574.3 505.9,585.7 506.1,597.1 506.2,608.6 506,620 506,620 506.4,608.6 507,597.1 507.6,585.7 508.2,574.3 508.8,562.9 509.2,551.4 509.3,540 509.2,521.7 509.1,504.4 508.8,487 508.3,469.7 507.8,452.3 507.1,435 506.3,417.6 505.4,400.3 504.4,382.9 503.3,365.5 502,348.2 500.6,330.8 499.2,313.5 497.6,296.1 495.8,278.8 494,261.4 492.1,244.1 490.1,226.7 487.9,209.4 485.7,192Z" fill-opacity="0.8"/>
<path d="M491.4,192 493.7,209.4 495.8,226.7 497.8,244.1 499.6,261.4 501.4,278.8 503,296.1 504.5,313.5 505.9,330.8 507.2,348.2 508.3,365.5 509.4,382.9 510.3,400.3 511.2,417.6 511.9,435 512.2,445 512.7,456.4 513.4,467.9 514.1,479.3 514.8,490.7 515.4,502.1 515.8,513.6 516,525 516,525 516,513.6 516.2,502.1 516.4,490.7 516.7,479.3 516.8,467.9 516.7,456.4 516.5,445 516.1,435 515.3,417.6 514.4,400.3 513.4,382.9 512.2,365.5 511,348.2 509.6,330.8 508.1,313.5 506.5,296.1 504.8,278.8 503,261.4 501.1,244.1 499.1,226.7 496.9,209.4 494.7,192Z" fill-opacity="0.5"/></g>
<g fill="none" stroke="#ff9c38" stroke-opacity="0.55" stroke-width="1.5"><path d="M492.8,670 492.4,678.6 491.9,687.1 491.4,695.7 490.9,704.3 490.3,712.9 489.7,721.4 489.1,730"/>
<path d="M497.1,670 496.7,678.6 496.2,687.1 495.7,695.7 495.2,704.3 494.6,712.9 494,721.4 493.4,730"/>
<path d="M504.1,610 503.6,627.1 503,644.3 502.2,661.4 501.4,678.6 500.4,695.7 499.3,712.9 498.2,730"/>
<path d="M508.4,610 507.9,627.1 507.3,644.3 506.5,661.4 505.7,678.6 504.7,695.7 503.6,712.9 502.5,730"/>
<path d="M513.8,515 513.9,545.7 513.7,576.4 513.1,607.1 512.1,637.9 510.8,668.6 509.1,699.3 507.1,730"/>
<path d="M518.1,515 518.2,545.7 518,576.4 517.4,607.1 516.4,637.9 515.1,668.6 513.4,699.3 511.4,730"/></g>
<g mask="url(#hm)" fill="#ffe640" fill-opacity="0.6"><path d="M-0.8,348.2 0.5,365.5 1.4,382.9 2.1,400.3 3,417.6 3.9,435 4.8,452.3 5.5,469.7 6.2,487 7.2,504.4 8.1,521.7 8.8,539.1 8.9,556.5 8.9,556.5 8.9,539.1 9.1,521.7 9.3,504.4 9.2,487 8.7,469.7 7.9,452.3 7,435 6,417.6 4.6,400.3 2.8,382.9 0.9,365.5 -0.8,348.2Z"/>
<path d="M3,348.2 4.4,365.5 5.4,382.9 6.2,400.3 7.1,417.6 8.1,435 9,452.3 9.8,469.7 10.5,487 11.5,504.4 12.4,521.7 13.1,539.1 13.2,556.5 13.2,556.5 13.2,539.1 13.4,521.7 13.6,504.4 13.5,487 12.9,469.7 12.2,452.3 11.2,435 10.1,417.6 8.6,400.3 6.8,382.9 4.8,365.5 3,348.2Z"/>
<path d="M19.3,348.2 20.4,365.5 21.3,382.9 22,400.3 22.9,417.6 23.9,435 24.8,452.3 25.5,469.7 26.1,487 26.9,504.4 27.9,521.7 28.6,539.1 28.9,556.5 28.9,556.5 29,539.1 29.3,521.7 29.5,504.4 29.3,487 28.7,469.7 27.9,452.3 27.1,435 26.1,417.6 24.8,400.3 23,382.9 21.1,365.5 19.3,348.2Z"/>
<path d="M23,348.2 24.3,365.5 25.2,382.9 26,400.3 27.1,417.6 28.1,435 29,452.3 29.8,469.7 30.4,487 31.2,504.4 32.2,521.7 32.9,539.1 33.2,556.5 33.2,556.5 33.3,539.1 33.6,521.7 33.8,504.4 33.6,487 33,469.7 32.2,452.3 31.3,435 30.2,417.6 28.8,400.3 27,382.9 25,365.5 23.1,348.2Z"/>
<path d="M36.7,330.8 38.3,348.2 39.4,365.5 40.2,382.9 40.9,400.3 41.9,417.6 42.9,435 43.7,452.3 44.5,469.7 45.1,487 45.7,504.4 46.6,521.7 47.4,539.1 47.8,556.5 47.9,556.5 48.1,539.1 48.5,521.7 48.6,504.4 48.3,487 47.7,469.7 47,452.3 46.1,435 45.1,417.6 43.9,400.3 42.3,382.9 40.3,365.5 38.4,348.2 36.7,330.8Z"/>
<path d="M40.4,330.8 42.1,348.2 43.2,365.5 44.1,382.9 45,400.3 46,417.6 47.1,435 48,452.3 48.7,469.7 49.4,487 50,504.4 50.9,521.7 51.7,539.1 52.1,556.5 52.2,556.5 52.4,539.1 52.8,521.7 52.9,504.4 52.6,487 52,469.7 51.2,452.3 50.3,435 49.3,417.6 48,400.3 46.2,382.9 44.2,365.5 42.2,348.2 40.4,330.8Z"/>
<path d="M56.2,330.8 57.7,348.2 58.7,365.5 59.4,382.9 60.3,400.3 61.3,417.6 62.3,435 63.1,452.3 63.8,469.7 64.4,487 65,504.4 65.7,521.7 66.5,539.1 67.1,556.5 67.1,573.8 67.1,573.8 67.3,556.5 67.7,539.1 68.1,521.7 68.1,504.4 67.7,487 67.1,469.7 66.4,452.3 65.6,435 64.6,417.6 63.4,400.3 61.9,382.9 60,365.5 58,348.2 56.2,330.8Z"/>
<path d="M59.9,330.8 61.5,348.2 62.5,365.5 63.4,382.9 64.3,400.3 65.4,417.6 66.5,435 67.4,452.3 68.1,469.7 68.7,487 69.3,504.4 70,521.7 70.8,539.1 71.4,556.5 71.4,573.8 71.4,573.8 71.6,556.5 72,539.1 72.4,521.7 72.4,504.4 72,487 71.4,469.7 70.6,452.3 69.7,435 68.7,417.6 67.5,400.3 65.9,382.9 63.8,365.5 61.8,348.2 59.9,330.8Z"/>
<path d="M74.8,330.8 76.1,348.2 77,365.5 77.8,382.9 78.8,400.3 79.8,417.6 80.8,435 81.6,452.3 82.3,469.7 82.9,487 83.4,504.4 83.9,521.7 84.7,539.1 85.4,556.5 85.6,573.8 85.6,573.8 85.9,556.5 86.4,539.1 86.8,521.7 86.7,504.4 86.2,487 85.6,469.7 84.9,452.3 84.1,435 83.1,417.6 82,400.3 80.6,382.9 78.7,365.5 76.7,348.2 74.8,330.8Z"/>
<path d="M78.5,330.8 79.9,348.2 80.9,365.5 81.8,382.9 82.8,400.3 83.9,417.6 85,435 85.8,452.3 86.6,469.7 87.2,487 87.7,504.4 88.2,521.7 89,539.1 89.7,556.5 89.9,573.8 89.9,573.8 90.2,556.5 90.7,539.1 91.1,521.7 91,504.4 90.5,487 89.9,469.7 89.2,452.3 88.3,435 87.3,417.6 86.1,400.3 84.6,382.9 82.6,365.5 80.5,348.2 78.5,330.8Z"/>
<path d="M92.9,330.8 94.1,348.2 94.9,365.5 95.7,382.9 96.8,400.3 97.8,417.6 98.8,435 99.6,452.3 100.3,469.7 100.8,487 101.3,504.4 101.8,521.7 102.5,539.1 103.2,556.5 103.5,573.8 103.6,573.8 104,556.5 104.6,539.1 104.9,521.7 104.7,504.4 104.2,487 103.7,469.7 103,452.3 102.1,435 101.2,417.6 100.1,400.3 98.7,382.9 96.9,365.5 94.9,348.2 92.9,330.8Z"/>
<path d="M96.6,330.8 97.9,348.2 98.8,365.5 99.7,382.9 100.8,400.3 101.9,417.6 102.9,435 103.8,452.3 104.5,469.7 105.1,487 105.6,504.4 106.1,521.7 106.8,539.1 107.5,556.5 107.8,573.8 107.9,573.8 108.3,556.5 108.9,539.1 109.2,521.7 109,504.4 108.5,487 107.9,469.7 107.2,452.3 106.3,435 105.3,417.6 104.2,400.3 102.7,382.9 100.8,365.5 98.7,348.2 96.6,330.8Z"/>
<path d="M108.3,313.5 109.9,330.8 111,348.2 111.8,365.5 112.7,382.9 113.7,400.3 114.8,417.6 115.7,435 116.5,452.3 117.2,469.7 117.8,487 118.3,504.4 118.7,521.7 119.2,539.1 119.9,556.5 120.4,573.8 120.3,591.2 120.3,591.2 120.6,573.8 121.2,556.5 121.8,539.1 121.9,521.7 121.7,504.4 121.2,487 120.7,469.7 120,452.3 119.2,435 118.2,417.6 117.2,400.3 115.9,382.9 114.1,365.5 112.1,348.2 110.1,330.8 108.3,313.5Z"/>
<path d="M111.9,313.5 113.6,330.8 114.8,348.2 115.7,365.5 116.7,382.9 117.8,400.3 118.9,417.6 119.9,435 120.8,452.3 121.5,469.7 122.1,487 122.6,504.4 123,521.7 123.5,539.1 124.2,556.5 124.7,573.8 124.6,591.2 124.6,591.2 124.9,573.8 125.5,556.5 126.1,539.1 126.2,521.7 126,504.4 125.5,487 124.9,469.7 124.2,452.3 123.4,435 122.4,417.6 121.2,400.3 119.8,382.9 118,365.5 115.9,348.2 113.8,330.8 111.9,313.5Z"/>
<path d="M124.4,313.5 125.9,330.8 126.9,348.2 127.7,365.5 128.7,382.9 129.8,400.3 130.8,417.6 131.7,435 132.5,452.3 133.2,469.7 133.8,487 134.2,504.4 134.6,521.7 135,539.1 135.7,556.5 136.2,573.8 136.3,591.2 136.3,591.2 136.7,573.8 137.4,556.5 137.9,539.1 138,521.7 137.7,504.4 137.2,487 136.7,469.7 136,452.3 135.2,435 134.3,417.6 133.2,400.3 132,382.9 130.4,365.5 128.3,348.2 126.2,330.8 124.4,313.5Z"/>
<path d="M128,313.5 129.6,330.8 130.7,348.2 131.6,365.5 132.6,382.9 133.8,400.3 134.9,417.6 135.9,435 136.8,452.3 137.5,469.7 138.1,487 138.5,504.4 138.9,521.7 139.3,539.1 140,556.5 140.5,573.8 140.6,591.2 140.6,591.2 141,573.8 141.7,556.5 142.2,539.1 142.3,521.7 142,504.4 141.5,487 141,469.7 140.2,452.3 139.4,435 138.4,417.6 137.3,400.3 135.9,382.9 134.2,365.5 132.1,348.2 129.9,330.8 128,313.5Z"/>
<path d="M141.5,313.5 142.9,330.8 143.8,348.2 144.6,365.5 145.7,382.9 146.8,400.3 147.8,417.6 148.7,435 149.5,452.3 150.2,469.7 150.7,487 151.2,504.4 151.5,521.7 151.8,539.1 152.4,556.5 153,573.8 153.2,591.2 153.2,591.2 153.8,573.8 154.6,556.5 155,539.1 155,521.7 154.7,504.4 154.3,487 153.7,469.7 153,452.3 152.2,435 151.3,417.6 150.3,400.3 149.1,382.9 147.5,365.5 145.5,348.2 143.4,330.8 141.5,313.5Z"/>
<path d="M145.1,313.5 146.6,330.8 147.6,348.2 148.5,365.5 149.6,382.9 150.8,400.3 151.9,417.6 152.9,435 153.7,452.3 154.5,469.7 155,487 155.5,504.4 155.8,521.7 156.1,539.1 156.7,556.5 157.3,573.8 157.5,591.2 157.5,591.2 158.1,573.8 158.9,556.5 159.3,539.1 159.3,521.7 159,504.4 158.5,487 158,469.7 157.3,452.3 156.4,435 155.4,417.6 154.3,400.3 153,382.9 151.4,365.5 149.3,348.2 147.1,330.8 145.1,313.5Z"/>
<path d="M157.7,313.5 159,330.8 159.9,348.2 160.8,365.5 161.8,382.9 163,400.3 164,417.6 164.9,435 165.7,452.3 166.4,469.7 166.9,487 167.3,504.4 167.6,521.7 167.9,539.1 168.3,556.5 168.9,573.8 169.3,591.2 169,608.5 169,608.5 169.5,591.2 170.2,573.8 171,556.5 171.3,539.1 171.2,521.7 170.9,504.4 170.5,487 169.9,469.7 169.2,452.3 168.5,435 167.6,417.6 166.5,400.3 165.4,382.9 163.9,365.5 162,348.2 159.8,330.8 157.8,313.5Z"/>
<path d="M161.3,313.5 162.7,330.8 163.7,348.2 164.7,365.5 165.8,382.9 167,400.3 168.1,417.6 169.1,435 169.9,452.3 170.6,469.7 171.2,487 171.6,504.4 171.9,521.7 172.2,539.1 172.6,556.5 173.2,573.8 173.6,591.2 173.3,608.5 173.3,608.5 173.8,591.2 174.5,573.8 175.3,556.5 175.6,539.1 175.5,521.7 175.2,504.4 174.8,487 174.2,469.7 173.5,452.3 172.7,435 171.7,417.6 170.6,400.3 169.3,382.9 167.8,365.5 165.8,348.2 163.5,330.8 161.4,313.5Z"/>
<path d="M171.6,296.1 173.3,313.5 174.5,330.8 175.3,348.2 176.2,365.5 177.3,382.9 178.5,400.3 179.5,417.6 180.4,435 181.2,452.3 181.8,469.7 182.4,487 182.8,504.4 183.1,521.7 183.3,539.1 183.6,556.5 184.2,573.8 184.6,591.2 184.5,608.5 184.5,608.5 185,591.2 185.9,573.8 186.6,556.5 186.8,539.1 186.7,521.7 186.4,504.4 186,487 185.4,469.7 184.8,452.3 184,435 183.1,417.6 182.1,400.3 180.9,382.9 179.5,365.5 177.7,348.2 175.5,330.8 173.4,313.5 171.6,296.1Z"/>
<path d="M175.1,296.1 176.9,313.5 178.1,330.8 179.1,348.2 180.1,365.5 181.3,382.9 182.5,400.3 183.6,417.6 184.6,435 185.4,452.3 186.1,469.7 186.7,487 187.1,504.4 187.4,521.7 187.6,539.1 187.9,556.5 188.5,573.8 188.9,591.2 188.8,608.5 188.8,608.5 189.3,591.2 190.2,573.8 190.9,556.5 191.1,539.1 191,521.7 190.7,504.4 190.3,487 189.7,469.7 189,452.3 188.2,435 187.2,417.6 186.1,400.3 184.9,382.9 183.4,365.5 181.5,348.2 179.2,330.8 177,313.5 175.1,296.1Z"/>
<path d="M185.7,296.1 187.3,313.5 188.4,330.8 189.2,348.2 190.2,365.5 191.4,382.9 192.5,400.3 193.5,417.6 194.4,435 195.1,452.3 195.8,469.7 196.3,487 196.7,504.4 197,521.7 197.2,539.1 197.5,556.5 197.9,573.8 198.4,591.2 198.4,608.5 198.4,608.5 199.1,591.2 200.1,573.8 200.7,556.5 200.8,539.1 200.7,521.7 200.4,504.4 200,487 199.4,469.7 198.8,452.3 198,435 197.1,417.6 196.1,400.3 195,382.9 193.6,365.5 191.9,348.2 189.7,330.8 187.5,313.5 185.7,296.1Z"/>
<path d="M189.2,296.1 190.9,313.5 192.1,330.8 193,348.2 194.1,365.5 195.3,382.9 196.5,400.3 197.6,417.6 198.6,435 199.4,452.3 200.1,469.7 200.6,487 201,504.4 201.3,521.7 201.5,539.1 201.8,556.5 202.2,573.8 202.7,591.2 202.7,608.5 202.7,608.5 203.4,591.2 204.4,573.8 205,556.5 205.1,539.1 205,521.7 204.7,504.4 204.3,487 203.7,469.7 203,452.3 202.2,435 201.3,417.6 200.2,400.3 199,382.9 197.5,365.5 195.7,348.2 193.4,330.8 191.2,313.5 189.2,296.1Z"/>
<path d="M201.3,296.1 202.8,313.5 203.8,330.8 204.6,348.2 205.7,365.5 206.9,382.9 208,400.3 209,417.6 209.9,435 210.6,452.3 211.3,469.7 211.8,487 212.2,504.4 212.5,521.7 212.7,539.1 212.8,556.5 213.1,573.8 213.7,591.2 213.8,608.5 213.4,625.9 213.4,625.9 214,608.5 214.8,591.2 215.8,573.8 216.2,556.5 216.3,539.1 216.2,521.7 215.9,504.4 215.5,487 215,469.7 214.3,452.3 213.6,435 212.7,417.6 211.7,400.3 210.6,382.9 209.2,365.5 207.6,348.2 205.4,330.8 203.2,313.5 201.3,296.1Z"/>
<path d="M204.8,296.1 206.4,313.5 207.5,330.8 208.4,348.2 209.6,365.5 210.8,382.9 212,400.3 213.1,417.6 214.1,435 214.9,452.3 215.5,469.7 216.1,487 216.5,504.4 216.8,521.7 217,539.1 217.1,556.5 217.4,573.8 218,591.2 218.1,608.5 217.7,625.9 217.7,625.9 218.3,608.5 219.1,591.2 220.1,573.8 220.5,556.5 220.6,539.1 220.5,521.7 220.2,504.4 219.8,487 219.2,469.7 218.6,452.3 217.7,435 216.8,417.6 215.7,400.3 214.5,382.9 213.1,365.5 211.4,348.2 209.1,330.8 206.8,313.5 204.8,296.1Z"/>
<path d="M215.8,296.1 217.2,313.5 218.2,330.8 219.1,348.2 220.2,365.5 221.4,382.9 222.5,400.3 223.5,417.6 224.4,435 225.1,452.3 225.7,469.7 226.3,487 226.7,504.4 226.9,521.7 227.1,539.1 227.2,556.5 227.4,573.8 227.9,591.2 228.2,608.5 227.9,625.9 227.9,625.9 228.5,608.5 229.5,591.2 230.4,573.8 230.8,556.5 230.8,539.1 230.7,521.7 230.4,504.4 230,487 229.5,469.7 228.8,452.3 228.1,435 227.2,417.6 226.2,400.3 225.1,382.9 223.8,365.5 222.2,348.2 220.2,330.8 217.9,313.5 215.8,296.1Z"/>
<path d="M219.4,296.1 220.9,313.5 221.9,330.8 222.9,348.2 224.1,365.5 225.4,382.9 226.5,400.3 227.6,417.6 228.5,435 229.3,452.3 230,469.7 230.6,487 231,504.4 231.2,521.7 231.4,539.1 231.5,556.5 231.7,573.8 232.2,591.2 232.5,608.5 232.2,625.9 232.2,625.9 232.8,608.5 233.8,591.2 234.7,573.8 235.1,556.5 235.1,539.1 235,521.7 234.7,504.4 234.3,487 233.7,469.7 233.1,452.3 232.3,435 231.3,417.6 230.3,400.3 229.1,382.9 227.7,365.5 226,348.2 223.9,330.8 221.5,313.5 219.4,296.1Z"/>
<path d="M229.9,296.1 231.2,313.5 232.1,330.8 233.1,348.2 234.2,365.5 235.4,382.9 236.5,400.3 237.5,417.6 238.3,435 239.1,452.3 239.7,469.7 240.2,487 240.6,504.4 240.9,521.7 241.1,539.1 241.1,556.5 241.3,573.8 241.7,591.2 242,608.5 241.8,625.9 241.8,625.9 242.6,608.5 243.6,591.2 244.5,573.8 244.8,556.5 244.8,539.1 244.7,521.7 244.4,504.4 244,487 243.5,469.7 242.9,452.3 242.1,435 241.2,417.6 240.3,400.3 239.2,382.9 237.9,365.5 236.3,348.2 234.4,330.8 232.1,313.5 230,296.1Z"/>
<path d="M233.4,296.1 234.8,313.5 235.8,330.8 236.9,348.2 238.1,365.5 239.4,382.9 240.5,400.3 241.6,417.6 242.5,435 243.3,452.3 244,469.7 244.5,487 244.9,504.4 245.2,521.7 245.4,539.1 245.4,556.5 245.6,573.8 246,591.2 246.3,608.5 246.1,625.9 246.1,625.9 246.9,608.5 247.9,591.2 248.8,573.8 249.1,556.5 249.1,539.1 249,521.7 248.7,504.4 248.3,487 247.8,469.7 247.1,452.3 246.3,435 245.4,417.6 244.3,400.3 243.1,382.9 241.8,365.5 240.1,348.2 238.1,330.8 235.7,313.5 233.5,296.1Z"/>
<path d="M242.2,278.8 243.9,296.1 245.1,313.5 246,330.8 247,348.2 248.2,365.5 249.4,382.9 250.5,400.3 251.5,417.6 252.3,435 253.1,452.3 253.7,469.7 254.2,487 254.6,504.4 254.9,521.7 255,539.1 255,556.5 255.1,573.8 255.4,591.2 255.8,608.5 255.8,625.9 255.8,625.9 256.7,608.5 257.8,591.2 258.5,573.8 258.8,556.5 258.8,539.1 258.7,521.7 258.4,504.4 258,487 257.5,469.7 256.9,452.3 256.1,435 255.3,417.6 254.3,400.3 253.2,382.9 252,365.5 250.5,348.2 248.6,330.8 246.3,313.5 244.1,296.1 242.2,278.8Z"/>
<path d="M245.6,278.8 247.5,296.1 248.8,313.5 249.7,330.8 250.8,348.2 252.1,365.5 253.4,382.9 254.6,400.3 255.6,417.6 256.5,435 257.3,452.3 258,469.7 258.5,487 258.9,504.4 259.2,521.7 259.3,539.1 259.3,556.5 259.4,573.8 259.7,591.2 260.1,608.5 260.1,625.9 260.1,625.9 261,608.5 262.1,591.2 262.8,573.8 263.1,556.5 263.1,539.1 263,521.7 262.7,504.4 262.3,487 261.8,469.7 261.1,452.3 260.3,435 259.4,417.6 258.4,400.3 257.2,382.9 255.9,365.5 254.3,348.2 252.3,330.8 249.9,313.5 247.6,296.1 245.6,278.8Z"/>
<path d="M256.4,278.8 258.1,296.1 259.2,313.5 260,330.8 261.1,348.2 262.3,365.5 263.5,382.9 264.6,400.3 265.6,417.6 266.4,435 267.2,452.3 267.8,469.7 268.3,487 268.7,504.4 268.9,521.7 269.1,539.1 269.1,556.5 269.1,573.8 269.2,591.2 269.7,608.5 269.8,625.9 269.2,643.2 269.2,643.2 269.9,625.9 271,608.5 272.1,591.2 272.7,573.8 272.9,556.5 272.9,539.1 272.8,521.7 272.5,504.4 272.1,487 271.6,469.7 271,452.3 270.3,435 269.4,417.6 268.5,400.3 267.4,382.9 266.2,365.5 264.7,348.2 262.9,330.8 260.6,313.5 258.3,296.1 256.4,278.8Z"/>
<path d="M259.8,278.8 261.6,296.1 262.8,313.5 263.7,330.8 264.9,348.2 266.2,365.5 267.5,382.9 268.7,400.3 269.7,417.6 270.6,435 271.4,452.3 272,469.7 272.6,487 273,504.4 273.2,521.7 273.4,539.1 273.4,556.5 273.4,573.8 273.5,591.2 274,608.5 274.1,625.9 273.5,643.2 273.5,643.2 274.2,625.9 275.3,608.5 276.4,591.2 277,573.8 277.2,556.5 277.2,539.1 277.1,521.7 276.8,504.4 276.4,487 275.9,469.7 275.2,452.3 274.4,435 273.5,417.6 272.5,400.3 271.3,382.9 270,365.5 268.5,348.2 266.6,330.8 264.2,313.5 261.9,296.1 259.8,278.8Z"/>
<path d="M270.6,278.8 272.1,296.1 273.2,313.5 274.1,330.8 275.2,348.2 276.4,365.5 277.6,382.9 278.7,400.3 279.7,417.6 280.5,435 281.2,452.3 281.8,469.7 282.3,487 282.7,504.4 283,521.7 283.1,539.1 283.1,556.5 283.1,573.8 283.2,591.2 283.5,608.5 283.7,625.9 283.3,643.2 283.3,643.2 284.1,625.9 285.3,608.5 286.3,591.2 286.8,573.8 287,556.5 287,539.1 286.9,521.7 286.6,504.4 286.2,487 285.7,469.7 285.1,452.3 284.4,435 283.6,417.6 282.6,400.3 281.5,382.9 280.3,365.5 278.9,348.2 277.2,330.8 274.9,313.5 272.6,296.1 270.6,278.8Z"/>
<path d="M274,278.8 275.7,296.1 276.8,313.5 277.8,330.8 279,348.2 280.3,365.5 281.6,382.9 282.8,400.3 283.8,417.6 284.7,435 285.5,452.3 286.1,469.7 286.6,487 287,504.4 287.3,521.7 287.4,539.1 287.4,556.5 287.4,573.8 287.5,591.2 287.8,608.5 288,625.9 287.6,643.2 287.6,643.2 288.4,625.9 289.6,608.5 290.6,591.2 291.1,573.8 291.3,556.5 291.3,539.1 291.2,521.7 290.9,504.4 290.5,487 290,469.7 289.4,452.3 288.6,435 287.7,417.6 286.6,400.3 285.5,382.9 284.2,365.5 282.7,348.2 280.9,330.8 278.6,313.5 276.1,296.1 274,278.8Z"/>
<path d="M283.2,278.8 284.7,296.1 285.7,313.5 286.7,330.8 287.8,348.2 289.1,365.5 290.3,382.9 291.3,400.3 292.3,417.6 293.1,435 293.8,452.3 294.4,469.7 294.9,487 295.3,504.4 295.5,521.7 295.7,539.1 295.7,556.5 295.6,573.8 295.6,591.2 295.9,608.5 296.1,625.9 295.9,643.2 295.9,643.2 296.8,625.9 298,608.5 299,591.2 299.5,573.8 299.6,556.5 299.6,539.1 299.5,521.7 299.2,504.4 298.8,487 298.3,469.7 297.7,452.3 297,435 296.2,417.6 295.2,400.3 294.2,382.9 293,365.5 291.6,348.2 289.9,330.8 287.8,313.5 285.4,296.1 283.3,278.8Z"/>
<path d="M286.7,278.8 288.2,296.1 289.3,313.5 290.4,330.8 291.6,348.2 292.9,365.5 294.2,382.9 295.4,400.3 296.4,417.6 297.3,435 298.1,452.3 298.7,469.7 299.2,487 299.6,504.4 299.8,521.7 300,539.1 300,556.5 299.9,573.8 299.9,591.2 300.2,608.5 300.4,625.9 300.2,643.2 300.2,643.2 301.1,625.9 302.3,608.5 303.3,591.2 303.8,573.8 303.9,556.5 303.9,539.1 303.8,521.7 303.5,504.4 303.1,487 302.6,469.7 302,452.3 301.2,435 300.3,417.6 299.3,400.3 298.1,382.9 296.9,365.5 295.4,348.2 293.6,330.8 291.4,313.5 288.9,296.1 286.7,278.8Z"/>
<path d="M295.8,278.8 297.2,296.1 298.1,313.5 299.1,330.8 300.3,348.2 301.6,365.5 302.8,382.9 303.8,400.3 304.8,417.6 305.6,435 306.3,452.3 306.9,469.7 307.4,487 307.8,504.4 308,521.7 308.1,539.1 308.1,556.5 308,573.8 308,591.2 308.1,608.5 308.4,625.9 308.3,643.2 308.3,643.2 309.4,625.9 310.7,608.5 311.5,591.2 312,573.8 312.1,556.5 312.1,539.1 311.9,521.7 311.7,504.4 311.3,487 310.8,469.7 310.2,452.3 309.5,435 308.7,417.6 307.8,400.3 306.7,382.9 305.5,365.5 304.2,348.2 302.5,330.8 300.5,313.5 298.1,296.1 295.9,278.8Z"/>
<path d="M299.3,278.8 300.7,296.1 301.7,313.5 302.8,330.8 304.1,348.2 305.5,365.5 306.7,382.9 307.9,400.3 308.9,417.6 309.8,435 310.5,452.3 311.2,469.7 311.7,487 312.1,504.4 312.3,521.7 312.4,539.1 312.4,556.5 312.3,573.8 312.3,591.2 312.4,608.5 312.7,625.9 312.6,643.2 312.6,643.2 313.7,625.9 315,608.5 315.8,591.2 316.3,573.8 316.4,556.5 316.4,539.1 316.2,521.7 316,504.4 315.6,487 315.1,469.7 314.5,452.3 313.7,435 312.8,417.6 311.8,400.3 310.7,382.9 309.4,365.5 308,348.2 306.2,330.8 304.1,313.5 301.6,296.1 299.3,278.8Z"/>
<path d="M306.3,261.4 308.2,278.8 309.4,296.1 310.3,313.5 311.4,330.8 312.6,348.2 313.9,365.5 315.1,382.9 316.1,400.3 317.1,417.6 317.9,435 318.6,452.3 319.2,469.7 319.7,487 320,504.4 320.3,521.7 320.4,539.1 320.4,556.5 320.3,573.8 320.2,591.2 320.2,608.5 320.5,625.9 320.5,643.2 319.9,660.6 319.9,660.6 320.7,643.2 321.9,625.9 323.1,608.5 323.9,591.2 324.3,573.8 324.4,556.5 324.4,539.1 324.2,521.7 324,504.4 323.6,487 323.2,469.7 322.6,452.3 321.9,435 321,417.6 320.1,400.3 319.1,382.9 317.9,365.5 316.6,348.2 315,330.8 313,313.5 310.6,296.1 308.3,278.8 306.3,261.4Z"/>
<path d="M309.7,261.4 311.6,278.8 313,296.1 313.9,313.5 315.1,330.8 316.4,348.2 317.8,365.5 319,382.9 320.2,400.3 321.2,417.6 322.1,435 322.8,452.3 323.5,469.7 324,487 324.3,504.4 324.6,521.7 324.7,539.1 324.7,556.5 324.6,573.8 324.5,591.2 324.5,608.5 324.8,625.9 324.8,643.2 324.2,660.6 324.2,660.6 325,643.2 326.2,625.9 327.4,608.5 328.2,591.2 328.6,573.8 328.7,556.5 328.7,539.1 328.5,521.7 328.3,504.4 327.9,487 327.4,469.7 326.8,452.3 326.1,435 325.2,417.6 324.2,400.3 323,382.9 321.8,365.5 320.4,348.2 318.7,330.8 316.6,313.5 314.1,296.1 311.7,278.8 309.7,261.4Z"/>
<path d="M317.7,261.4 319.5,278.8 320.7,296.1 321.6,313.5 322.7,330.8 323.9,348.2 325.2,365.5 326.4,382.9 327.4,400.3 328.4,417.6 329.2,435 329.9,452.3 330.5,469.7 330.9,487 331.3,504.4 331.5,521.7 331.7,539.1 331.7,556.5 331.5,573.8 331.4,591.2 331.4,608.5 331.6,625.9 331.7,643.2 331.1,660.6 331.1,660.6 332,643.2 333.3,625.9 334.5,608.5 335.2,591.2 335.5,573.8 335.7,556.5 335.7,539.1 335.5,521.7 335.3,504.4 334.9,487 334.5,469.7 333.9,452.3 333.2,435 332.4,417.6 331.4,400.3 330.4,382.9 329.2,365.5 328,348.2 326.4,330.8 324.5,313.5 322,296.1 319.7,278.8 317.7,261.4Z"/>
<path d="M321.1,261.4 322.9,278.8 324.2,296.1 325.2,313.5 326.4,330.8 327.7,348.2 329.1,365.5 330.4,382.9 331.5,400.3 332.5,417.6 333.4,435 334.1,452.3 334.7,469.7 335.2,487 335.6,504.4 335.8,521.7 336,539.1 336,556.5 335.8,573.8 335.7,591.2 335.7,608.5 335.9,625.9 336,643.2 335.4,660.6 335.4,660.6 336.3,643.2 337.6,625.9 338.8,608.5 339.5,591.2 339.8,573.8 340,556.5 340,539.1 339.8,521.7 339.6,504.4 339.2,487 338.7,469.7 338.1,452.3 337.4,435 336.5,417.6 335.5,400.3 334.4,382.9 333.1,365.5 331.7,348.2 330.1,330.8 328.1,313.5 325.6,296.1 323.1,278.8 321.1,261.4Z"/>
<path d="M329.6,261.4 331.3,278.8 332.4,296.1 333.4,313.5 334.5,330.8 335.8,348.2 337,365.5 338.2,382.9 339.2,400.3 340.2,417.6 341,435 341.7,452.3 342.2,469.7 342.7,487 343.1,504.4 343.3,521.7 343.4,539.1 343.4,556.5 343.3,573.8 343.1,591.2 343,608.5 343.1,625.9 343.3,643.2 342.9,660.6 342.9,660.6 343.9,643.2 345.3,625.9 346.4,608.5 347.1,591.2 347.3,573.8 347.5,556.5 347.5,539.1 347.3,521.7 347.1,504.4 346.7,487 346.3,469.7 345.7,452.3 345,435 344.2,417.6 343.3,400.3 342.2,382.9 341.1,365.5 339.8,348.2 338.3,330.8 336.4,313.5 334.1,296.1 331.6,278.8 329.6,261.4Z"/>
<path d="M333,261.4 334.7,278.8 335.9,296.1 337,313.5 338.2,330.8 339.6,348.2 340.9,365.5 342.2,382.9 343.3,400.3 344.3,417.6 345.2,435 345.9,452.3 346.5,469.7 347,487 347.4,504.4 347.6,521.7 347.7,539.1 347.7,556.5 347.6,573.8 347.4,591.2 347.3,608.5 347.4,625.9 347.6,643.2 347.2,660.6 347.2,660.6 348.2,643.2 349.6,625.9 350.7,608.5 351.4,591.2 351.6,573.8 351.8,556.5 351.8,539.1 351.6,521.7 351.4,504.4 351,487 350.6,469.7 349.9,452.3 349.2,435 348.3,417.6 347.3,400.3 346.2,382.9 345,365.5 343.6,348.2 342,330.8 340,313.5 337.6,296.1 335.1,278.8 333,261.4Z"/>
<path d="M341,261.4 342.6,278.8 343.7,296.1 344.6,313.5 345.8,330.8 347.1,348.2 348.4,365.5 349.5,382.9 350.5,400.3 351.5,417.6 352.3,435 352.9,452.3 353.5,469.7 354,487 354.3,504.4 354.6,521.7 354.7,539.1 354.7,556.5 354.5,573.8 354.3,591.2 354.2,608.5 354.2,625.9 354.4,643.2 354.1,660.6 354.2,660.6 355.3,643.2 356.7,625.9 357.7,608.5 358.4,591.2 358.6,573.8 358.7,556.5 358.8,539.1 358.6,521.7 358.4,504.4 358.1,487 357.6,469.7 357,452.3 356.3,435 355.5,417.6 354.6,400.3 353.6,382.9 352.4,365.5 351.2,348.2 349.7,330.8 347.8,313.5 345.6,296.1 343.1,278.8 341,261.4Z"/>
<path d="M344.3,261.4 346,278.8 347.2,296.1 348.2,313.5 349.5,330.8 350.9,348.2 352.2,365.5 353.5,382.9 354.6,400.3 355.6,417.6 356.4,435 357.2,452.3 357.8,469.7 358.3,487 358.6,504.4 358.9,521.7 359,539.1 359,556.5 358.8,573.8 358.6,591.2 358.5,608.5 358.5,625.9 358.7,643.2 358.4,660.6 358.5,660.6 359.6,643.2 361,625.9 362,608.5 362.7,591.2 362.9,573.8 363,556.5 363.1,539.1 362.9,521.7 362.7,504.4 362.4,487 361.9,469.7 361.3,452.3 360.5,435 359.7,417.6 358.7,400.3 357.5,382.9 356.3,365.5 355,348.2 353.4,330.8 351.4,313.5 349.1,296.1 346.5,278.8 344.3,261.4Z"/>
<path d="M352.2,261.4 353.7,278.8 354.7,296.1 355.7,313.5 356.9,330.8 358.2,348.2 359.5,365.5 360.6,382.9 361.6,400.3 362.6,417.6 363.4,435 364,452.3 364.6,469.7 365.1,487 365.4,504.4 365.6,521.7 365.7,539.1 365.7,556.5 365.6,573.8 365.4,591.2 365.2,608.5 365.1,625.9 365.3,643.2 365.2,660.6 364.4,677.9 364.4,677.9 365.3,660.6 366.5,643.2 368,625.9 368.9,608.5 369.5,591.2 369.7,573.8 369.8,556.5 369.8,539.1 369.7,521.7 369.5,504.4 369.2,487 368.7,469.7 368.1,452.3 367.5,435 366.7,417.6 365.7,400.3 364.7,382.9 363.6,365.5 362.3,348.2 360.9,330.8 359.1,313.5 356.9,296.1 354.4,278.8 352.2,261.4Z"/>
<path d="M355.5,261.4 357.1,278.8 358.2,296.1 359.3,313.5 360.6,330.8 362,348.2 363.4,365.5 364.6,382.9 365.7,400.3 366.7,417.6 367.5,435 368.3,452.3 368.9,469.7 369.4,487 369.7,504.4 369.9,521.7 370,539.1 370,556.5 369.9,573.8 369.7,591.2 369.5,608.5 369.4,625.9 369.6,643.2 369.5,660.6 368.7,677.9 368.7,677.9 369.6,660.6 370.8,643.2 372.3,625.9 373.2,608.5 373.8,591.2 374,573.8 374.1,556.5 374.1,539.1 374,521.7 373.8,504.4 373.5,487 373,469.7 372.4,452.3 371.6,435 370.8,417.6 369.8,400.3 368.7,382.9 367.5,365.5 366.1,348.2 364.6,330.8 362.7,313.5 360.4,296.1 357.8,278.8 355.5,261.4Z"/>
<path d="M362.3,261.4 363.8,278.8 364.7,296.1 365.8,313.5 367,330.8 368.3,348.2 369.6,365.5 370.7,382.9 371.8,400.3 372.7,417.6 373.4,435 374.1,452.3 374.7,469.7 375.1,487 375.5,504.4 375.7,521.7 375.8,539.1 375.8,556.5 375.7,573.8 375.4,591.2 375.2,608.5 375.1,625.9 375.2,643.2 375.2,660.6 374.4,677.9 374.4,677.9 375.4,660.6 376.8,643.2 378.2,625.9 379,608.5 379.5,591.2 379.8,573.8 379.9,556.5 379.9,539.1 379.8,521.7 379.6,504.4 379.3,487 378.8,469.7 378.2,452.3 377.6,435 376.8,417.6 375.9,400.3 374.9,382.9 373.7,365.5 372.5,348.2 371.1,330.8 369.3,313.5 367.1,296.1 364.6,278.8 362.3,261.4Z"/>
<path d="M365.7,261.4 367.2,278.8 368.2,296.1 369.4,313.5 370.7,330.8 372.1,348.2 373.5,365.5 374.7,382.9 375.8,400.3 376.8,417.6 377.6,435 378.4,452.3 379,469.7 379.4,487 379.8,504.4 380,521.7 380.1,539.1 380.1,556.5 380,573.8 379.7,591.2 379.5,608.5 379.4,625.9 379.5,643.2 379.5,660.6 378.7,677.9 378.7,677.9 379.7,660.6 381.1,643.2 382.5,625.9 383.3,608.5 383.8,591.2 384.1,573.8 384.2,556.5 384.2,539.1 384.1,521.7 383.9,504.4 383.6,487 383.1,469.7 382.5,452.3 381.8,435 380.9,417.6 379.9,400.3 378.8,382.9 377.6,365.5 376.3,348.2 374.8,330.8 372.9,313.5 370.7,296.1 368.1,278.8 365.7,261.4Z"/>
<path d="M372.9,261.4 374.3,278.8 375.2,296.1 376.3,313.5 377.6,330.8 378.9,348.2 380.2,365.5 381.3,382.9 382.3,400.3 383.2,417.6 384,435 384.7,452.3 385.2,469.7 385.7,487 386,504.4 386.2,521.7 386.3,539.1 386.3,556.5 386.2,573.8 385.9,591.2 385.6,608.5 385.5,625.9 385.6,643.2 385.6,660.6 384.9,677.9 384.9,677.9 386,660.6 387.5,643.2 388.8,625.9 389.6,608.5 390.1,591.2 390.3,573.8 390.5,556.5 390.5,539.1 390.4,521.7 390.2,504.4 389.8,487 389.4,469.7 388.8,452.3 388.1,435 387.4,417.6 386.5,400.3 385.4,382.9 384.3,365.5 383.1,348.2 381.7,330.8 380,313.5 377.9,296.1 375.4,278.8 373,261.4Z"/>
<path d="M376.3,261.4 377.7,278.8 378.7,296.1 379.9,313.5 381.3,330.8 382.7,348.2 384,365.5 385.3,382.9 386.4,400.3 387.3,417.6 388.2,435 388.9,452.3 389.5,469.7 390,487 390.3,504.4 390.5,521.7 390.6,539.1 390.6,556.5 390.5,573.8 390.2,591.2 389.9,608.5 389.8,625.9 389.9,643.2 389.9,660.6 389.2,677.9 389.2,677.9 390.3,660.6 391.8,643.2 393.1,625.9 393.9,608.5 394.4,591.2 394.6,573.8 394.8,556.5 394.8,539.1 394.7,521.7 394.5,504.4 394.1,487 393.6,469.7 393.1,452.3 392.3,435 391.5,417.6 390.5,400.3 389.4,382.9 388.2,365.5 386.9,348.2 385.4,330.8 383.6,313.5 381.4,296.1 378.8,278.8 376.4,261.4Z"/>
<path d="M381.5,244.1 383.4,261.4 384.6,278.8 385.6,296.1 386.7,313.5 388,330.8 389.4,348.2 390.6,365.5 391.7,382.9 392.7,400.3 393.6,417.6 394.4,435 395.1,452.3 395.6,469.7 396.1,487 396.4,504.4 396.6,521.7 396.7,539.1 396.7,556.5 396.6,573.8 396.3,591.2 396,608.5 395.8,625.9 395.8,643.2 395.9,660.6 395.3,677.9 395.3,677.9 396.5,660.6 398.1,643.2 399.3,625.9 400.1,608.5 400.5,591.2 400.7,573.8 400.9,556.5 400.9,539.1 400.8,521.7 400.6,504.4 400.3,487 399.8,469.7 399.3,452.3 398.6,435 397.8,417.6 396.9,400.3 395.9,382.9 394.8,365.5 393.6,348.2 392.2,330.8 390.5,313.5 388.5,296.1 386,278.8 383.5,261.4 381.5,244.1Z"/>
<path d="M384.8,244.1 386.8,261.4 388.1,278.8 389.1,296.1 390.4,313.5 391.7,330.8 393.2,348.2 394.5,365.5 395.7,382.9 396.8,400.3 397.7,417.6 398.6,435 399.3,452.3 399.9,469.7 400.4,487 400.7,504.4 400.9,521.7 401,539.1 401,556.5 400.9,573.8 400.6,591.2 400.3,608.5 400.1,625.9 400.1,643.2 400.2,660.6 399.6,677.9 399.6,677.9 400.8,660.6 402.4,643.2 403.6,625.9 404.4,608.5 404.8,591.2 405,573.8 405.2,556.5 405.2,539.1 405.1,521.7 404.9,504.4 404.5,487 404.1,469.7 403.5,452.3 402.8,435 401.9,417.6 401,400.3 399.9,382.9 398.7,365.5 397.3,348.2 395.9,330.8 394.1,313.5 392,296.1 389.4,278.8 386.9,261.4 384.8,244.1Z"/>
<path d="M391.9,244.1 393.7,261.4 394.9,278.8 395.9,296.1 397,313.5 398.3,330.8 399.7,348.2 400.9,365.5 402,382.9 403,400.3 403.9,417.6 404.7,435 405.4,452.3 405.9,469.7 406.3,487 406.7,504.4 406.9,521.7 407,539.1 407,556.5 406.8,573.8 406.6,591.2 406.2,608.5 406,625.9 405.9,643.2 406,660.6 405.6,677.9 405.6,677.9 406.9,660.6 408.5,643.2 409.6,625.9 410.4,608.5 410.8,591.2 411,573.8 411.2,556.5 411.2,539.1 411.1,521.7 410.9,504.4 410.6,487 410.1,469.7 409.6,452.3 408.9,435 408.1,417.6 407.2,400.3 406.2,382.9 405.1,365.5 403.9,348.2 402.6,330.8 400.9,313.5 398.9,296.1 396.4,278.8 394,261.4 391.9,244.1Z"/>
<path d="M395.2,244.1 397.1,261.4 398.3,278.8 399.4,296.1 400.6,313.5 402,330.8 403.5,348.2 404.8,365.5 406,382.9 407.1,400.3 408,417.6 408.9,435 409.6,452.3 410.2,469.7 410.6,487 411,504.4 411.2,521.7 411.3,539.1 411.3,556.5 411.1,573.8 410.9,591.2 410.5,608.5 410.3,625.9 410.2,643.2 410.3,660.6 409.9,677.9 409.9,677.9 411.2,660.6 412.8,643.2 413.9,625.9 414.7,608.5 415.1,591.2 415.3,573.8 415.5,556.5 415.5,539.1 415.4,521.7 415.2,504.4 414.9,487 414.4,469.7 413.8,452.3 413.1,435 412.3,417.6 411.3,400.3 410.2,382.9 409,365.5 407.7,348.2 406.2,330.8 404.5,313.5 402.4,296.1 399.9,278.8 397.4,261.4 395.2,244.1Z"/>
<path d="M402.1,244.1 403.9,261.4 405,278.8 406,296.1 407.2,313.5 408.5,330.8 409.9,348.2 411.1,365.5 412.2,382.9 413.2,400.3 414.1,417.6 414.9,435 415.5,452.3 416.1,469.7 416.5,487 416.8,504.4 417,521.7 417.1,539.1 417.1,556.5 417,573.8 416.7,591.2 416.3,608.5 416,625.9 415.9,643.2 416,660.6 415.7,677.9 415.8,677.9 417.2,660.6 418.8,643.2 419.9,625.9 420.6,608.5 420.9,591.2 421.2,573.8 421.3,556.5 421.4,539.1 421.3,521.7 421.1,504.4 420.7,487 420.3,469.7 419.8,452.3 419.1,435 418.3,417.6 417.5,400.3 416.5,382.9 415.3,365.5 414.1,348.2 412.8,330.8 411.2,313.5 409.2,296.1 406.8,278.8 404.3,261.4 402.1,244.1Z"/>
<path d="M405.5,244.1 407.3,261.4 408.5,278.8 409.5,296.1 410.8,313.5 412.2,330.8 413.7,348.2 415,365.5 416.2,382.9 417.3,400.3 418.2,417.6 419,435 419.8,452.3 420.3,469.7 420.8,487 421.1,504.4 421.3,521.7 421.4,539.1 421.4,556.5 421.3,573.8 421,591.2 420.6,608.5 420.3,625.9 420.2,643.2 420.3,660.6 420,677.9 420.1,677.9 421.5,660.6 423.1,643.2 424.2,625.9 424.9,608.5 425.2,591.2 425.5,573.8 425.6,556.5 425.7,539.1 425.6,521.7 425.4,504.4 425,487 424.6,469.7 424,452.3 423.3,435 422.5,417.6 421.5,400.3 420.4,382.9 419.2,365.5 417.9,348.2 416.5,330.8 414.8,313.5 412.7,296.1 410.3,278.8 407.7,261.4 405.5,244.1Z"/>
<path d="M412.3,244.1 413.9,261.4 415,278.8 416,296.1 417.3,313.5 418.6,330.8 420,348.2 421.2,365.5 422.3,382.9 423.3,400.3 424.1,417.6 424.9,435 425.5,452.3 426.1,469.7 426.5,487 426.8,504.4 427.1,521.7 427.1,539.1 427.1,556.5 427,573.8 426.7,591.2 426.3,608.5 426,625.9 425.8,643.2 425.8,660.6 425.7,677.9 424.8,695.3 424.8,695.3 425.9,677.9 427.4,660.6 428.9,643.2 430,625.9 430.6,608.5 431,591.2 431.2,573.8 431.4,556.5 431.4,539.1 431.3,521.7 431.1,504.4 430.8,487 430.4,469.7 429.8,452.3 429.2,435 428.4,417.6 427.5,400.3 426.5,382.9 425.4,365.5 424.2,348.2 422.9,330.8 421.3,313.5 419.4,296.1 417.1,278.8 414.5,261.4 412.3,244.1Z"/>
<path d="M415.6,244.1 417.3,261.4 418.4,278.8 419.6,296.1 420.9,313.5 422.3,330.8 423.7,348.2 425,365.5 426.2,382.9 427.3,400.3 428.3,417.6 429.1,435 429.8,452.3 430.4,469.7 430.8,487 431.1,504.4 431.4,521.7 431.4,539.1 431.4,556.5 431.3,573.8 431,591.2 430.6,608.5 430.3,625.9 430.1,643.2 430.1,660.6 430,677.9 429.1,695.3 429.1,695.3 430.2,677.9 431.7,660.6 433.2,643.2 434.3,625.9 434.9,608.5 435.3,591.2 435.5,573.8 435.7,556.5 435.7,539.1 435.6,521.7 435.4,504.4 435.1,487 434.6,469.7 434.1,452.3 433.4,435 432.5,417.6 431.6,400.3 430.5,382.9 429.3,365.5 428,348.2 426.6,330.8 424.9,313.5 422.9,296.1 420.5,278.8 417.9,261.4 415.6,244.1Z"/>
<path d="M422.3,244.1 423.8,261.4 424.9,278.8 426,296.1 427.2,313.5 428.6,330.8 429.9,348.2 431.1,365.5 432.2,382.9 433.2,400.3 434.1,417.6 434.8,435 435.5,452.3 436,469.7 436.4,487 436.7,504.4 436.9,521.7 437,539.1 437,556.5 436.9,573.8 436.6,591.2 436.2,608.5 435.8,625.9 435.6,643.2 435.5,660.6 435.5,677.9 434.7,695.3 434.7,695.3 435.9,677.9 437.5,660.6 438.9,643.2 439.9,625.9 440.5,608.5 440.9,591.2 441.1,573.8 441.3,556.5 441.3,539.1 441.2,521.7 441,504.4 440.7,487 440.3,469.7 439.8,452.3 439.1,435 438.4,417.6 437.5,400.3 436.5,382.9 435.4,365.5 434.2,348.2 432.9,330.8 431.4,313.5 429.5,296.1 427.2,278.8 424.6,261.4 422.3,244.1Z"/>
<path d="M425.6,244.1 427.2,261.4 428.3,278.8 429.5,296.1 430.8,313.5 432.3,330.8 433.7,348.2 435,365.5 436.2,382.9 437.2,400.3 438.2,417.6 439,435 439.7,452.3 440.3,469.7 440.7,487 441,504.4 441.2,521.7 441.3,539.1 441.3,556.5 441.2,573.8 440.9,591.2 440.5,608.5 440.1,625.9 439.9,643.2 439.8,660.6 439.8,677.9 439,695.3 439,695.3 440.2,677.9 441.8,660.6 443.2,643.2 444.2,625.9 444.8,608.5 445.2,591.2 445.4,573.8 445.6,556.5 445.6,539.1 445.5,521.7 445.3,504.4 445,487 444.6,469.7 444,452.3 443.3,435 442.5,417.6 441.5,400.3 440.5,382.9 439.3,365.5 438,348.2 436.6,330.8 435,313.5 433,296.1 430.6,278.8 428,261.4 425.6,244.1Z"/>
<path d="M432.1,244.1 433.6,261.4 434.6,278.8 435.7,296.1 437,313.5 438.4,330.8 439.7,348.2 440.9,365.5 442,382.9 443,400.3 443.9,417.6 444.6,435 445.2,452.3 445.8,469.7 446.2,487 446.5,504.4 446.7,521.7 446.8,539.1 446.8,556.5 446.6,573.8 446.3,591.2 446,608.5 445.5,625.9 445.2,643.2 445.1,660.6 445.1,677.9 444.5,695.3 444.5,695.3 445.7,677.9 447.4,660.6 448.8,643.2 449.7,625.9 450.3,608.5 450.7,591.2 450.9,573.8 451.1,556.5 451.1,539.1 451,521.7 450.8,504.4 450.5,487 450.1,469.7 449.6,452.3 448.9,435 448.2,417.6 447.3,400.3 446.3,382.9 445.2,365.5 444,348.2 442.7,330.8 441.2,313.5 439.4,296.1 437.2,278.8 434.5,261.4 432.2,244.1Z"/>
<path d="M435.5,244.1 437,261.4 438,278.8 439.3,296.1 440.6,313.5 442.1,330.8 443.5,348.2 444.8,365.5 446,382.9 447,400.3 448,417.6 448.8,435 449.5,452.3 450.1,469.7 450.5,487 450.8,504.4 451,521.7 451.1,539.1 451.1,556.5 450.9,573.8 450.6,591.2 450.3,608.5 449.8,625.9 449.5,643.2 449.4,660.6 449.4,677.9 448.8,695.3 448.8,695.3 450,677.9 451.7,660.6 453.1,643.2 454,625.9 454.6,608.5 455,591.2 455.2,573.8 455.4,556.5 455.4,539.1 455.3,521.7 455.1,504.4 454.8,487 454.4,469.7 453.8,452.3 453.1,435 452.3,417.6 451.4,400.3 450.3,382.9 449.1,365.5 447.8,348.2 446.4,330.8 444.8,313.5 442.9,296.1 440.6,278.8 437.9,261.4 435.5,244.1Z"/>
<path d="M441.9,244.1 443.3,261.4 444.2,278.8 445.4,296.1 446.7,313.5 448.1,330.8 449.4,348.2 450.6,365.5 451.7,382.9 452.7,400.3 453.5,417.6 454.3,435 454.9,452.3 455.4,469.7 455.8,487 456.2,504.4 456.4,521.7 456.4,539.1 456.4,556.5 456.2,573.8 456,591.2 455.6,608.5 455.1,625.9 454.8,643.2 454.6,660.6 454.6,677.9 454.1,695.3 454.1,695.3 455.5,677.9 457.3,660.6 458.5,643.2 459.4,625.9 459.9,608.5 460.3,591.2 460.6,573.8 460.8,556.5 460.8,539.1 460.7,521.7 460.5,504.4 460.2,487 459.8,469.7 459.3,452.3 458.6,435 457.9,417.6 457,400.3 456,382.9 455,365.5 453.8,348.2 452.4,330.8 451,313.5 449.2,296.1 447,278.8 444.4,261.4 441.9,244.1Z"/>
<path d="M445.2,244.1 446.6,261.4 447.6,278.8 448.9,296.1 450.3,313.5 451.8,330.8 453.2,348.2 454.5,365.5 455.7,382.9 456.7,400.3 457.6,417.6 458.5,435 459.1,452.3 459.7,469.7 460.1,487 460.5,504.4 460.7,521.7 460.7,539.1 460.7,556.5 460.5,573.8 460.3,591.2 459.9,608.5 459.4,625.9 459.1,643.2 458.9,660.6 458.9,677.9 458.4,695.3 458.4,695.3 459.8,677.9 461.6,660.6 462.8,643.2 463.7,625.9 464.2,608.5 464.6,591.2 464.9,573.8 465.1,556.5 465.1,539.1 465,521.7 464.8,504.4 464.5,487 464.1,469.7 463.5,452.3 462.8,435 462,417.6 461.1,400.3 460,382.9 458.8,365.5 457.5,348.2 456.1,330.8 454.6,313.5 452.7,296.1 450.5,278.8 447.8,261.4 445.3,244.1Z"/>
<path d="M449.5,226.7 451.5,244.1 452.8,261.4 453.7,278.8 454.9,296.1 456.2,313.5 457.7,330.8 459,348.2 460.2,365.5 461.2,382.9 462.2,400.3 463.1,417.6 463.8,435 464.4,452.3 465,469.7 465.4,487 465.7,504.4 465.9,521.7 466,539.1 465.9,556.5 465.8,573.8 465.5,591.2 465.1,608.5 464.6,625.9 464.2,643.2 464,660.6 464,677.9 463.6,695.3 463.6,695.3 465.2,677.9 466.9,660.6 468.1,643.2 469,625.9 469.5,608.5 469.9,591.2 470.1,573.8 470.3,556.5 470.3,539.1 470.3,521.7 470.1,504.4 469.8,487 469.3,469.7 468.8,452.3 468.2,435 467.4,417.6 466.6,400.3 465.6,382.9 464.5,365.5 463.4,348.2 462,330.8 460.6,313.5 458.8,296.1 456.7,278.8 454.1,261.4 451.6,244.1 449.5,226.7Z"/>
<path d="M452.8,226.7 454.8,244.1 456.1,261.4 457.2,278.8 458.5,296.1 459.9,313.5 461.4,330.8 462.8,348.2 464,365.5 465.2,382.9 466.3,400.3 467.2,417.6 468,435 468.7,452.3 469.2,469.7 469.7,487 470,504.4 470.2,521.7 470.3,539.1 470.2,556.5 470.1,573.8 469.8,591.2 469.4,608.5 468.9,625.9 468.5,643.2 468.3,660.6 468.3,677.9 467.9,695.3 467.9,695.3 469.5,677.9 471.2,660.6 472.4,643.2 473.3,625.9 473.8,608.5 474.2,591.2 474.4,573.8 474.6,556.5 474.6,539.1 474.6,521.7 474.4,504.4 474,487 473.6,469.7 473.1,452.3 472.4,435 471.6,417.6 470.6,400.3 469.6,382.9 468.4,365.5 467.1,348.2 465.7,330.8 464.2,313.5 462.4,296.1 460.2,278.8 457.5,261.4 454.9,244.1 452.8,226.7Z"/>
<path d="M459,226.7 460.9,244.1 462.1,261.4 463.1,278.8 464.4,296.1 465.7,313.5 467.1,330.8 468.4,348.2 469.6,365.5 470.7,382.9 471.6,400.3 472.5,417.6 473.2,435 473.8,452.3 474.4,469.7 474.8,487 475.1,504.4 475.3,521.7 475.3,539.1 475.3,556.5 475.1,573.8 474.9,591.2 474.5,608.5 474,625.9 473.5,643.2 473.3,660.6 473.2,677.9 472.9,695.3 471.9,712.6 471.9,712.6 473.1,695.3 474.7,677.9 476.4,660.6 477.6,643.2 478.4,625.9 478.9,608.5 479.3,591.2 479.5,573.8 479.7,556.5 479.7,539.1 479.7,521.7 479.5,504.4 479.2,487 478.8,469.7 478.2,452.3 477.6,435 476.9,417.6 476,400.3 475.1,382.9 474,365.5 472.8,348.2 471.5,330.8 470.1,313.5 468.4,296.1 466.3,278.8 463.7,261.4 461.2,244.1 459,226.7Z"/>
<path d="M462.3,226.7 464.2,244.1 465.5,261.4 466.6,278.8 467.9,296.1 469.3,313.5 470.8,330.8 472.2,348.2 473.5,365.5 474.6,382.9 475.7,400.3 476.6,417.6 477.4,435 478.1,452.3 478.6,469.7 479.1,487 479.4,504.4 479.6,521.7 479.6,539.1 479.6,556.5 479.4,573.8 479.2,591.2 478.8,608.5 478.3,625.9 477.8,643.2 477.6,660.6 477.5,677.9 477.2,695.3 476.2,712.6 476.2,712.6 477.4,695.3 479,677.9 480.7,660.6 481.9,643.2 482.7,625.9 483.2,608.5 483.6,591.2 483.8,573.8 484,556.5 484,539.1 484,521.7 483.8,504.4 483.5,487 483,469.7 482.5,452.3 481.8,435 481,417.6 480.1,400.3 479,382.9 477.9,365.5 476.6,348.2 475.2,330.8 473.7,313.5 471.9,296.1 469.7,278.8 467.1,261.4 464.5,244.1 462.3,226.7Z"/>
<path d="M468.4,226.7 470.2,244.1 471.4,261.4 472.4,278.8 473.7,296.1 475,313.5 476.4,330.8 477.7,348.2 478.9,365.5 480,382.9 480.9,400.3 481.8,417.6 482.5,435 483.1,452.3 483.6,469.7 484.1,487 484.4,504.4 484.5,521.7 484.6,539.1 484.6,556.5 484.4,573.8 484.1,591.2 483.7,608.5 483.2,625.9 482.7,643.2 482.4,660.6 482.3,677.9 482.1,695.3 481.2,712.6 481.2,712.6 482.4,695.3 484.2,677.9 485.8,660.6 486.9,643.2 487.7,625.9 488.2,608.5 488.6,591.2 488.8,573.8 489,556.5 489,539.1 489,521.7 488.8,504.4 488.5,487 488.1,469.7 487.6,452.3 486.9,435 486.2,417.6 485.4,400.3 484.4,382.9 483.3,365.5 482.2,348.2 480.9,330.8 479.5,313.5 477.8,296.1 475.7,278.8 473.2,261.4 470.6,244.1 468.4,226.7Z"/>
<path d="M471.7,226.7 473.5,244.1 474.8,261.4 475.9,278.8 477.2,296.1 478.6,313.5 480.1,330.8 481.5,348.2 482.8,365.5 483.9,382.9 485,400.3 485.9,417.6 486.7,435 487.4,452.3 487.9,469.7 488.4,487 488.7,504.4 488.8,521.7 488.9,539.1 488.9,556.5 488.7,573.8 488.4,591.2 488,608.5 487.5,625.9 487,643.2 486.7,660.6 486.6,677.9 486.4,695.3 485.5,712.6 485.5,712.6 486.7,695.3 488.5,677.9 490.1,660.6 491.2,643.2 492,625.9 492.5,608.5 492.9,591.2 493.1,573.8 493.3,556.5 493.3,539.1 493.3,521.7 493.1,504.4 492.8,487 492.3,469.7 491.8,452.3 491.1,435 490.3,417.6 489.4,400.3 488.4,382.9 487.2,365.5 485.9,348.2 484.6,330.8 483.1,313.5 481.3,296.1 479.1,278.8 476.6,261.4 473.9,244.1 471.7,226.7Z"/>
<path d="M477.6,226.7 479.4,244.1 480.5,261.4 481.6,278.8 482.8,296.1 484.2,313.5 485.6,330.8 486.9,348.2 488.1,365.5 489.2,382.9 490.1,400.3 490.9,417.6 491.7,435 492.3,452.3 492.8,469.7 493.2,487 493.5,504.4 493.7,521.7 493.8,539.1 493.7,556.5 493.5,573.8 493.3,591.2 493.1,600 492.9,611.4 492.8,622.9 492.7,634.3 492.8,645.7 492.9,657.1 492.8,668.6 492.3,680 492.3,680 493,668.6 493.8,657.1 495,645.7 495.9,634.3 496.6,622.9 497.2,611.4 497.5,600 497.7,591.2 498,573.8 498.2,556.5 498.2,539.1 498.1,521.7 498,504.4 497.7,487 497.3,469.7 496.7,452.3 496.1,435 495.4,417.6 494.6,400.3 493.6,382.9 492.6,365.5 491.4,348.2 490.1,330.8 488.7,313.5 487,296.1 485,278.8 482.6,261.4 479.9,244.1 477.6,226.7Z"/>
<path d="M480.9,226.7 482.7,244.1 483.9,261.4 485,278.8 486.3,296.1 487.8,313.5 489.3,330.8 490.7,348.2 492,365.5 493.1,382.9 494.2,400.3 495.1,417.6 495.9,435 496.5,452.3 497.1,469.7 497.5,487 497.8,504.4 498,521.7 498.1,539.1 498,556.5 497.8,573.8 497.6,591.2 497.4,600 497.2,611.4 497.1,622.9 497,634.3 497.1,645.7 497.2,657.1 497.1,668.6 496.6,680 496.6,680 497.3,668.6 498.1,657.1 499.3,645.7 500.2,634.3 500.9,622.9 501.5,611.4 501.8,600 502,591.2 502.3,573.8 502.5,556.5 502.5,539.1 502.4,521.7 502.3,504.4 502,487 501.5,469.7 501,452.3 500.3,435 499.5,417.6 498.6,400.3 497.6,382.9 496.4,365.5 495.2,348.2 493.8,330.8 492.3,313.5 490.6,296.1 488.4,278.8 485.9,261.4 483.2,244.1 480.9,226.7Z"/></g>
<use href="#td0" fill="none" stroke="#ffe030" stroke-opacity="0.35" stroke-width="2.60" stroke-dasharray="3 1"/>
<use href="#ts0" fill="none" stroke="#ffe030" stroke-opacity="0.5" stroke-width="2.80"/>
<use href="#td1" fill="none" stroke="#ffe030" stroke-opacity="0.35" stroke-width="2.80" stroke-dasharray="3.8 1"/>
<use href="#ts1" fill="none" stroke="#ffe030" stroke-opacity="0.5" stroke-width="3.00"/>
<use href="#td2" fill="none" stroke="#ffe030" stroke-opacity="0.35" stroke-width="3.00" stroke-dasharray="4.8 1"/>
<use href="#ts2" fill="none" stroke="#ffe030" stroke-opacity="0.5" stroke-width="3.20"/>
<use href="#td0" fill="none" stroke="#fff" stroke-width="1.60" stroke-dasharray="3 1" shape-rendering="crispEdges"/>
<use href="#ts0" fill="none" stroke="#fff" stroke-width="1.90"/>
<use href="#td1" fill="none" stroke="#fff" stroke-width="1.80" stroke-dasharray="3.8 1" shape-rendering="crispEdges"/>
<use href="#ts1" fill="none" stroke="#fff" stroke-width="2.10"/>
<use href="#td2" fill="none" stroke="#fff" stroke-width="2.00" stroke-dasharray="4.8 1" shape-rendering="crispEdges"/>
<use href="#ts2" fill="none" stroke="#fff" stroke-width="2.30"/>
<g mask="url(#hm)"><g fill="#fff"><path d="M-0.8,348.2 0.6,365.5 1.7,382.9 2.7,400.3 3.6,417.6 4.6,435 5.4,452.3 6.2,469.7 6.9,487 7.7,504.4 8.3,521.7 8.8,539.1 8.9,556.5 8.9,556.5 8.9,539.1 8.9,521.7 8.8,504.4 8.6,487 8,469.7 7.3,452.3 6.4,435 5.4,417.6 4,400.3 2.5,382.9 0.8,365.5 -0.8,348.2Z"/>
<path d="M3,348.2 4.5,365.5 5.7,382.9 6.7,400.3 7.7,417.6 8.8,435 9.7,452.3 10.5,469.7 11.2,487 12,504.4 12.6,521.7 13.1,539.1 13.2,556.5 13.2,556.5 13.2,539.1 13.2,521.7 13.1,504.4 12.8,487 12.3,469.7 11.5,452.3 10.6,435 9.5,417.6 8.1,400.3 6.4,382.9 4.7,365.5 3,348.2Z"/>
<path d="M19.3,348.2 20.6,365.5 21.7,382.9 22.6,400.3 23.6,417.6 24.6,435 25.4,452.3 26.2,469.7 26.8,487 27.5,504.4 28.2,521.7 28.7,539.1 28.9,556.5 28.9,556.5 28.9,539.1 28.9,521.7 28.9,504.4 28.6,487 28,469.7 27.3,452.3 26.4,435 25.4,417.6 24.1,400.3 22.6,382.9 21,365.5 19.3,348.2Z"/>
<path d="M23.1,348.2 24.5,365.5 25.7,382.9 26.7,400.3 27.7,417.6 28.7,435 29.7,452.3 30.4,469.7 31.1,487 31.8,504.4 32.5,521.7 33,539.1 33.2,556.5 33.2,556.5 33.2,539.1 33.2,521.7 33.2,504.4 32.9,487 32.3,469.7 31.5,452.3 30.6,435 29.6,417.6 28.2,400.3 26.6,382.9 24.8,365.5 23.1,348.2Z"/>
<path d="M36.7,330.8 38.3,348.2 39.6,365.5 40.6,382.9 41.6,400.3 42.6,417.6 43.5,435 44.4,452.3 45.1,469.7 45.7,487 46.4,504.4 47,521.7 47.6,539.1 47.8,556.5 47.8,556.5 47.9,539.1 48,521.7 48,504.4 47.7,487 47,469.7 46.3,452.3 45.5,435 44.5,417.6 43.3,400.3 41.8,382.9 40.1,365.5 38.4,348.2 36.7,330.8Z"/>
<path d="M40.4,330.8 42.1,348.2 43.5,365.5 44.6,382.9 45.6,400.3 46.7,417.6 47.7,435 48.6,452.3 49.4,469.7 50,487 50.7,504.4 51.3,521.7 51.9,539.1 52.1,556.5 52.1,556.5 52.2,539.1 52.3,521.7 52.3,504.4 52,487 51.3,469.7 50.6,452.3 49.7,435 48.6,417.6 47.3,400.3 45.7,382.9 44,365.5 42.2,348.2 40.4,330.8Z"/>
<path d="M56.2,330.8 57.7,348.2 59,365.5 60,382.9 60.9,400.3 62,417.6 62.9,435 63.8,452.3 64.5,469.7 65.1,487 65.6,504.4 66.2,521.7 66.8,539.1 67.1,556.5 67.1,573.8 67.1,573.8 67.2,556.5 67.4,539.1 67.5,521.7 67.5,504.4 67.1,487 66.5,469.7 65.7,452.3 64.9,435 63.9,417.6 62.8,400.3 61.3,382.9 59.7,365.5 57.9,348.2 56.2,330.8Z"/>
<path d="M59.9,330.8 61.5,348.2 62.8,365.5 64,382.9 65,400.3 66.1,417.6 67.1,435 68,452.3 68.8,469.7 69.4,487 69.9,504.4 70.5,521.7 71.1,539.1 71.4,556.5 71.4,573.8 71.4,573.8 71.5,556.5 71.7,539.1 71.8,521.7 71.8,504.4 71.4,487 70.7,469.7 70,452.3 69.1,435 68.1,417.6 66.8,400.3 65.3,382.9 63.5,365.5 61.7,348.2 59.9,330.8Z"/>
<path d="M74.8,330.8 76.3,348.2 77.4,365.5 78.4,382.9 79.4,400.3 80.5,417.6 81.4,435 82.2,452.3 83,469.7 83.5,487 84,504.4 84.6,521.7 85.1,539.1 85.5,556.5 85.6,573.8 85.6,573.8 85.8,556.5 86,539.1 86.1,521.7 86,504.4 85.6,487 85,469.7 84.3,452.3 83.4,435 82.5,417.6 81.4,400.3 80,382.9 78.3,365.5 76.6,348.2 74.8,330.8Z"/>
<path d="M78.5,330.8 80,348.2 81.3,365.5 82.4,382.9 83.5,400.3 84.6,417.6 85.6,435 86.5,452.3 87.2,469.7 87.8,487 88.3,504.4 88.9,521.7 89.4,539.1 89.8,556.5 89.9,573.8 89.9,573.8 90.1,556.5 90.3,539.1 90.4,521.7 90.3,504.4 89.9,487 89.3,469.7 88.5,452.3 87.6,435 86.6,417.6 85.4,400.3 83.9,382.9 82.2,365.5 80.3,348.2 78.5,330.8Z"/>
<path d="M92.9,330.8 94.3,348.2 95.4,365.5 96.4,382.9 97.4,400.3 98.5,417.6 99.4,435 100.2,452.3 100.9,469.7 101.5,487 102,504.4 102.4,521.7 103,539.1 103.4,556.5 103.5,573.8 103.6,573.8 103.8,556.5 104.1,539.1 104.2,521.7 104,504.4 103.6,487 103,469.7 102.3,452.3 101.5,435 100.5,417.6 99.5,400.3 98.1,382.9 96.5,365.5 94.7,348.2 92.9,330.8Z"/>
<path d="M96.6,330.8 98.1,348.2 99.3,365.5 100.4,382.9 101.4,400.3 102.6,417.6 103.6,435 104.5,452.3 105.2,469.7 105.8,487 106.3,504.4 106.7,521.7 107.3,539.1 107.7,556.5 107.8,573.8 107.9,573.8 108.1,556.5 108.4,539.1 108.5,521.7 108.3,504.4 107.9,487 107.3,469.7 106.5,452.3 105.7,435 104.7,417.6 103.5,400.3 102.1,382.9 100.3,365.5 98.5,348.2 96.6,330.8Z"/>
<path d="M108.3,313.5 109.9,330.8 111.3,348.2 112.3,365.5 113.4,382.9 114.4,400.3 115.5,417.6 116.4,435 117.2,452.3 117.9,469.7 118.5,487 118.9,504.4 119.3,521.7 119.8,539.1 120.2,556.5 120.4,573.8 120.3,591.2 120.3,591.2 120.6,573.8 120.9,556.5 121.2,539.1 121.3,521.7 121,504.4 120.6,487 120,469.7 119.3,452.3 118.5,435 117.6,417.6 116.5,400.3 115.2,382.9 113.6,365.5 111.8,348.2 110,330.8 108.3,313.5Z"/>
<path d="M111.9,313.5 113.6,330.8 115,348.2 116.2,365.5 117.3,382.9 118.4,400.3 119.6,417.6 120.6,435 121.4,452.3 122.2,469.7 122.8,487 123.2,504.4 123.6,521.7 124.1,539.1 124.5,556.5 124.7,573.8 124.6,591.2 124.6,591.2 124.9,573.8 125.2,556.5 125.5,539.1 125.6,521.7 125.3,504.4 124.9,487 124.3,469.7 123.6,452.3 122.7,435 121.7,417.6 120.6,400.3 119.2,382.9 117.5,365.5 115.6,348.2 113.7,330.8 111.9,313.5Z"/>
<path d="M124.4,313.5 126,330.8 127.2,348.2 128.3,365.5 129.3,382.9 130.4,400.3 131.5,417.6 132.4,435 133.2,452.3 133.9,469.7 134.4,487 134.9,504.4 135.2,521.7 135.6,539.1 136.1,556.5 136.3,573.8 136.3,591.2 136.3,591.2 136.6,573.8 137,556.5 137.3,539.1 137.3,521.7 137,504.4 136.6,487 136,469.7 135.3,452.3 134.5,435 133.6,417.6 132.6,400.3 131.3,382.9 129.7,365.5 128,348.2 126.1,330.8 124.4,313.5Z"/>
<path d="M128,313.5 129.7,330.8 131,348.2 132.2,365.5 133.3,382.9 134.5,400.3 135.6,417.6 136.6,435 137.4,452.3 138.1,469.7 138.7,487 139.2,504.4 139.5,521.7 139.9,539.1 140.4,556.5 140.6,573.8 140.6,591.2 140.6,591.2 140.9,573.8 141.3,556.5 141.6,539.1 141.6,521.7 141.3,504.4 140.9,487 140.3,469.7 139.6,452.3 138.7,435 137.7,417.6 136.6,400.3 135.3,382.9 133.6,365.5 131.8,348.2 129.8,330.8 128,313.5Z"/>
<path d="M141.5,313.5 143,330.8 144.2,348.2 145.3,365.5 146.3,382.9 147.4,400.3 148.4,417.6 149.4,435 150.2,452.3 150.8,469.7 151.4,487 151.8,504.4 152.1,521.7 152.5,539.1 152.9,556.5 153.2,573.8 153.2,591.2 153.2,591.2 153.6,573.8 154.1,556.5 154.4,539.1 154.3,521.7 154,504.4 153.6,487 153,469.7 152.4,452.3 151.6,435 150.7,417.6 149.6,400.3 148.4,382.9 146.9,365.5 145.1,348.2 143.3,330.8 141.5,313.5Z"/>
<path d="M145.1,313.5 146.7,330.8 148,348.2 149.1,365.5 150.3,382.9 151.5,400.3 152.6,417.6 153.6,435 154.4,452.3 155.1,469.7 155.7,487 156.1,504.4 156.4,521.7 156.8,539.1 157.2,556.5 157.5,573.8 157.5,591.2 157.5,591.2 157.9,573.8 158.4,556.5 158.7,539.1 158.6,521.7 158.3,504.4 157.9,487 157.3,469.7 156.6,452.3 155.8,435 154.8,417.6 153.7,400.3 152.4,382.9 150.8,365.5 148.9,348.2 147,330.8 145.1,313.5Z"/>
<path d="M157.7,313.5 159.2,330.8 160.4,348.2 161.4,365.5 162.5,382.9 163.6,400.3 164.6,417.6 165.6,435 166.3,452.3 167,469.7 167.5,487 168,504.4 168.3,521.7 168.5,539.1 168.9,556.5 169.2,573.8 169.3,591.2 169,608.5 169,608.5 169.4,591.2 169.9,573.8 170.4,556.5 170.6,539.1 170.5,521.7 170.2,504.4 169.8,487 169.3,469.7 168.6,452.3 167.8,435 166.9,417.6 165.9,400.3 164.7,382.9 163.2,365.5 161.5,348.2 159.6,330.8 157.8,313.5Z"/>
<path d="M161.4,313.5 162.9,330.8 164.2,348.2 165.3,365.5 166.5,382.9 167.7,400.3 168.8,417.6 169.7,435 170.6,452.3 171.3,469.7 171.8,487 172.3,504.4 172.6,521.7 172.8,539.1 173.2,556.5 173.5,573.8 173.6,591.2 173.3,608.5 173.3,608.5 173.7,591.2 174.2,573.8 174.7,556.5 174.9,539.1 174.8,521.7 174.5,504.4 174.1,487 173.5,469.7 172.8,452.3 172,435 171,417.6 169.9,400.3 168.7,382.9 167.1,365.5 165.3,348.2 163.3,330.8 161.4,313.5Z"/>
<path d="M171.6,296.1 173.3,313.5 174.7,330.8 175.8,348.2 176.9,365.5 178,382.9 179.1,400.3 180.1,417.6 181,435 181.8,452.3 182.5,469.7 183,487 183.4,504.4 183.7,521.7 183.9,539.1 184.3,556.5 184.6,573.8 184.7,591.2 184.5,608.5 184.5,608.5 184.9,591.2 185.5,573.8 185.9,556.5 186.2,539.1 186,521.7 185.7,504.4 185.3,487 184.8,469.7 184.1,452.3 183.3,435 182.4,417.6 181.4,400.3 180.3,382.9 178.9,365.5 177.1,348.2 175.3,330.8 173.4,313.5 171.6,296.1Z"/>
<path d="M175.1,296.1 176.9,313.5 178.4,330.8 179.6,348.2 180.8,365.5 182,382.9 183.2,400.3 184.3,417.6 185.2,435 186.1,452.3 186.8,469.7 187.3,487 187.7,504.4 188,521.7 188.2,539.1 188.6,556.5 188.9,573.8 189,591.2 188.8,608.5 188.8,608.5 189.2,591.2 189.8,573.8 190.2,556.5 190.5,539.1 190.3,521.7 190,504.4 189.6,487 189.1,469.7 188.4,452.3 187.5,435 186.6,417.6 185.5,400.3 184.3,382.9 182.7,365.5 180.9,348.2 179,330.8 177,313.5 175.1,296.1Z"/>
<path d="M185.7,296.1 187.3,313.5 188.7,330.8 189.8,348.2 190.9,365.5 192,382.9 193.1,400.3 194.1,417.6 195,435 195.8,452.3 196.4,469.7 197,487 197.4,504.4 197.7,521.7 197.9,539.1 198.1,556.5 198.4,573.8 198.6,591.2 198.4,608.5 198.4,608.5 199,591.2 199.6,573.8 200,556.5 200.2,539.1 200,521.7 199.7,504.4 199.3,487 198.8,469.7 198.1,452.3 197.4,435 196.5,417.6 195.5,400.3 194.3,382.9 193,365.5 191.3,348.2 189.4,330.8 187.5,313.5 185.7,296.1Z"/>
<path d="M189.2,296.1 191,313.5 192.4,330.8 193.6,348.2 194.8,365.5 196,382.9 197.2,400.3 198.3,417.6 199.2,435 200,452.3 200.7,469.7 201.3,487 201.7,504.4 202,521.7 202.2,539.1 202.4,556.5 202.7,573.8 202.9,591.2 202.7,608.5 202.7,608.5 203.3,591.2 203.9,573.8 204.3,556.5 204.5,539.1 204.3,521.7 204,504.4 203.6,487 203.1,469.7 202.4,452.3 201.6,435 200.6,417.6 199.5,400.3 198.3,382.9 196.8,365.5 195.1,348.2 193.1,330.8 191.1,313.5 189.2,296.1Z"/>
<path d="M201.3,296.1 202.9,313.5 204.2,330.8 205.3,348.2 206.4,365.5 207.5,382.9 208.6,400.3 209.6,417.6 210.5,435 211.3,452.3 211.9,469.7 212.4,487 212.9,504.4 213.1,521.7 213.3,539.1 213.5,556.5 213.7,573.8 213.9,591.2 213.9,608.5 213.4,625.9 213.4,625.9 213.9,608.5 214.5,591.2 215.1,573.8 215.6,556.5 215.7,539.1 215.5,521.7 215.2,504.4 214.8,487 214.3,469.7 213.7,452.3 212.9,435 212,417.6 211,400.3 209.9,382.9 208.6,365.5 206.9,348.2 205.1,330.8 203.1,313.5 201.3,296.1Z"/>
<path d="M204.8,296.1 206.5,313.5 207.9,330.8 209.1,348.2 210.2,365.5 211.5,382.9 212.7,400.3 213.8,417.6 214.7,435 215.5,452.3 216.2,469.7 216.7,487 217.2,504.4 217.4,521.7 217.6,539.1 217.8,556.5 218,573.8 218.2,591.2 218.2,608.5 217.7,625.9 217.7,625.9 218.2,608.5 218.8,591.2 219.4,573.8 219.9,556.5 220,539.1 219.8,521.7 219.5,504.4 219.1,487 218.6,469.7 217.9,452.3 217.1,435 216.1,417.6 215.1,400.3 213.9,382.9 212.5,365.5 210.7,348.2 208.7,330.8 206.7,313.5 204.8,296.1Z"/>
<path d="M215.8,296.1 217.4,313.5 218.7,330.8 219.8,348.2 220.8,365.5 222,382.9 223.1,400.3 224.1,417.6 225,435 225.8,452.3 226.4,469.7 226.9,487 227.3,504.4 227.6,521.7 227.8,539.1 227.9,556.5 228.1,573.8 228.3,591.2 228.3,608.5 227.9,625.9 227.9,625.9 228.4,608.5 229.1,591.2 229.7,573.8 230.1,556.5 230.2,539.1 230,521.7 229.7,504.4 229.3,487 228.8,469.7 228.2,452.3 227.4,435 226.6,417.6 225.6,400.3 224.5,382.9 223.2,365.5 221.6,348.2 219.7,330.8 217.7,313.5 215.8,296.1Z"/>
<path d="M219.4,296.1 221,313.5 222.3,330.8 223.5,348.2 224.7,365.5 226,382.9 227.2,400.3 228.3,417.6 229.2,435 230,452.3 230.7,469.7 231.2,487 231.6,504.4 231.9,521.7 232.1,539.1 232.2,556.5 232.4,573.8 232.6,591.2 232.6,608.5 232.2,625.9 232.2,625.9 232.7,608.5 233.4,591.2 234,573.8 234.4,556.5 234.5,539.1 234.3,521.7 234,504.4 233.6,487 233.1,469.7 232.4,452.3 231.6,435 230.7,417.6 229.6,400.3 228.4,382.9 227.1,365.5 225.4,348.2 223.4,330.8 221.4,313.5 219.4,296.1Z"/>
<path d="M229.9,296.1 231.4,313.5 232.6,330.8 233.7,348.2 234.8,365.5 236,382.9 237.2,400.3 238.1,417.6 239,435 239.7,452.3 240.4,469.7 240.9,487 241.3,504.4 241.6,521.7 241.7,539.1 241.8,556.5 241.9,573.8 242.1,591.2 242.1,608.5 241.8,625.9 241.8,625.9 242.5,608.5 243.2,591.2 243.8,573.8 244.2,556.5 244.2,539.1 244,521.7 243.7,504.4 243.3,487 242.8,469.7 242.2,452.3 241.5,435 240.6,417.6 239.6,400.3 238.5,382.9 237.3,365.5 235.7,348.2 233.9,330.8 231.9,313.5 229.9,296.1Z"/>
<path d="M233.4,296.1 235,313.5 236.3,330.8 237.5,348.2 238.7,365.5 240,382.9 241.2,400.3 242.3,417.6 243.2,435 244,452.3 244.6,469.7 245.2,487 245.6,504.4 245.9,521.7 246,539.1 246.1,556.5 246.2,573.8 246.4,591.2 246.4,608.5 246.1,625.9 246.1,625.9 246.8,608.5 247.5,591.2 248.1,573.8 248.5,556.5 248.5,539.1 248.3,521.7 248,504.4 247.6,487 247.1,469.7 246.4,452.3 245.6,435 244.7,417.6 243.7,400.3 242.5,382.9 241.1,365.5 239.5,348.2 237.5,330.8 235.5,313.5 233.5,296.1Z"/>
<path d="M242.2,278.8 244,296.1 245.4,313.5 246.6,330.8 247.7,348.2 248.9,365.5 250.1,382.9 251.2,400.3 252.1,417.6 253,435 253.7,452.3 254.3,469.7 254.9,487 255.2,504.4 255.5,521.7 255.7,539.1 255.7,556.5 255.8,573.8 256,591.2 256,608.5 255.8,625.9 255.8,625.9 256.5,608.5 257.3,591.2 257.9,573.8 258.2,556.5 258.2,539.1 258,521.7 257.7,504.4 257.4,487 256.8,469.7 256.2,452.3 255.5,435 254.6,417.6 253.7,400.3 252.6,382.9 251.3,365.5 249.8,348.2 248,330.8 246,313.5 244,296.1 242.2,278.8Z"/>
<path d="M245.6,278.8 247.5,296.1 249,313.5 250.3,330.8 251.5,348.2 252.7,365.5 254,382.9 255.2,400.3 256.3,417.6 257.2,435 258,452.3 258.6,469.7 259.1,487 259.5,504.4 259.8,521.7 260,539.1 260,556.5 260.1,573.8 260.3,591.2 260.3,608.5 260.1,625.9 260.1,625.9 260.8,608.5 261.6,591.2 262.2,573.8 262.5,556.5 262.5,539.1 262.3,521.7 262,504.4 261.6,487 261.1,469.7 260.5,452.3 259.7,435 258.8,417.6 257.7,400.3 256.5,382.9 255.2,365.5 253.6,348.2 251.7,330.8 249.6,313.5 247.6,296.1 245.6,278.8Z"/>
<path d="M256.4,278.8 258.1,296.1 259.5,313.5 260.7,330.8 261.8,348.2 263,365.5 264.2,382.9 265.3,400.3 266.2,417.6 267.1,435 267.8,452.3 268.4,469.7 268.9,487 269.3,504.4 269.6,521.7 269.7,539.1 269.7,556.5 269.7,573.8 269.9,591.2 270,608.5 269.8,625.9 269.2,643.2 269.2,643.2 269.9,625.9 270.7,608.5 271.5,591.2 272,573.8 272.3,556.5 272.3,539.1 272.1,521.7 271.8,504.4 271.5,487 271,469.7 270.3,452.3 269.6,435 268.8,417.6 267.8,400.3 266.7,382.9 265.5,365.5 264.1,348.2 262.3,330.8 260.3,313.5 258.3,296.1 256.4,278.8Z"/>
<path d="M259.8,278.8 261.6,296.1 263.1,313.5 264.4,330.8 265.6,348.2 266.9,365.5 268.1,382.9 269.3,400.3 270.4,417.6 271.3,435 272,452.3 272.7,469.7 273.2,487 273.6,504.4 273.9,521.7 274,539.1 274,556.5 274,573.8 274.2,591.2 274.3,608.5 274.1,625.9 273.5,643.2 273.5,643.2 274.2,625.9 275,608.5 275.8,591.2 276.3,573.8 276.6,556.5 276.6,539.1 276.4,521.7 276.1,504.4 275.8,487 275.2,469.7 274.6,452.3 273.8,435 272.9,417.6 271.8,400.3 270.7,382.9 269.4,365.5 267.8,348.2 266,330.8 263.9,313.5 261.8,296.1 259.8,278.8Z"/>
<path d="M270.6,278.8 272.3,296.1 273.6,313.5 274.7,330.8 275.9,348.2 277.1,365.5 278.3,382.9 279.4,400.3 280.3,417.6 281.2,435 281.9,452.3 282.5,469.7 283,487 283.4,504.4 283.6,521.7 283.8,539.1 283.8,556.5 283.7,573.8 283.8,591.2 283.9,608.5 283.8,625.9 283.3,643.2 283.3,643.2 284,625.9 284.8,608.5 285.6,591.2 286.2,573.8 286.4,556.5 286.3,539.1 286.2,521.7 285.9,504.4 285.6,487 285.1,469.7 284.5,452.3 283.7,435 282.9,417.6 281.9,400.3 280.9,382.9 279.7,365.5 278.3,348.2 276.5,330.8 274.5,313.5 272.5,296.1 270.6,278.8Z"/>
<path d="M274,278.8 275.8,296.1 277.2,313.5 278.4,330.8 279.7,348.2 281,365.5 282.3,382.9 283.4,400.3 284.4,417.6 285.4,435 286.1,452.3 286.8,469.7 287.3,487 287.7,504.4 287.9,521.7 288.1,539.1 288.1,556.5 288,573.8 288.1,591.2 288.2,608.5 288.1,625.9 287.6,643.2 287.6,643.2 288.3,625.9 289.1,608.5 289.9,591.2 290.5,573.8 290.7,556.5 290.6,539.1 290.5,521.7 290.2,504.4 289.9,487 289.3,469.7 288.7,452.3 287.9,435 287,417.6 286,400.3 284.8,382.9 283.5,365.5 282.1,348.2 280.2,330.8 278.1,313.5 276,296.1 274,278.8Z"/>
<path d="M283.3,278.8 284.9,296.1 286.2,313.5 287.3,330.8 288.5,348.2 289.7,365.5 290.9,382.9 292,400.3 292.9,417.6 293.8,435 294.5,452.3 295.1,469.7 295.6,487 295.9,504.4 296.2,521.7 296.3,539.1 296.3,556.5 296.2,573.8 296.3,591.2 296.4,608.5 296.3,625.9 295.9,643.2 295.9,643.2 296.6,625.9 297.5,608.5 298.3,591.2 298.8,573.8 298.9,556.5 298.9,539.1 298.8,521.7 298.5,504.4 298.2,487 297.7,469.7 297.1,452.3 296.4,435 295.5,417.6 294.6,400.3 293.5,382.9 292.3,365.5 291,348.2 289.2,330.8 287.3,313.5 285.2,296.1 283.3,278.8Z"/>
<path d="M286.7,278.8 288.4,296.1 289.8,313.5 291,330.8 292.2,348.2 293.6,365.5 294.9,382.9 296,400.3 297,417.6 297.9,435 298.7,452.3 299.4,469.7 299.9,487 300.2,504.4 300.5,521.7 300.6,539.1 300.6,556.5 300.5,573.8 300.6,591.2 300.7,608.5 300.6,625.9 300.2,643.2 300.2,643.2 300.9,625.9 301.8,608.5 302.6,591.2 303.1,573.8 303.2,556.5 303.2,539.1 303.1,521.7 302.8,504.4 302.5,487 302,469.7 301.3,452.3 300.6,435 299.7,417.6 298.6,400.3 297.5,382.9 296.2,365.5 294.8,348.2 292.9,330.8 290.9,313.5 288.8,296.1 286.7,278.8Z"/>
<path d="M295.8,278.8 297.4,296.1 298.7,313.5 299.8,330.8 301,348.2 302.2,365.5 303.4,382.9 304.5,400.3 305.4,417.6 306.2,435 307,452.3 307.6,469.7 308,487 308.4,504.4 308.7,521.7 308.8,539.1 308.8,556.5 308.7,573.8 308.6,591.2 308.7,608.5 308.7,625.9 308.3,643.2 308.3,643.2 309.2,625.9 310.1,608.5 310.9,591.2 311.3,573.8 311.4,556.5 311.4,539.1 311.3,521.7 311,504.4 310.7,487 310.2,469.7 309.6,452.3 308.9,435 308.1,417.6 307.1,400.3 306.1,382.9 304.9,365.5 303.6,348.2 301.9,330.8 299.9,313.5 297.9,296.1 295.8,278.8Z"/>
<path d="M299.3,278.8 300.9,296.1 302.3,313.5 303.5,330.8 304.7,348.2 306.1,365.5 307.4,382.9 308.5,400.3 309.5,417.6 310.4,435 311.2,452.3 311.8,469.7 312.3,487 312.7,504.4 313,521.7 313.1,539.1 313.1,556.5 313,573.8 312.9,591.2 313,608.5 313,625.9 312.6,643.2 312.6,643.2 313.5,625.9 314.4,608.5 315.2,591.2 315.6,573.8 315.7,556.5 315.7,539.1 315.6,521.7 315.3,504.4 315,487 314.5,469.7 313.8,452.3 313.1,435 312.2,417.6 311.2,400.3 310,382.9 308.8,365.5 307.3,348.2 305.6,330.8 303.5,313.5 301.4,296.1 299.3,278.8Z"/>
<path d="M306.3,261.4 308.2,278.8 309.7,296.1 310.9,313.5 312.1,330.8 313.3,348.2 314.6,365.5 315.7,382.9 316.8,400.3 317.7,417.6 318.5,435 319.2,452.3 319.8,469.7 320.3,487 320.7,504.4 320.9,521.7 321,539.1 321,556.5 320.9,573.8 320.8,591.2 320.8,608.5 320.8,625.9 320.5,643.2 319.9,660.6 319.9,660.6 320.6,643.2 321.5,625.9 322.5,608.5 323.2,591.2 323.6,573.8 323.7,556.5 323.7,539.1 323.6,521.7 323.4,504.4 323,487 322.5,469.7 321.9,452.3 321.2,435 320.4,417.6 319.5,400.3 318.4,382.9 317.2,365.5 315.9,348.2 314.3,330.8 312.4,313.5 310.3,296.1 308.2,278.8 306.3,261.4Z"/>
<path d="M309.7,261.4 311.6,278.8 313.2,296.1 314.6,313.5 315.8,330.8 317.1,348.2 318.4,365.5 319.7,382.9 320.8,400.3 321.8,417.6 322.7,435 323.5,452.3 324.1,469.7 324.6,487 325,504.4 325.2,521.7 325.3,539.1 325.3,556.5 325.2,573.8 325.1,591.2 325.1,608.5 325.1,625.9 324.8,643.2 324.2,660.6 324.2,660.6 324.9,643.2 325.8,625.9 326.8,608.5 327.5,591.2 327.9,573.8 328,556.5 328,539.1 327.9,521.7 327.7,504.4 327.3,487 326.8,469.7 326.2,452.3 325.4,435 324.5,417.6 323.5,400.3 322.4,382.9 321.1,365.5 319.7,348.2 318,330.8 316,313.5 313.8,296.1 311.7,278.8 309.7,261.4Z"/>
<path d="M317.7,261.4 319.5,278.8 321,296.1 322.2,313.5 323.4,330.8 324.6,348.2 325.9,365.5 327,382.9 328.1,400.3 329,417.6 329.8,435 330.5,452.3 331.1,469.7 331.6,487 331.9,504.4 332.2,521.7 332.3,539.1 332.3,556.5 332.2,573.8 332,591.2 332,608.5 332,625.9 331.8,643.2 331.1,660.6 331.1,660.6 331.9,643.2 332.9,625.9 333.9,608.5 334.6,591.2 334.9,573.8 335,556.5 335,539.1 334.9,521.7 334.7,504.4 334.3,487 333.8,469.7 333.2,452.3 332.5,435 331.7,417.6 330.8,400.3 329.7,382.9 328.6,365.5 327.3,348.2 325.7,330.8 323.8,313.5 321.7,296.1 319.7,278.8 317.7,261.4Z"/>
<path d="M321.1,261.4 323,278.8 324.5,296.1 325.8,313.5 327.1,330.8 328.4,348.2 329.8,365.5 331,382.9 332.1,400.3 333.1,417.6 334,435 334.8,452.3 335.4,469.7 335.9,487 336.2,504.4 336.5,521.7 336.6,539.1 336.6,556.5 336.5,573.8 336.3,591.2 336.3,608.5 336.3,625.9 336.1,643.2 335.4,660.6 335.4,660.6 336.2,643.2 337.2,625.9 338.2,608.5 338.9,591.2 339.2,573.8 339.3,556.5 339.3,539.1 339.2,521.7 339,504.4 338.6,487 338.1,469.7 337.5,452.3 336.7,435 335.8,417.6 334.8,400.3 333.7,382.9 332.5,365.5 331.1,348.2 329.4,330.8 327.4,313.5 325.3,296.1 323.1,278.8 321.1,261.4Z"/>
<path d="M329.6,261.4 331.4,278.8 332.8,296.1 334,313.5 335.2,330.8 336.4,348.2 337.7,365.5 338.9,382.9 339.9,400.3 340.8,417.6 341.6,435 342.3,452.3 342.9,469.7 343.4,487 343.7,504.4 343.9,521.7 344.1,539.1 344.1,556.5 343.9,573.8 343.7,591.2 343.7,608.5 343.6,625.9 343.4,643.2 342.9,660.6 342.9,660.6 343.8,643.2 344.8,625.9 345.7,608.5 346.4,591.2 346.7,573.8 346.8,556.5 346.8,539.1 346.7,521.7 346.5,504.4 346.1,487 345.6,469.7 345.1,452.3 344.4,435 343.6,417.6 342.6,400.3 341.6,382.9 340.4,365.5 339.2,348.2 337.6,330.8 335.8,313.5 333.7,296.1 331.6,278.8 329.6,261.4Z"/>
<path d="M333,261.4 334.8,278.8 336.3,296.1 337.6,313.5 338.8,330.8 340.2,348.2 341.6,365.5 342.8,382.9 343.9,400.3 344.9,417.6 345.8,435 346.5,452.3 347.2,469.7 347.7,487 348,504.4 348.2,521.7 348.4,539.1 348.4,556.5 348.2,573.8 348,591.2 348,608.5 347.9,625.9 347.7,643.2 347.2,660.6 347.2,660.6 348.1,643.2 349.1,625.9 350,608.5 350.7,591.2 351,573.8 351.1,556.5 351.1,539.1 351,521.7 350.8,504.4 350.4,487 349.9,469.7 349.3,452.3 348.5,435 347.7,417.6 346.7,400.3 345.6,382.9 344.3,365.5 342.9,348.2 341.3,330.8 339.4,313.5 337.2,296.1 335,278.8 333,261.4Z"/>
<path d="M341,261.4 342.7,278.8 344.1,296.1 345.3,313.5 346.4,330.8 347.7,348.2 349,365.5 350.2,382.9 351.2,400.3 352.1,417.6 352.9,435 353.6,452.3 354.2,469.7 354.6,487 355,504.4 355.2,521.7 355.3,539.1 355.3,556.5 355.2,573.8 355,591.2 354.8,608.5 354.8,625.9 354.6,643.2 354.1,660.6 354.1,660.6 355.1,643.2 356.2,625.9 357.1,608.5 357.7,591.2 358,573.8 358.1,556.5 358.1,539.1 358,521.7 357.8,504.4 357.4,487 356.9,469.7 356.4,452.3 355.7,435 354.9,417.6 354,400.3 352.9,382.9 351.8,365.5 350.5,348.2 349,330.8 347.2,313.5 345.1,296.1 343,278.8 341,261.4Z"/>
<path d="M344.3,261.4 346.2,278.8 347.6,296.1 348.9,313.5 350.1,330.8 351.5,348.2 352.9,365.5 354.1,382.9 355.2,400.3 356.2,417.6 357.1,435 357.8,452.3 358.4,469.7 358.9,487 359.3,504.4 359.5,521.7 359.6,539.1 359.6,556.5 359.5,573.8 359.3,591.2 359.1,608.5 359.1,625.9 358.9,643.2 358.4,660.6 358.4,660.6 359.4,643.2 360.5,625.9 361.4,608.5 362,591.2 362.3,573.8 362.4,556.5 362.4,539.1 362.3,521.7 362.1,504.4 361.7,487 361.2,469.7 360.6,452.3 359.9,435 359,417.6 358,400.3 356.9,382.9 355.7,365.5 354.3,348.2 352.7,330.8 350.8,313.5 348.6,296.1 346.4,278.8 344.3,261.4Z"/>
<path d="M352.2,261.4 353.8,278.8 355.2,296.1 356.4,313.5 357.5,330.8 358.9,348.2 360.1,365.5 361.3,382.9 362.3,400.3 363.2,417.6 364,435 364.7,452.3 365.2,469.7 365.7,487 366.1,504.4 366.3,521.7 366.4,539.1 366.4,556.5 366.3,573.8 366,591.2 365.8,608.5 365.8,625.9 365.6,643.2 365.2,660.6 364.4,677.9 364.4,677.9 365.2,660.6 366.3,643.2 367.3,625.9 368.3,608.5 368.8,591.2 369.1,573.8 369.2,556.5 369.2,539.1 369.1,521.7 368.9,504.4 368.5,487 368.1,469.7 367.5,452.3 366.8,435 366,417.6 365.1,400.3 364.1,382.9 362.9,365.5 361.7,348.2 360.2,330.8 358.4,313.5 356.4,296.1 354.2,278.8 352.2,261.4Z"/>
<path d="M355.5,261.4 357.3,278.8 358.7,296.1 360,313.5 361.2,330.8 362.7,348.2 364,365.5 365.2,382.9 366.3,400.3 367.3,417.6 368.2,435 368.9,452.3 369.5,469.7 370,487 370.4,504.4 370.6,521.7 370.7,539.1 370.7,556.5 370.6,573.8 370.3,591.2 370.1,608.5 370.1,625.9 369.9,643.2 369.5,660.6 368.7,677.9 368.7,677.9 369.5,660.6 370.6,643.2 371.6,625.9 372.6,608.5 373.1,591.2 373.4,573.8 373.5,556.5 373.5,539.1 373.4,521.7 373.2,504.4 372.8,487 372.3,469.7 371.7,452.3 371,435 370.1,417.6 369.1,400.3 368,382.9 366.8,365.5 365.5,348.2 363.9,330.8 362,313.5 359.9,296.1 357.7,278.8 355.5,261.4Z"/>
<path d="M362.3,261.4 364,278.8 365.3,296.1 366.4,313.5 367.7,330.8 369,348.2 370.2,365.5 371.4,382.9 372.4,400.3 373.3,417.6 374.1,435 374.8,452.3 375.3,469.7 375.8,487 376.1,504.4 376.4,521.7 376.5,539.1 376.4,556.5 376.3,573.8 376.1,591.2 375.8,608.5 375.7,625.9 375.6,643.2 375.2,660.6 374.4,677.9 374.4,677.9 375.3,660.6 376.4,643.2 377.5,625.9 378.4,608.5 378.9,591.2 379.1,573.8 379.3,556.5 379.3,539.1 379.2,521.7 379,504.4 378.6,487 378.2,469.7 377.6,452.3 376.9,435 376.1,417.6 375.2,400.3 374.2,382.9 373.1,365.5 371.8,348.2 370.4,330.8 368.6,313.5 366.6,296.1 364.4,278.8 362.3,261.4Z"/>
<path d="M365.7,261.4 367.4,278.8 368.8,296.1 370.1,313.5 371.3,330.8 372.8,348.2 374.1,365.5 375.3,382.9 376.4,400.3 377.4,417.6 378.3,435 379,452.3 379.6,469.7 380.1,487 380.4,504.4 380.7,521.7 380.8,539.1 380.7,556.5 380.6,573.8 380.4,591.2 380.1,608.5 380,625.9 379.9,643.2 379.5,660.6 378.7,677.9 378.7,677.9 379.6,660.6 380.7,643.2 381.8,625.9 382.7,608.5 383.2,591.2 383.4,573.8 383.6,556.5 383.6,539.1 383.5,521.7 383.3,504.4 382.9,487 382.4,469.7 381.8,452.3 381.1,435 380.3,417.6 379.3,400.3 378.2,382.9 377,365.5 375.6,348.2 374.1,330.8 372.2,313.5 370.1,296.1 367.9,278.8 365.7,261.4Z"/>
<path d="M372.9,261.4 374.5,278.8 375.8,296.1 377,313.5 378.2,330.8 379.6,348.2 380.8,365.5 381.9,382.9 383,400.3 383.9,417.6 384.6,435 385.3,452.3 385.9,469.7 386.3,487 386.7,504.4 386.9,521.7 387,539.1 387,556.5 386.8,573.8 386.6,591.2 386.3,608.5 386.1,625.9 386,643.2 385.7,660.6 384.9,677.9 384.9,677.9 385.9,660.6 387,643.2 388.1,625.9 389,608.5 389.4,591.2 389.7,573.8 389.8,556.5 389.8,539.1 389.7,521.7 389.5,504.4 389.2,487 388.7,469.7 388.2,452.3 387.5,435 386.7,417.6 385.8,400.3 384.8,382.9 383.7,365.5 382.4,348.2 381,330.8 379.3,313.5 377.3,296.1 375.1,278.8 373,261.4Z"/>
<path d="M376.3,261.4 378,278.8 379.3,296.1 380.6,313.5 381.9,330.8 383.4,348.2 384.7,365.5 385.9,382.9 387,400.3 388,417.6 388.8,435 389.5,452.3 390.1,469.7 390.6,487 391,504.4 391.2,521.7 391.3,539.1 391.3,556.5 391.1,573.8 390.9,591.2 390.6,608.5 390.4,625.9 390.3,643.2 390,660.6 389.2,677.9 389.2,677.9 390.2,660.6 391.3,643.2 392.4,625.9 393.3,608.5 393.7,591.2 394,573.8 394.1,556.5 394.1,539.1 394,521.7 393.8,504.4 393.5,487 393,469.7 392.4,452.3 391.7,435 390.8,417.6 389.9,400.3 388.8,382.9 387.5,365.5 386.2,348.2 384.7,330.8 382.9,313.5 380.8,296.1 378.5,278.8 376.4,261.4Z"/>
<path d="M381.5,244.1 383.4,261.4 385,278.8 386.2,296.1 387.4,313.5 388.7,330.8 390,348.2 391.3,365.5 392.4,382.9 393.4,400.3 394.3,417.6 395.1,435 395.7,452.3 396.3,469.7 396.7,487 397,504.4 397.3,521.7 397.4,539.1 397.3,556.5 397.2,573.8 397,591.2 396.6,608.5 396.4,625.9 396.3,643.2 396,660.6 395.3,677.9 395.3,677.9 396.4,660.6 397.5,643.2 398.6,625.9 399.4,608.5 399.8,591.2 400.1,573.8 400.2,556.5 400.3,539.1 400.2,521.7 399.9,504.4 399.6,487 399.2,469.7 398.6,452.3 397.9,435 397.2,417.6 396.3,400.3 395.3,382.9 394.1,365.5 392.9,348.2 391.5,330.8 389.8,313.5 387.8,296.1 385.7,278.8 383.5,261.4 381.5,244.1Z"/>
<path d="M384.8,244.1 386.8,261.4 388.4,278.8 389.7,296.1 391,313.5 392.4,330.8 393.8,348.2 395.1,365.5 396.3,382.9 397.4,400.3 398.4,417.6 399.2,435 400,452.3 400.5,469.7 401,487 401.3,504.4 401.6,521.7 401.7,539.1 401.6,556.5 401.5,573.8 401.3,591.2 400.9,608.5 400.7,625.9 400.6,643.2 400.3,660.6 399.6,677.9 399.6,677.9 400.7,660.6 401.8,643.2 402.9,625.9 403.7,608.5 404.1,591.2 404.4,573.8 404.5,556.5 404.6,539.1 404.5,521.7 404.2,504.4 403.9,487 403.4,469.7 402.8,452.3 402.1,435 401.3,417.6 400.3,400.3 399.2,382.9 398,365.5 396.7,348.2 395.2,330.8 393.5,313.5 391.4,296.1 389.1,278.8 386.9,261.4 384.8,244.1Z"/>
<path d="M391.9,244.1 393.8,261.4 395.3,278.8 396.5,296.1 397.7,313.5 399,330.8 400.3,348.2 401.6,365.5 402.7,382.9 403.7,400.3 404.6,417.6 405.3,435 406,452.3 406.6,469.7 407,487 407.3,504.4 407.5,521.7 407.6,539.1 407.6,556.5 407.5,573.8 407.2,591.2 406.8,608.5 406.6,625.9 406.5,643.2 406.2,660.6 405.6,677.9 405.6,677.9 406.7,660.6 407.9,643.2 409,625.9 409.7,608.5 410.1,591.2 410.4,573.8 410.5,556.5 410.5,539.1 410.5,521.7 410.2,504.4 409.9,487 409.5,469.7 408.9,452.3 408.3,435 407.5,417.6 406.6,400.3 405.6,382.9 404.5,365.5 403.3,348.2 401.9,330.8 400.3,313.5 398.3,296.1 396.1,278.8 393.9,261.4 391.9,244.1Z"/>
<path d="M395.2,244.1 397.1,261.4 398.7,278.8 400,296.1 401.3,313.5 402.7,330.8 404.1,348.2 405.4,365.5 406.6,382.9 407.7,400.3 408.7,417.6 409.5,435 410.2,452.3 410.8,469.7 411.3,487 411.6,504.4 411.8,521.7 411.9,539.1 411.9,556.5 411.8,573.8 411.5,591.2 411.1,608.5 410.9,625.9 410.8,643.2 410.5,660.6 409.9,677.9 409.9,677.9 411,660.6 412.2,643.2 413.3,625.9 414,608.5 414.4,591.2 414.7,573.8 414.8,556.5 414.8,539.1 414.8,521.7 414.5,504.4 414.2,487 413.7,469.7 413.2,452.3 412.4,435 411.6,417.6 410.6,400.3 409.6,382.9 408.4,365.5 407,348.2 405.6,330.8 403.9,313.5 401.8,296.1 399.5,278.8 397.3,261.4 395.2,244.1Z"/>
<path d="M402.1,244.1 404,261.4 405.4,278.8 406.7,296.1 407.9,313.5 409.2,330.8 410.5,348.2 411.8,365.5 412.9,382.9 413.9,400.3 414.7,417.6 415.5,435 416.2,452.3 416.7,469.7 417.1,487 417.5,504.4 417.7,521.7 417.8,539.1 417.7,556.5 417.6,573.8 417.3,591.2 417,608.5 416.7,625.9 416.5,643.2 416.3,660.6 415.7,677.9 415.8,677.9 416.9,660.6 418.1,643.2 419.2,625.9 419.9,608.5 420.3,591.2 420.5,573.8 420.7,556.5 420.7,539.1 420.6,521.7 420.4,504.4 420.1,487 419.6,469.7 419.1,452.3 418.4,435 417.7,417.6 416.8,400.3 415.8,382.9 414.7,365.5 413.5,348.2 412.1,330.8 410.5,313.5 408.6,296.1 406.4,278.8 404.2,261.4 402.1,244.1Z"/>
<path d="M405.5,244.1 407.4,261.4 408.9,278.8 410.2,296.1 411.5,313.5 412.9,330.8 414.3,348.2 415.6,365.5 416.8,382.9 417.9,400.3 418.9,417.6 419.7,435 420.4,452.3 421,469.7 421.4,487 421.8,504.4 422,521.7 422.1,539.1 422,556.5 421.9,573.8 421.6,591.2 421.3,608.5 421,625.9 420.8,643.2 420.6,660.6 420,677.9 420.1,677.9 421.2,660.6 422.4,643.2 423.5,625.9 424.2,608.5 424.6,591.2 424.8,573.8 425,556.5 425,539.1 424.9,521.7 424.7,504.4 424.4,487 423.9,469.7 423.3,452.3 422.6,435 421.8,417.6 420.8,400.3 419.8,382.9 418.6,365.5 417.3,348.2 415.8,330.8 414.1,313.5 412.1,296.1 409.8,278.8 407.6,261.4 405.5,244.1Z"/>
<path d="M412.3,244.1 414.1,261.4 415.5,278.8 416.7,296.1 417.9,313.5 419.3,330.8 420.6,348.2 421.8,365.5 422.9,382.9 423.9,400.3 424.8,417.6 425.5,435 426.2,452.3 426.7,469.7 427.2,487 427.5,504.4 427.7,521.7 427.8,539.1 427.8,556.5 427.6,573.8 427.4,591.2 427,608.5 426.6,625.9 426.4,643.2 426.2,660.6 425.7,677.9 424.8,695.3 424.8,695.3 425.8,677.9 427,660.6 428.3,643.2 429.3,625.9 429.9,608.5 430.3,591.2 430.6,573.8 430.7,556.5 430.8,539.1 430.7,521.7 430.5,504.4 430.1,487 429.7,469.7 429.2,452.3 428.5,435 427.8,417.6 426.9,400.3 425.9,382.9 424.8,365.5 423.6,348.2 422.2,330.8 420.7,313.5 418.8,296.1 416.6,278.8 414.4,261.4 412.3,244.1Z"/>
<path d="M415.6,244.1 417.4,261.4 418.9,278.8 420.2,296.1 421.5,313.5 423,330.8 424.4,348.2 425.7,365.5 426.9,382.9 428,400.3 428.9,417.6 429.7,435 430.4,452.3 431,469.7 431.5,487 431.8,504.4 432,521.7 432.1,539.1 432.1,556.5 431.9,573.8 431.7,591.2 431.3,608.5 430.9,625.9 430.7,643.2 430.5,660.6 430,677.9 429.1,695.3 429.1,695.3 430.1,677.9 431.3,660.6 432.6,643.2 433.6,625.9 434.2,608.5 434.6,591.2 434.9,573.8 435,556.5 435.1,539.1 435,521.7 434.8,504.4 434.4,487 434,469.7 433.4,452.3 432.7,435 431.9,417.6 430.9,400.3 429.9,382.9 428.7,365.5 427.4,348.2 425.9,330.8 424.3,313.5 422.3,296.1 420,278.8 417.7,261.4 415.6,244.1Z"/>
<path d="M422.3,244.1 424,261.4 425.4,278.8 426.6,296.1 427.8,313.5 429.2,330.8 430.5,348.2 431.8,365.5 432.9,382.9 433.8,400.3 434.7,417.6 435.5,435 436.1,452.3 436.6,469.7 437.1,487 437.4,504.4 437.6,521.7 437.7,539.1 437.6,556.5 437.5,573.8 437.2,591.2 436.9,608.5 436.4,625.9 436.2,643.2 436,660.6 435.5,677.9 434.7,695.3 434.7,695.3 435.8,677.9 437,660.6 438.3,643.2 439.3,625.9 439.9,608.5 440.2,591.2 440.5,573.8 440.6,556.5 440.7,539.1 440.6,521.7 440.4,504.4 440.1,487 439.6,469.7 439.1,452.3 438.5,435 437.7,417.6 436.8,400.3 435.9,382.9 434.8,365.5 433.5,348.2 432.2,330.8 430.7,313.5 428.8,296.1 426.6,278.8 424.4,261.4 422.3,244.1Z"/>
<path d="M425.6,244.1 427.4,261.4 428.8,278.8 430.1,296.1 431.4,313.5 432.9,330.8 434.3,348.2 435.6,365.5 436.8,382.9 437.9,400.3 438.8,417.6 439.7,435 440.3,452.3 440.9,469.7 441.4,487 441.7,504.4 441.9,521.7 442,539.1 441.9,556.5 441.8,573.8 441.5,591.2 441.2,608.5 440.7,625.9 440.5,643.2 440.3,660.6 439.8,677.9 439,695.3 439,695.3 440.1,677.9 441.3,660.6 442.6,643.2 443.6,625.9 444.2,608.5 444.5,591.2 444.8,573.8 444.9,556.5 445,539.1 444.9,521.7 444.7,504.4 444.4,487 443.9,469.7 443.3,452.3 442.6,435 441.8,417.6 440.9,400.3 439.8,382.9 438.6,365.5 437.3,348.2 435.9,330.8 434.3,313.5 432.3,296.1 430.1,278.8 427.8,261.4 425.6,244.1Z"/>
<path d="M432.1,244.1 433.8,261.4 435.2,278.8 436.4,296.1 437.6,313.5 439,330.8 440.4,348.2 441.6,365.5 442.7,382.9 443.6,400.3 444.5,417.6 445.3,435 445.9,452.3 446.4,469.7 446.8,487 447.2,504.4 447.4,521.7 447.4,539.1 447.4,556.5 447.3,573.8 447,591.2 446.6,608.5 446.2,625.9 445.9,643.2 445.7,660.6 445.3,677.9 444.5,695.3 444.5,695.3 445.6,677.9 446.9,660.6 448.1,643.2 449.1,625.9 449.6,608.5 450,591.2 450.3,573.8 450.4,556.5 450.5,539.1 450.4,521.7 450.2,504.4 449.9,487 449.4,469.7 448.9,452.3 448.3,435 447.5,417.6 446.7,400.3 445.7,382.9 444.6,365.5 443.4,348.2 442.1,330.8 440.6,313.5 438.7,296.1 436.6,278.8 434.3,261.4 432.2,244.1Z"/>
<path d="M435.5,244.1 437.2,261.4 438.6,278.8 439.9,296.1 441.2,313.5 442.7,330.8 444.2,348.2 445.4,365.5 446.6,382.9 447.7,400.3 448.6,417.6 449.4,435 450.1,452.3 450.7,469.7 451.1,487 451.5,504.4 451.7,521.7 451.7,539.1 451.7,556.5 451.6,573.8 451.3,591.2 450.9,608.5 450.5,625.9 450.2,643.2 450,660.6 449.6,677.9 448.8,695.3 448.8,695.3 449.9,677.9 451.2,660.6 452.4,643.2 453.4,625.9 453.9,608.5 454.3,591.2 454.6,573.8 454.7,556.5 454.8,539.1 454.7,521.7 454.5,504.4 454.2,487 453.7,469.7 453.2,452.3 452.5,435 451.6,417.6 450.7,400.3 449.6,382.9 448.5,365.5 447.2,348.2 445.8,330.8 444.2,313.5 442.2,296.1 440,278.8 437.7,261.4 435.5,244.1Z"/>
<path d="M441.9,244.1 443.5,261.4 444.8,278.8 446.1,296.1 447.3,313.5 448.7,330.8 450.1,348.2 451.3,365.5 452.3,382.9 453.3,400.3 454.2,417.6 454.9,435 455.6,452.3 456.1,469.7 456.5,487 456.8,504.4 457,521.7 457.1,539.1 457.1,556.5 456.9,573.8 456.6,591.2 456.2,608.5 455.8,625.9 455.4,643.2 455.2,660.6 454.8,677.9 454.1,695.3 454.1,695.3 455.3,677.9 456.6,660.6 457.9,643.2 458.8,625.9 459.3,608.5 459.7,591.2 459.9,573.8 460.1,556.5 460.1,539.1 460.1,521.7 459.9,504.4 459.5,487 459.1,469.7 458.6,452.3 458,435 457.2,417.6 456.4,400.3 455.4,382.9 454.3,365.5 453.1,348.2 451.8,330.8 450.3,313.5 448.5,296.1 446.4,278.8 444.1,261.4 441.9,244.1Z"/>
<path d="M445.2,244.1 446.9,261.4 448.3,278.8 449.6,296.1 450.9,313.5 452.4,330.8 453.8,348.2 455.1,365.5 456.3,382.9 457.4,400.3 458.3,417.6 459.1,435 459.8,452.3 460.4,469.7 460.8,487 461.1,504.4 461.3,521.7 461.4,539.1 461.4,556.5 461.2,573.8 460.9,591.2 460.5,608.5 460.1,625.9 459.7,643.2 459.5,660.6 459.1,677.9 458.4,695.3 458.4,695.3 459.6,677.9 460.9,660.6 462.2,643.2 463.1,625.9 463.6,608.5 464,591.2 464.2,573.8 464.4,556.5 464.4,539.1 464.4,521.7 464.2,504.4 463.8,487 463.4,469.7 462.8,452.3 462.2,435 461.3,417.6 460.4,400.3 459.4,382.9 458.2,365.5 456.9,348.2 455.5,330.8 454,313.5 452,296.1 449.8,278.8 447.5,261.4 445.2,244.1Z"/>
<path d="M449.5,226.7 451.5,244.1 453.1,261.4 454.4,278.8 455.6,296.1 456.9,313.5 458.3,330.8 459.6,348.2 460.8,365.5 461.9,382.9 462.9,400.3 463.7,417.6 464.5,435 465.1,452.3 465.6,469.7 466,487 466.3,504.4 466.5,521.7 466.6,539.1 466.6,556.5 466.4,573.8 466.1,591.2 465.8,608.5 465.3,625.9 464.9,643.2 464.6,660.6 464.3,677.9 463.6,695.3 463.6,695.3 464.9,677.9 466.3,660.6 467.5,643.2 468.3,625.9 468.8,608.5 469.2,591.2 469.5,573.8 469.6,556.5 469.7,539.1 469.6,521.7 469.4,504.4 469.1,487 468.7,469.7 468.2,452.3 467.5,435 466.8,417.6 465.9,400.3 465,382.9 463.9,365.5 462.7,348.2 461.4,330.8 460,313.5 458.2,296.1 456.1,278.8 453.8,261.4 451.6,244.1 449.5,226.7Z"/>
<path d="M452.8,226.7 454.8,244.1 456.5,261.4 457.8,278.8 459.1,296.1 460.5,313.5 462,330.8 463.4,348.2 464.7,365.5 465.9,382.9 466.9,400.3 467.8,417.6 468.6,435 469.3,452.3 469.9,469.7 470.3,487 470.6,504.4 470.8,521.7 470.9,539.1 470.9,556.5 470.7,573.8 470.4,591.2 470.1,608.5 469.6,625.9 469.2,643.2 468.9,660.6 468.6,677.9 467.9,695.3 467.9,695.3 469.2,677.9 470.6,660.6 471.8,643.2 472.6,625.9 473.1,608.5 473.5,591.2 473.8,573.8 473.9,556.5 474,539.1 473.9,521.7 473.7,504.4 473.4,487 473,469.7 472.4,452.3 471.7,435 470.9,417.6 470,400.3 468.9,382.9 467.8,365.5 466.5,348.2 465.1,330.8 463.6,313.5 461.7,296.1 459.5,278.8 457.2,261.4 454.9,244.1 452.8,226.7Z"/>
<path d="M459,226.7 461,244.1 462.5,261.4 463.8,278.8 465,296.1 466.3,313.5 467.8,330.8 469.1,348.2 470.3,365.5 471.3,382.9 472.3,400.3 473.1,417.6 473.9,435 474.5,452.3 475,469.7 475.4,487 475.7,504.4 475.9,521.7 476,539.1 476,556.5 475.8,573.8 475.5,591.2 475.1,608.5 474.6,625.9 474.2,643.2 473.9,660.6 473.6,677.9 473,695.3 471.9,712.6 471.9,712.6 473.1,695.3 474.4,677.9 475.7,660.6 476.9,643.2 477.7,625.9 478.2,608.5 478.6,591.2 478.9,573.8 479.1,556.5 479.1,539.1 479,521.7 478.8,504.4 478.5,487 478.1,469.7 477.6,452.3 477,435 476.2,417.6 475.4,400.3 474.4,382.9 473.4,365.5 472.2,348.2 470.9,330.8 469.4,313.5 467.7,296.1 465.6,278.8 463.4,261.4 461.1,244.1 459,226.7Z"/>
<path d="M462.3,226.7 464.3,244.1 465.9,261.4 467.2,278.8 468.5,296.1 470,313.5 471.5,330.8 472.9,348.2 474.1,365.5 475.3,382.9 476.3,400.3 477.3,417.6 478.1,435 478.7,452.3 479.3,469.7 479.7,487 480,504.4 480.2,521.7 480.3,539.1 480.3,556.5 480.1,573.8 479.8,591.2 479.4,608.5 478.9,625.9 478.5,643.2 478.2,660.6 477.9,677.9 477.3,695.3 476.2,712.6 476.2,712.6 477.4,695.3 478.7,677.9 480,660.6 481.2,643.2 482,625.9 482.5,608.5 482.9,591.2 483.2,573.8 483.4,556.5 483.4,539.1 483.3,521.7 483.1,504.4 482.8,487 482.4,469.7 481.8,452.3 481.2,435 480.4,417.6 479.4,400.3 478.4,382.9 477.2,365.5 476,348.2 474.6,330.8 473.1,313.5 471.2,296.1 469.1,278.8 466.7,261.4 464.4,244.1 462.3,226.7Z"/>
<path d="M468.4,226.7 470.3,244.1 471.8,261.4 473.1,278.8 474.3,296.1 475.7,313.5 477.1,330.8 478.4,348.2 479.6,365.5 480.6,382.9 481.6,400.3 482.4,417.6 483.2,435 483.8,452.3 484.3,469.7 484.7,487 485,504.4 485.2,521.7 485.3,539.1 485.2,556.5 485.1,573.8 484.8,591.2 484.4,608.5 483.9,625.9 483.4,643.2 483.1,660.6 482.8,677.9 482.2,695.3 481.2,712.6 481.2,712.6 482.4,695.3 483.7,677.9 485.1,660.6 486.3,643.2 487,625.9 487.5,608.5 487.9,591.2 488.2,573.8 488.3,556.5 488.4,539.1 488.3,521.7 488.1,504.4 487.8,487 487.4,469.7 486.9,452.3 486.3,435 485.6,417.6 484.7,400.3 483.8,382.9 482.7,365.5 481.5,348.2 480.2,330.8 478.8,313.5 477.1,296.1 475,278.8 472.8,261.4 470.5,244.1 468.4,226.7Z"/>
<path d="M471.7,226.7 473.6,244.1 475.2,261.4 476.5,278.8 477.8,296.1 479.3,313.5 480.8,330.8 482.2,348.2 483.4,365.5 484.6,382.9 485.6,400.3 486.5,417.6 487.3,435 488,452.3 488.6,469.7 489,487 489.3,504.4 489.5,521.7 489.6,539.1 489.5,556.5 489.4,573.8 489.1,591.2 488.7,608.5 488.2,625.9 487.7,643.2 487.4,660.6 487.1,677.9 486.5,695.3 485.5,712.6 485.5,712.6 486.7,695.3 488,677.9 489.4,660.6 490.6,643.2 491.3,625.9 491.8,608.5 492.2,591.2 492.5,573.8 492.6,556.5 492.7,539.1 492.6,521.7 492.4,504.4 492.1,487 491.7,469.7 491.1,452.3 490.5,435 489.7,417.6 488.8,400.3 487.7,382.9 486.6,365.5 485.3,348.2 483.9,330.8 482.4,313.5 480.6,296.1 478.5,278.8 476.2,261.4 473.8,244.1 471.7,226.7Z"/>
<path d="M477.6,226.7 479.5,244.1 481,261.4 482.2,278.8 483.5,296.1 484.9,313.5 486.3,330.8 487.6,348.2 488.7,365.5 489.8,382.9 490.8,400.3 491.6,417.6 492.3,435 492.9,452.3 493.5,469.7 493.9,487 494.2,504.4 494.3,521.7 494.4,539.1 494.4,556.5 494.2,573.8 493.9,591.2 493.7,600 493.5,611.4 493.4,622.9 493.4,634.3 493.3,645.7 493.2,657.1 492.8,668.6 492.3,680 492.3,680 492.9,668.6 493.6,657.1 494.5,645.7 495.3,634.3 496,622.9 496.5,611.4 496.9,600 497.1,591.2 497.3,573.8 497.5,556.5 497.6,539.1 497.5,521.7 497.3,504.4 497,487 496.6,469.7 496.1,452.3 495.5,435 494.7,417.6 493.9,400.3 493,382.9 491.9,365.5 490.7,348.2 489.4,330.8 488,313.5 486.4,296.1 484.3,278.8 482.1,261.4 479.8,244.1 477.6,226.7Z"/>
<path d="M480.9,226.7 482.8,244.1 484.4,261.4 485.7,278.8 487,296.1 488.5,313.5 490,330.8 491.4,348.2 492.6,365.5 493.8,382.9 494.8,400.3 495.7,417.6 496.5,435 497.2,452.3 497.7,469.7 498.2,487 498.5,504.4 498.6,521.7 498.7,539.1 498.7,556.5 498.5,573.8 498.2,591.2 498,600 497.8,611.4 497.7,622.9 497.7,634.3 497.6,645.7 497.5,657.1 497.1,668.6 496.6,680 496.6,680 497.2,668.6 497.9,657.1 498.8,645.7 499.6,634.3 500.3,622.9 500.8,611.4 501.2,600 501.4,591.2 501.6,573.8 501.8,556.5 501.9,539.1 501.8,521.7 501.6,504.4 501.3,487 500.9,469.7 500.3,452.3 499.7,435 498.9,417.6 498,400.3 496.9,382.9 495.8,365.5 494.5,348.2 493.1,330.8 491.6,313.5 489.9,296.1 487.8,278.8 485.5,261.4 483.1,244.1 480.9,226.7Z"/>
<path d="M486.8,226.7 488.6,244.1 490,261.4 491.3,278.8 492.5,296.1 494,313.5 495.4,330.8 496.6,348.2 497.8,365.5 498.9,382.9 499.8,400.3 500.6,417.6 501.4,435 502,452.3 502.5,469.7 502.9,487 503.2,504.4 503.4,521.7 503.4,540 503.5,551.4 503.6,562.9 503.8,574.3 504,585.7 504.1,597.1 504,608.6 503.8,620 503.8,620 504.2,608.6 504.7,597.1 505.2,585.7 505.8,574.3 506.2,562.9 506.5,551.4 506.6,540 506.5,521.7 506.3,504.4 506.1,487 505.7,469.7 505.1,452.3 504.5,435 503.8,417.6 503,400.3 502,382.9 501,365.5 499.8,348.2 498.5,330.8 497.1,313.5 495.5,296.1 493.5,278.8 491.3,261.4 488.9,244.1 486.8,226.7Z" fill="#fff3b0" fill-opacity="0.8"/>
<path d="M490.1,226.7 491.9,244.1 493.4,261.4 494.7,278.8 496,296.1 497.6,313.5 499.1,330.8 500.4,348.2 501.7,365.5 502.8,382.9 503.9,400.3 504.8,417.6 505.5,435 506.2,452.3 506.8,469.7 507.2,487 507.5,504.4 507.7,521.7 507.7,540 507.8,551.4 507.9,562.9 508.1,574.3 508.3,585.7 508.4,597.1 508.3,608.6 508.1,620 508.1,620 508.5,608.6 509,597.1 509.5,585.7 510.1,574.3 510.5,562.9 510.8,551.4 510.9,540 510.8,521.7 510.6,504.4 510.4,487 509.9,469.7 509.4,452.3 508.7,435 507.9,417.6 507,400.3 506,382.9 504.9,365.5 503.6,348.2 502.2,330.8 500.7,313.5 499.1,296.1 497,278.8 494.6,261.4 492.3,244.1 490.1,226.7Z" fill="#fff3b0" fill-opacity="0.8"/>
<path d="M495.8,226.7 497.5,244.1 498.9,261.4 500.2,278.8 501.5,296.1 502.9,313.5 504.3,330.8 505.6,348.2 506.7,365.5 507.8,382.9 508.7,400.3 509.6,417.6 510.3,435 510.6,445 511.1,456.4 511.7,467.9 512.2,479.3 512.8,490.7 513.3,502.1 513.7,513.6 513.9,525 513.9,525 513.9,513.6 514,502.1 514.1,490.7 514.2,479.3 514.2,467.9 514.1,456.4 513.8,445 513.5,435 512.8,417.6 511.9,400.3 511,382.9 509.9,365.5 508.8,348.2 507.5,330.8 506.1,313.5 504.5,296.1 502.6,278.8 500.3,261.4 498,244.1 495.8,226.7Z" fill="#fff3b0" fill-opacity="0.5"/>
<path d="M499,226.7 500.9,244.1 502.3,261.4 503.6,278.8 505,296.1 506.5,313.5 508,330.8 509.4,348.2 510.6,365.5 511.8,382.9 512.8,400.3 513.7,417.6 514.5,435 514.9,445 515.3,456.4 515.9,467.9 516.5,479.3 517.1,490.7 517.6,502.1 518,513.6 518.2,525 518.2,525 518.2,513.6 518.3,502.1 518.4,490.7 518.5,479.3 518.5,467.9 518.4,456.4 518.1,445 517.7,435 516.9,417.6 516,400.3 515,382.9 513.8,365.5 512.6,348.2 511.2,330.8 509.7,313.5 508.1,296.1 506,278.8 503.7,261.4 501.3,244.1 499.1,226.7Z" fill="#fff3b0" fill-opacity="0.5"/></g></g>
</g>
<clipPath id="pc0"><rect x="107.30" y="194.0" width="66.60" height="534.0"/></clipPath>
<clipPath id="pc1"><rect x="179.00" y="194.0" width="66.60" height="534.0"/></clipPath>
<clipPath id="pc2"><rect x="250.70" y="194.0" width="66.60" height="534.0"/></clipPath>
<clipPath id="pc3"><rect x="322.40" y="194.0" width="66.60" height="534.0"/></clipPath>
<clipPath id="pc4"><rect x="394.10" y="194.0" width="66.60" height="534.0"/></clipPath>
<clipPath id="pc5"><rect x="465.80" y="194.0" width="66.60" height="534.0"/></clipPath>
<clipPath id="pc6"><rect x="537.50" y="194.0" width="66.60" height="534.0"/></clipPath>
<clipPath id="pc7"><rect x="609.20" y="194.0" width="66.60" height="534.0"/></clipPath>
<linearGradient id="dk" gradientUnits="userSpaceOnUse" x1="0" y1="540" x2="0" y2="728.0"><stop offset="0" stop-color="#dc1008" stop-opacity="0"/><stop offset="0.55" stop-color="#dc1008" stop-opacity="0.55"/><stop offset="1" stop-color="#dc1008" stop-opacity="0.8"/></linearGradient></defs>
<rect x="1.2" y="1" width="1242.6" height="29" fill="#eeeeee"/>
<rect x="1.2" y="849" width="1242.6" height="19.6" fill="#eeeeee"/>
<text transform="translate(6.20,22.90) scale(0.9942,1)" x="0.44 11.11 21.77 32.44 42.76 49.16 59.82 70.14 76.54 87.2 97.81 103.29 107.83 118.45 128.82 139.22 150.82 161.44 172.08 183.02" y="0" font-size="17.58">2025-01-20: ESPRESSO</text>
<text transform="translate(336.15,23.00) scale(1.1101,1)" x="0.38 4.45 10.99 18.02 25.11 28.83 31.76 39.15 42.74" y="0" font-size="13.19">type info</text>
<text transform="translate(628.70,22.80) scale(1.0862,1)" x="-0.3 5.87 13.5 17.47 21.72 29.02 36.33 40.13 43.17 50.68 54.39" y="0" font-size="13.19">set-up info</text>
<text transform="translate(6.20,45.20) scale(0.9483,1)" x="0.06 10.19 19.65 23.4 33.4 41.33 45.11 52.21 61.16" y="0" font-size="13.19">ORIGFILE:</text>
<text transform="translate(74.70,45.90) scale(0.9632,1)" x="-0.3 7.92 15.95 24.01 32.98 41.2 49.44 57.93 67.75 74.38 82.98 86.81 96.33 106.43 113.42 122.03 131.42 140.27 146.88 155.08 162.55 170.77 179.03 187.28 194.65 202.03 210.28 218.54 226.8 234.82 239.17 243.62 247.6 252.06" y="0" font-size="13.19">ESPRESSO_SINGLEHR_EFF020_0001.fits</text>
<text transform="translate(6.20,61.70) scale(0.9420,1)" x="0.14 8.93 18.17 27.35 35.32 39.14 46.3 55.29" y="0" font-size="13.19">ARCFILE:</text>
<text transform="translate(74.70,61.70) scale(1.0453,1)" x="-0.62 6.95 14.35 21.75 30.04 38.29 42.16 49.77 57.37 64.98 72.41 76.9 84.51 91.95 96.44 104.04 111.14 118.96 126.56 134.22 138.2 145.81 153.46 157.44 165.05 172.59 176.46 184.07 191.68 199.22 203.22 207.35 210.99 214.99" y="0" font-size="13.19">ESPRE.2025-01-20T23:13:47.148.fits</text>
<text transform="translate(6.20,79.40) scale(1.0741,1)" x="0.2 4.68 11.91 20.68 27.7 31.96 38.73 46.01 53.38" y="0" font-size="13.19">raw_type:</text>
<text transform="translate(74.70,80.60) scale(0.9400,1)" x="-0.2 8.2 15.85 23.36 30.5 39.61" y="0" font-size="13.19">EFF_AB</text>
<text transform="translate(6.20,97.80) scale(1.0244,1)" x="0.21 7.81 14.59 21.37 28.25 31.48 38.77 45.13 51.82" y="0" font-size="13.19">do_class:</text>
<text transform="translate(74.70,97.90) scale(0.9400,1)" x="-0.2 8.2 15.85 23.36 30.5 39.61" y="0" font-size="13.19">EFF_AB</text>
<text transform="translate(6.20,113.30) scale(1.0874,1)" x="-0.13 7.18 14.3 18.25 25.43 32.44 38.86 41.77 48.93 56.35" y="0" font-size="13.19">extension:</text>
<text x="74.70" y="113.30" font-size="13.19">2</text>
<text transform="translate(336.15,44.70) scale(0.9559,1)" x="0.27 9.61 17.74 27.29 31 40.41 49.24 57.2 67.77" y="0" font-size="13.19">DPR.CATG:</text>
<text transform="translate(404.60,44.70) scale(0.9578,1)" x="-0.21 9.18 18.01 25.4 29.24" y="0" font-size="13.19">CALIB</text>
<text transform="translate(336.15,62.10) scale(0.9400,1)" x="0.36 9.85 18.12 27.78 31.76 39.51 47.58 55.79 64.8" y="0" font-size="13.19">DPR.TYPE:</text>
<text transform="translate(404.60,62.10) scale(0.9400,1)" x="-0.2 8.2 15.85 23.98 27.75 36.33 44.75 53.49 57.26 65.84 74.26" y="0" font-size="13.19">EFF,SKY,SKY</text>
<text transform="translate(336.15,79.50) scale(0.9525,1)" x="0.29 9.66 17.82 27.39 31.29 39.07 47.44 56.95 67.03" y="0" font-size="13.19">DPR.TECH:</text>
<text transform="translate(404.60,79.50) scale(0.9400,1)" x="-0.2 8.28 17.93 27.49 36.13 43.53 50.71" y="0" font-size="13.19">ECHELLE</text>
<text transform="translate(336.15,96.90) scale(0.9761,1)" x="-0.12 7.29 15.44 22.88 26.81 30.69 40.71" y="0" font-size="13.19">TPL.ID:</text>
<text transform="translate(404.60,96.90) scale(0.9842,1)" x="-0.39 7.66 15.52 23.4 32.19 40.23 48.29 56.59 66.23 73.08 79.99 83.57 91.63 99.63 103.1 110.68 119.87 128.55 135.59 142.6 150.46 153.2 160.05 167.04 174.48 181.93 186.3 189.76 197.97" y="0" font-size="13.19">ESPRESSO_singleHR_cal_skyflat</text>
<text transform="translate(628.70,42.80) scale(0.9772,1)" x="0.05 3.16 10.84 18.06 21.3 30.4 39.01 46.79 54.09" y="0" font-size="10.99">INS.MODE:</text>
<text transform="translate(759.50,42.80) scale(0.9434,1)" x="-0.16 7.11 10.43 18.53 27.11 33.07 40.4 48.39" y="0" font-size="10.99">SINGLEHR</text>
<text transform="translate(628.70,55.70) scale(0.9851,1)" x="0.1 7.82 14.7 21.44 24.61 31.94 35.02 42.9 50.44" y="0" font-size="10.99">DET.BINX:</text>
<text x="759.50" y="55.70" font-size="10.99">1</text>
<text transform="translate(628.70,68.70) scale(0.9707,1)" x="0.16 7.99 14.97 21.78 25.03 32.44 35.59 43.19 50.42" y="0" font-size="10.99">DET.BINY:</text>
<text x="759.50" y="68.70" font-size="10.99">1</text>
<text transform="translate(628.70,81.70) scale(0.9544,1)" x="0.02 8.44 16.02 23.35 26.4 33.63 41.75 49.23 56.62 62.5 69.85 78.23 81.28 87.56 94.99" y="0" font-size="10.99">OCS.ENABLED.FE:</text>
<text x="759.50" y="81.70" font-size="10.99">3</text>
<text transform="translate(6.20,863.90) scale(1.0502,1)" x="0.09 6.28 12.46 20.48 26.8 30.66 36.86 43.12 46.31 52.71 58.44 61.18 68.85 76.43 79.68 82.87 90.98 99.1 107.17 110.27 116.22 121.53 127.67 130.75 137.06 141.02 147.37 150.33 157.52" y="0" font-size="10.99">powered by QC: www.eso.org/HC</text>
<text transform="translate(935.77,863.90) scale(1.0756,1)" x="-0.09 5.49 9.23 15.18 21.58 24.93 30.98 37.13 40.21 46.46 52.09 55.17 61.22 66 71.64 75.37 81.39 89.33 95.59 97.93 103.22 109.37 112.45 118.7 124.33 127.51 133.15 139.3 142.4 148.55 151.64 157.79 160.76 166.8 172.94 176.03 182.19 188.36 194.52 200.58 204.18 210.34 216.4 220 226.17 231.91 238.25 244.41 250.65 253.84 260 266.24 269.43 275.59" y="0" font-size="10.99">created by qc_rawdisp.py v1.2.3 on 2025-01-21T00:28:41</text>
<rect x="106.0" y="194.0" width="570.0" height="534.0" fill="#fc1a04"/>
<g clip-path="url(#pc0)"><use href="#tr" x="107.30" y="0"/></g>
<g clip-path="url(#pc1)"><use href="#tr" x="112.40" y="0"/></g>
<g clip-path="url(#pc2)"><use href="#tr" x="117.50" y="0"/></g>
<g clip-path="url(#pc3)"><use href="#tr" x="122.60" y="0"/></g>
<g clip-path="url(#pc4)"><use href="#tr" x="127.70" y="0"/></g>
<g clip-path="url(#pc5)"><use href="#tr" x="132.80" y="0"/></g>
<g clip-path="url(#pc6)"><use href="#tr" x="137.90" y="0"/></g>
<g clip-path="url(#pc7)"><use href="#tr" x="143.00" y="0"/></g>
<path d="M665.1,540 665,557.1 664.5,574.2 663,591.3 660.7,608.4 657.8,625.5 654.7,642.5 651.5,659.6 648.4,676.7 645.7,693.8 643.7,710.9 642.3,728 676,728 676,540Z" fill="url(#dk)"/>
<rect x="173.90" y="194.0" width="5.10" height="534.0" fill="#ee0603"/>
<rect x="245.60" y="194.0" width="5.10" height="534.0" fill="#ee0603"/>
<rect x="317.30" y="194.0" width="5.10" height="534.0" fill="#ee0603"/>
<rect x="389.00" y="194.0" width="5.10" height="534.0" fill="#ee0603"/>
<rect x="460.70" y="194.0" width="5.10" height="534.0" fill="#ee0603"/>
<rect x="532.40" y="194.0" width="5.10" height="534.0" fill="#ee0603"/>
<rect x="604.10" y="194.0" width="5.10" height="534.0" fill="#ee0603"/>
<rect x="106.0" y="194.0" width="1.30" height="534.0" fill="#ee0603"/>
<rect x="106.0" y="458.4" width="570.0" height="3.5" fill="#ee0603"/>
<line x1="100" y1="642.5" x2="683" y2="642.5" stroke="#0a00e6" stroke-width="1.1"/>
<rect x="106.0" y="194.0" width="570.0" height="534.0" fill="none" stroke="#000" stroke-width="1.9"/>
<line x1="106.00" y1="728.0" x2="106.00" y2="734.6" stroke="#000" stroke-width="1.8"/>
<text x="106.00" y="751.20" font-size="10.25" text-anchor="middle">0</text>
<line x1="106.0" y1="728.00" x2="99.1" y2="728.00" stroke="#000" stroke-width="1.8"/>
<text x="91.40" y="731.70" font-size="10.25" text-anchor="end">0</text>
<line x1="220.92" y1="728.0" x2="220.92" y2="734.6" stroke="#000" stroke-width="1.8"/>
<text transform="translate(208.55,751.20) scale(1.0843,1)" x="0 5.7 11.41 17.11" y="0" font-size="10.25">2000</text>
<line x1="106.0" y1="613.08" x2="99.1" y2="613.08" stroke="#000" stroke-width="1.8"/>
<text transform="translate(66.66,616.78) scale(1.0843,1)" x="0 5.7 11.41 17.11" y="0" font-size="10.25">2000</text>
<line x1="335.84" y1="728.0" x2="335.84" y2="734.6" stroke="#000" stroke-width="1.8"/>
<text transform="translate(323.47,751.20) scale(1.0843,1)" x="0 5.7 11.41 17.11" y="0" font-size="10.25">4000</text>
<line x1="106.0" y1="498.16" x2="99.1" y2="498.16" stroke="#000" stroke-width="1.8"/>
<text transform="translate(66.66,501.86) scale(1.0843,1)" x="0 5.7 11.41 17.11" y="0" font-size="10.25">4000</text>
<line x1="450.76" y1="728.0" x2="450.76" y2="734.6" stroke="#000" stroke-width="1.8"/>
<text transform="translate(438.39,751.20) scale(1.0843,1)" x="0 5.7 11.41 17.11" y="0" font-size="10.25">6000</text>
<line x1="106.0" y1="383.24" x2="99.1" y2="383.24" stroke="#000" stroke-width="1.8"/>
<text transform="translate(66.66,386.94) scale(1.0843,1)" x="0 5.7 11.41 17.11" y="0" font-size="10.25">6000</text>
<line x1="565.68" y1="728.0" x2="565.68" y2="734.6" stroke="#000" stroke-width="1.8"/>
<text transform="translate(553.31,751.20) scale(1.0843,1)" x="0 5.7 11.41 17.11" y="0" font-size="10.25">8000</text>
<line x1="106.0" y1="268.32" x2="99.1" y2="268.32" stroke="#000" stroke-width="1.8"/>
<text transform="translate(66.66,272.02) scale(1.0843,1)" x="0 5.7 11.41 17.11" y="0" font-size="10.25">8000</text>
<text x="391.60" y="768.90" font-size="10.99" text-anchor="middle">X</text>
<text transform="translate(54.10,460.80) rotate(-90)" text-anchor="middle" font-size="10.99">Y</text>
<!--CBAR-->
<rect x="712.0" y="113.0" width="35.10000000000002" height="695.9" fill="url(#hot)" stroke="#111" stroke-width="1.8"/>
<line x1="747.1" y1="735.00" x2="753.9" y2="735.00" stroke="#000" stroke-width="1.8"/>
<text transform="translate(762.00,738.70) scale(1.0843,1)" x="0 5.7 11.41" y="0" font-size="10.25">950</text>
<line x1="747.1" y1="628.80" x2="753.9" y2="628.80" stroke="#000" stroke-width="1.8"/>
<text transform="translate(762.00,632.50) scale(1.0843,1)" x="0 5.7 11.41 17.11" y="0" font-size="10.25">1000</text>
<line x1="747.1" y1="522.60" x2="753.9" y2="522.60" stroke="#000" stroke-width="1.8"/>
<text transform="translate(762.00,526.30) scale(1.0843,1)" x="0 5.7 11.41 17.11" y="0" font-size="10.25">1050</text>
<line x1="747.1" y1="416.40" x2="753.9" y2="416.40" stroke="#000" stroke-width="1.8"/>
<text transform="translate(762.00,420.10) scale(1.0843,1)" x="0 5.7 11.41 17.11" y="0" font-size="10.25">1100</text>
<line x1="747.1" y1="310.20" x2="753.9" y2="310.20" stroke="#000" stroke-width="1.8"/>
<text transform="translate(762.00,313.90) scale(1.0843,1)" x="0 5.7 11.41 17.11" y="0" font-size="10.25">1150</text>
<line x1="747.1" y1="204.00" x2="753.9" y2="204.00" stroke="#000" stroke-width="1.8"/>
<text transform="translate(762.00,207.70) scale(1.0843,1)" x="0 5.7 11.41 17.11" y="0" font-size="10.25">1200</text>
<clipPath id="cp1"><rect x="911.0" y="112.9" width="274.20000000000005" height="120.69999999999999"/></clipPath>
<path d="M911.0,232.6 L1039.15,232.6 L1039.15,118.65 L1045.0,118.65 L1045.0,123.7 L1050.2,123.7 L1050.2,134.6 L1055.9,134.6 L1055.9,142.8 L1061.1,142.8 L1061.1,145.8 L1066.9,145.8 L1066.9,148.0 L1072.05,148.0 L1072.05,149.8 L1083.0,149.8 L1083.0,150.9 L1089.0,150.9 L1089.0,151.8 L1104.8,151.8 L1104.8,152.8 L1182.0,152.8 L1182.0,126.85 L1186,126.85" fill="none" stroke="#0000ff" stroke-width="1.4" stroke-linejoin="miter" clip-path="url(#cp1)"/>
<rect x="911.0" y="112.9" width="274.20" height="119.70" fill="none" stroke="#000" stroke-width="1.9"/>
<line x1="911.0" y1="232.40" x2="904.2" y2="232.40" stroke="#000" stroke-width="1.8"/>
<text x="896.20" y="236.10" font-size="10.25" text-anchor="end">0</text>
<line x1="911.0" y1="202.80" x2="904.2" y2="202.80" stroke="#000" stroke-width="1.8"/>
<text x="896.20" y="206.50" font-size="10.25" text-anchor="end">2</text>
<line x1="911.0" y1="173.20" x2="904.2" y2="173.20" stroke="#000" stroke-width="1.8"/>
<text x="896.20" y="176.90" font-size="10.25" text-anchor="end">4</text>
<line x1="911.0" y1="143.60" x2="904.2" y2="143.60" stroke="#000" stroke-width="1.8"/>
<text x="896.20" y="147.30" font-size="10.25" text-anchor="end">6</text>
<line x1="911.0" y1="114.00" x2="904.2" y2="114.00" stroke="#000" stroke-width="1.8"/>
<text x="896.20" y="117.70" font-size="10.25" text-anchor="end">8</text>
<line x1="939.24" y1="232.6" x2="939.24" y2="239.4" stroke="#000" stroke-width="1.8"/>
<text transform="translate(925.12,256.10) scale(1.0769,1)" x="-0.08 3.28 9.02 14.76 20.5" y="0" font-size="10.25">-2000</text>
<line x1="974.57" y1="232.6" x2="974.57" y2="239.4" stroke="#000" stroke-width="1.8"/>
<line x1="1009.90" y1="232.6" x2="1009.90" y2="239.4" stroke="#000" stroke-width="1.8"/>
<text x="1009.90" y="256.10" font-size="10.25" text-anchor="middle">0</text>
<line x1="1045.23" y1="232.6" x2="1045.23" y2="239.4" stroke="#000" stroke-width="1.8"/>
<line x1="1080.56" y1="232.6" x2="1080.56" y2="239.4" stroke="#000" stroke-width="1.8"/>
<text transform="translate(1068.19,256.10) scale(1.0843,1)" x="0 5.7 11.41 17.11" y="0" font-size="10.25">2000</text>
<line x1="1115.89" y1="232.6" x2="1115.89" y2="239.4" stroke="#000" stroke-width="1.8"/>
<line x1="1151.22" y1="232.6" x2="1151.22" y2="239.4" stroke="#000" stroke-width="1.8"/>
<text transform="translate(1138.85,256.10) scale(1.0843,1)" x="0 5.7 11.41 17.11" y="0" font-size="10.25">4000</text>
<text transform="translate(1030.19,273.60) scale(1.0753,1)" x="-0.08 5.24 11.27 17.41 23.91 27.12" y="0" font-size="10.99">counts</text>
<text transform="translate(877.70,173.60) rotate(-90) scale(1.0862,1)" x="-32.89 -30.46 -24.48 -18.38 -15.17 -11.81 -8.11 -2.12 3.97 9.96 15.95 21.94 27.41" y="0" font-size="10.99">log frequency</text>
<text transform="translate(1193.90,175.00) rotate(90) scale(1.1016,1)" x="-42.52 -36.37 -34.12 -28.58 -25.36 -19.47 -13.3 -9.68 -3.7 5.47 8.51 12.13 18.04 24.34 27.56 33.61 36.24 38.79" y="0" font-size="10.99">histogram (detail)</text>
<path d="M911.0,404.7 L924.95,404.7 L924.95,371.9 L930.55,371.9 L930.55,290.8 L936.15,290.8 L936.15,313 L941.75,313 L941.75,314 L947.35,314 L947.35,314 L952.95,314 L952.95,314.9 L958.55,314.9 L958.55,315.9 L964.15,315.9 L964.15,316.9 L969.75,316.9 L969.75,317.8 L975.35,317.8 L975.35,317.8 L980.95,317.8 L980.95,318.8 L986.55,318.8 L986.55,319.8 L992.15,319.8 L992.15,320.7 L997.75,320.7 L997.75,321.8 L1003.35,321.8 L1003.35,322.65 L1008.95,322.65 L1008.95,326.8 L1014.55,326.8 L1014.55,332.8 L1020.15,332.8 L1020.15,340.8 L1025.75,340.8 L1025.75,353.9 L1031.35,353.9 L1031.35,384.9 L1036.95,384.9 L1036.95,404.7 L1185.2,404.7" fill="none" stroke="#0000ff" stroke-width="1.4" stroke-linejoin="miter"/>
<rect x="911.0" y="284.9" width="274.20" height="119.80" fill="none" stroke="#000" stroke-width="1.9"/>
<line x1="911.0" y1="404.70" x2="904.2" y2="404.70" stroke="#000" stroke-width="1.8"/>
<text x="896.20" y="408.40" font-size="10.25" text-anchor="end">0</text>
<line x1="911.0" y1="375.82" x2="904.2" y2="375.82" stroke="#000" stroke-width="1.8"/>
<text x="896.20" y="379.52" font-size="10.25" text-anchor="end">2</text>
<line x1="911.0" y1="346.94" x2="904.2" y2="346.94" stroke="#000" stroke-width="1.8"/>
<text x="896.20" y="350.64" font-size="10.25" text-anchor="end">4</text>
<line x1="911.0" y1="318.06" x2="904.2" y2="318.06" stroke="#000" stroke-width="1.8"/>
<text x="896.20" y="321.76" font-size="10.25" text-anchor="end">6</text>
<line x1="911.0" y1="289.18" x2="904.2" y2="289.18" stroke="#000" stroke-width="1.8"/>
<text x="896.20" y="292.88" font-size="10.25" text-anchor="end">8</text>
<line x1="929.40" y1="404.7" x2="929.40" y2="411.5" stroke="#000" stroke-width="1.8"/>
<text x="929.40" y="428.10" font-size="10.25" text-anchor="middle">0</text>
<line x1="966.62" y1="404.7" x2="966.62" y2="411.5" stroke="#000" stroke-width="1.8"/>
<line x1="1003.84" y1="404.7" x2="1003.84" y2="411.5" stroke="#000" stroke-width="1.8"/>
<text transform="translate(988.38,428.10) scale(1.0843,1)" x="0 5.7 11.41 17.11 22.81" y="0" font-size="10.25">20000</text>
<line x1="1041.06" y1="404.7" x2="1041.06" y2="411.5" stroke="#000" stroke-width="1.8"/>
<line x1="1078.28" y1="404.7" x2="1078.28" y2="411.5" stroke="#000" stroke-width="1.8"/>
<text transform="translate(1062.82,428.10) scale(1.0843,1)" x="0 5.7 11.41 17.11 22.81" y="0" font-size="10.25">40000</text>
<line x1="1115.50" y1="404.7" x2="1115.50" y2="411.5" stroke="#000" stroke-width="1.8"/>
<line x1="1152.72" y1="404.7" x2="1152.72" y2="411.5" stroke="#000" stroke-width="1.8"/>
<text transform="translate(1137.26,428.10) scale(1.0843,1)" x="0 5.7 11.41 17.11 22.81" y="0" font-size="10.25">60000</text>
<text transform="translate(1030.19,445.60) scale(1.0753,1)" x="-0.08 5.24 11.27 17.41 23.91 27.12" y="0" font-size="10.99">counts</text>
<text transform="translate(877.70,345.80) rotate(-90) scale(1.0862,1)" x="-32.89 -30.46 -24.48 -18.38 -15.17 -11.81 -8.11 -2.12 3.97 9.96 15.95 21.94 27.41" y="0" font-size="10.99">log frequency</text>
<text transform="translate(1193.90,349.30) rotate(90) scale(1.1050,1)" x="-36.42 -30.28 -28.04 -22.52 -19.31 -13.44 -7.28 -3.68 2.28 11.43 14.46 18.27 21.38 27.52 30.14 32.68" y="0" font-size="10.99">histogram (full)</text>
<g shape-rendering="auto">
<rect x="913.74" y="516.6" width="255.86" height="61.70" fill="#0000ff"/>
<rect x="918.62" y="516.6" width="4.56" height="60.70" fill="#fff"/>
<rect x="928.02" y="516.6" width="4.32" height="60.70" fill="#fff"/>
<rect x="937.27" y="516.6" width="4.08" height="60.70" fill="#fff"/>
<rect x="948.85" y="516.6" width="3.85" height="60.70" fill="#fff"/>
<rect x="957.64" y="516.6" width="3.62" height="60.70" fill="#fff"/>
<rect x="966.08" y="516.6" width="3.41" height="60.70" fill="#fff"/>
<rect x="974.04" y="516.6" width="3.20" height="60.70" fill="#fff"/>
<rect x="984.43" y="516.6" width="3.00" height="60.70" fill="#fff"/>
<rect x="992.43" y="516.6" width="2.80" height="60.70" fill="#fff"/>
<rect x="1000.08" y="516.6" width="2.60" height="60.70" fill="#fff"/>
<rect x="1007.19" y="516.6" width="2.42" height="60.70" fill="#fff"/>
<rect x="1016.74" y="516.6" width="2.24" height="60.70" fill="#fff"/>
<rect x="1023.97" y="516.6" width="2.05" height="60.70" fill="#fff"/>
<rect x="1030.85" y="516.6" width="1.88" height="60.70" fill="#fff"/>
<rect x="1037.60" y="516.6" width="1.70" height="60.70" fill="#fff"/>
<rect x="1044.37" y="516.6" width="1.53" height="60.70" fill="#fff"/>
<rect x="1053.60" y="516.6" width="1.37" height="60.70" fill="#fff"/>
<rect x="1060.01" y="516.6" width="1.27" height="60.70" fill="#fff"/>
<rect x="1066.03" y="516.6" width="1.18" height="60.70" fill="#fff"/>
<rect x="1071.98" y="516.6" width="1.08" height="60.70" fill="#fff"/>
<rect x="1077.65" y="516.6" width="1.00" height="60.70" fill="#fff"/>
<rect x="1085.63" y="516.6" width="0.91" height="60.70" fill="#fff"/>
<rect x="1091.17" y="516.6" width="0.82" height="60.70" fill="#fff"/>
<rect x="1096.55" y="516.6" width="0.74" height="60.70" fill="#fff"/>
<rect x="1101.64" y="516.6" width="0.66" height="60.70" fill="#fff"/>
<rect x="1106.59" y="516.6" width="0.58" height="60.70" fill="#fff"/>
<rect x="1111.63" y="516.6" width="0.50" height="60.70" fill="#fff"/>
<rect x="1119.04" y="516.6" width="0.42" height="60.70" fill="#fff"/>
<rect x="1123.95" y="516.6" width="0.34" height="60.70" fill="#fff"/>
<rect x="1128.80" y="516.6" width="0.27" height="60.70" fill="#fff"/>
<rect x="1133.60" y="516.6" width="0.19" height="60.70" fill="#fff"/>
<rect x="942.84" y="516.6" width="3.44" height="60.70" fill="#fff"/>
<rect x="977.09" y="516.6" width="3.44" height="60.70" fill="#fff"/>
<rect x="1011.34" y="516.6" width="3.44" height="60.70" fill="#fff"/>
<rect x="1045.59" y="516.6" width="3.44" height="60.70" fill="#fff"/>
<rect x="1079.85" y="516.6" width="3.44" height="60.70" fill="#fff"/>
<rect x="1114.10" y="516.6" width="3.44" height="60.70" fill="#fff"/>
<rect x="1148.35" y="516.6" width="3.44" height="60.70" fill="#fff"/>
<path d="M911,578.4 L1169.6,578.4 L1171,574.6 L1174,577.2 L1178,578.0 L1185.2,578.6" fill="none" stroke="#0000ff" stroke-width="1.7"/>
</g>
<rect x="911.0" y="516.6" width="274.20" height="120.10" fill="none" stroke="#000" stroke-width="1.9"/>
<line x1="911.0" y1="624.85" x2="904.2" y2="624.85" stroke="#000" stroke-width="1.8"/>
<text transform="translate(863.32,628.55) scale(1.1200,1)" x="0.64 7.18 12.7 18.22 23.75" y="0" font-size="10.25">−2000</text>
<line x1="911.0" y1="593.85" x2="904.2" y2="593.85" stroke="#000" stroke-width="1.8"/>
<text x="896.20" y="597.55" font-size="10.25" text-anchor="end">0</text>
<line x1="911.0" y1="562.85" x2="904.2" y2="562.85" stroke="#000" stroke-width="1.8"/>
<text transform="translate(871.46,566.55) scale(1.0843,1)" x="0 5.7 11.41 17.11" y="0" font-size="10.25">2000</text>
<line x1="911.0" y1="531.85" x2="904.2" y2="531.85" stroke="#000" stroke-width="1.8"/>
<text transform="translate(871.46,535.55) scale(1.0843,1)" x="0 5.7 11.41 17.11" y="0" font-size="10.25">4000</text>
<line x1="910.90" y1="636.7" x2="910.90" y2="643.5" stroke="#000" stroke-width="1.8"/>
<text x="910.90" y="660.20" font-size="10.25" text-anchor="middle">0</text>
<line x1="965.80" y1="636.7" x2="965.80" y2="643.5" stroke="#000" stroke-width="1.8"/>
<text transform="translate(953.43,660.20) scale(1.0843,1)" x="0 5.7 11.41 17.11" y="0" font-size="10.25">2000</text>
<line x1="1020.70" y1="636.7" x2="1020.70" y2="643.5" stroke="#000" stroke-width="1.8"/>
<text transform="translate(1008.33,660.20) scale(1.0843,1)" x="0 5.7 11.41 17.11" y="0" font-size="10.25">4000</text>
<line x1="1075.60" y1="636.7" x2="1075.60" y2="643.5" stroke="#000" stroke-width="1.8"/>
<text transform="translate(1063.23,660.20) scale(1.0843,1)" x="0 5.7 11.41 17.11" y="0" font-size="10.25">6000</text>
<line x1="1130.50" y1="636.7" x2="1130.50" y2="643.5" stroke="#000" stroke-width="1.8"/>
<text transform="translate(1118.13,660.20) scale(1.0843,1)" x="0 5.7 11.41 17.11" y="0" font-size="10.25">8000</text>
<text x="1047.30" y="677.70" font-size="10.99" text-anchor="middle">X</text>
<text transform="translate(851.20,577.70) rotate(-90) scale(1.0753,1)" x="-16.28 -10.96 -4.92 1.22 7.72 10.92" y="0" font-size="10.99">counts</text>
<text transform="translate(1193.90,575.00) rotate(90) scale(1.1115,1)" x="-17.58 -12.34 -6.01 -2.68 0.42 2.86 8.85 11.89" y="0" font-size="10.99">cut in x</text>
<rect x="1108.4" y="519.5" width="73.6" height="16.4" rx="2.2" fill="#fff" fill-opacity="0.8" stroke="#cccccc" stroke-opacity="0.8" stroke-width="1"/>
<line x1="1111.6" y1="527.6" x2="1133.4" y2="527.6" stroke="#0000ff" stroke-width="1.4"/>
<text transform="translate(1138.00,530.90) scale(1.1200,1)" x="0 6.19 13.2 19.12 25.04 30.96" y="0" font-size="10.99">y=1500</text>
<text transform="translate(987.20,750.30) scale(1.0990,1)" x="-0.14 5.16 11.55 14.92 18.05 20.54 26.58 29.67 35.2 38.18 44.09 50.38 53.74 56.64 61.84 67.74 73.94 77.24 79.73 85.74 91.92 95.56 101.49" y="0" font-size="10.99">cut in y not configured</text>
</svg></body></html>
